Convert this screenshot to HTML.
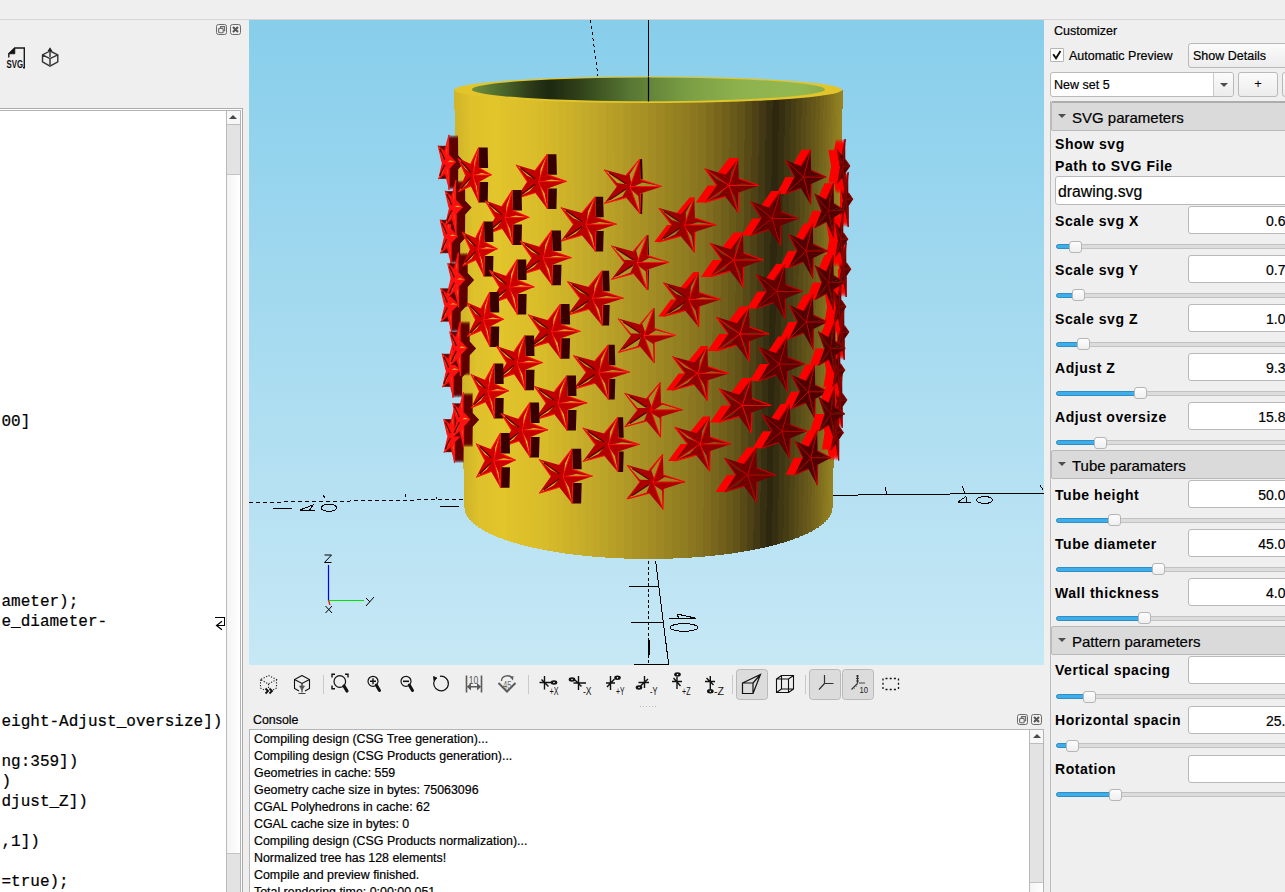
<!DOCTYPE html>
<html><head><meta charset="utf-8">
<style>
*{box-sizing:border-box;margin:0;padding:0}
html,body{width:1285px;height:892px;overflow:hidden;background:#efefef;font-family:"Liberation Sans",sans-serif;color:#000}
.a{position:absolute}
.topline{left:0;top:19px;width:1285px;height:1px;background:#d6d6d6}
/* editor */
.edframe{left:-2px;top:108px;width:245px;height:790px;border:1px solid #ababab;background:#fff}
.edinner{left:-2px;top:110px;width:243px;height:790px;border:1px solid #b3b3b3;background:#fff}
.ed{left:0;top:111px;width:226px;height:781px;background:#fff;font-family:"Liberation Mono",monospace;font-size:16px;white-space:pre;-webkit-text-stroke:0.2px #000}
.ed div{position:absolute;left:1.5px;height:20px;line-height:20px}
.vsb{border-left:1px solid #b9b9b9;background:linear-gradient(90deg,#f4f4f4,#ffffff)}
.sbbtn{background:#f7f7f7;border-bottom:1px solid #bdbdbd}
.sbhandle{background:#e3e3e3;border-bottom:1px solid #c4c4c4}
.uparrow{width:0;height:0;border-left:4px solid transparent;border-right:4px solid transparent;border-bottom:4px solid #4a4a4a}
/* console */
.cons{left:249px;top:729px;width:795px;height:170px;border:1px solid #b5b5b5;border-right:none;background:#fff;font-size:12.4px;-webkit-text-stroke:0.2px #000}
.cons div{position:absolute;margin-top:1px;left:4px;height:17px;line-height:17px;white-space:pre}
/* customizer */
.cust{font-size:12.5px;-webkit-text-stroke:0.2px #000}
.lbl{position:absolute;left:1055px;font-weight:bold;font-size:14px;letter-spacing:0.55px;white-space:pre}
.inp{position:absolute;left:1188px;width:110px;height:28px;background:#fff;border:1px solid #b9b9b9;border-radius:3px}
.val{position:absolute;font-size:14px;white-space:pre;-webkit-text-stroke:0.2px #000}
.groove{position:absolute;left:1056px;width:240px;height:5px;border-radius:3px;background:#dcdcdc;border:1px solid #c2c2c2}
.gfill{position:absolute;left:1056px;height:5px;border-radius:3px;background:#3daee9;border:1px solid #2f8fc4}
.handle{position:absolute;width:13px;height:12px;border-radius:3px;background:linear-gradient(#fdfdfd,#efefef);border:1px solid #b5b5b5}
.ghead{position:absolute;left:1051px;width:240px;height:30px;background:#dadada;border:1px solid #b9b9b9;border-top:2px solid #adadad;border-radius:2px;font-size:15px;white-space:pre}
.tri{position:absolute;width:0;height:0;border-left:4px solid transparent;border-right:4px solid transparent;border-top:4px solid #4d4d4d}
.btn{position:absolute;background:linear-gradient(#fbfbfb,#ececec);border:1px solid #b9b9b9;border-radius:3px}
.pressed{position:absolute;background:#dcdcdc;border:1px solid #b4b4b4;border-radius:3px}
</style></head><body>
<div class="a topline"></div>

<!-- LEFT PANEL -->
<svg class="a" style="left:215px;top:23px" width="28" height="14" viewBox="0 0 28 14">
 <rect x="1.5" y="1.5" width="10" height="10" rx="2" fill="none" stroke="#6b6b6b" stroke-width="1"/>
 <rect x="3.6" y="5.4" width="4.6" height="4.4" rx="1" fill="none" stroke="#6b6b6b" stroke-width="1.1"/>
 <path d="M5.6 5.2 V3.6 H9.6 V7.6 H8.4" fill="none" stroke="#6b6b6b" stroke-width="1.1"/>
 <rect x="15.5" y="1.5" width="10" height="10" rx="2" fill="none" stroke="#6b6b6b" stroke-width="1"/>
 <path d="M18 4 L23 9 M23 4 L18 9" stroke="#555" stroke-width="2"/>
</svg>
<svg class="a" style="left:0;top:40px" width="70" height="32" viewBox="0 40 70 32">
 <path d="M8.8 57.5 V53.8 L14.8 48 H24.3 V67.8 H23" fill="none" stroke="#1a1a1a" stroke-width="1.4"/>
 <path d="M8.8 53.8 L14.8 48 V53.8 Z" fill="#111" stroke="#111" stroke-width="0.8"/>
 <text x="6.5" y="68.3" font-family="Liberation Sans" font-weight="bold" font-size="11.5" fill="#111" textLength="16.5" lengthAdjust="spacingAndGlyphs">SVG</text>
 <path d="M42.5 54.8 L50 51 L57.8 54.8 V61.8 L50 66.2 L42.5 61.8 Z M42.5 54.8 L50 58.6 L57.8 54.8" fill="none" stroke="#333" stroke-width="1.4" stroke-linejoin="round"/>
 <path d="M50 58.6 V66" stroke="#555" stroke-width="1.8"/>
 <path d="M50 49.5 V57" stroke="#444" stroke-width="1.6"/>
 <path d="M47.6 51 L50 47.3 L52.4 51 Z" fill="#222"/>
</svg>

<div class="a edframe"></div>
<div class="a edinner"></div>
<div class="a ed" id="ed">
 <div style="top:301px">00]</div>
 <div style="top:481px">ameter);</div>
 <div style="top:501px">e_diameter-</div>
 <div style="top:601px">eight-Adjust_oversize])</div>
 <div style="top:641px">ng:359])</div>
 <div style="top:661px">)</div>
 <div style="top:681px">djust_Z])</div>
 <div style="top:721px">,1])</div>
 <div style="top:761px">=true);</div>
</div>
<svg class="a" style="left:210px;top:610px" width="20" height="24" viewBox="0 0 20 24">
 <path d="M5 7.5 H14.8 V15.5 H6.5" fill="none" stroke="#000" stroke-width="1.1" shape-rendering="crispEdges"/>
 <path d="M12 11.3 L6.5 15.5 L12 19.8" fill="none" stroke="#000" stroke-width="1.2"/>
</svg>
<div class="a vsb" style="left:226px;top:111px;width:14px;height:781px"></div>
<div class="a sbbtn" style="left:227px;top:111px;width:13px;height:14px"></div>
<div class="a uparrow" style="left:229px;top:115px"></div>
<div class="a sbhandle" style="left:227px;top:125px;width:13px;height:50px"></div>
<div class="a sbhandle" style="left:227px;top:853px;width:13px;height:40px;border-top:1px solid #c4c4c4"></div>

<!-- VIEWPORT -->
<div class="a" id="vp" style="left:249px;top:20px;width:795px;height:645px;overflow:hidden"><svg class="a" style="left:0;top:0" width="795" height="645" viewBox="249 20 795 645">
<defs>
 <linearGradient id="bg" x1="0" y1="0" x2="0" y2="1"><stop offset="0" stop-color="#87ceeb"/><stop offset="1" stop-color="#c7e8f5"/></linearGradient>
 <linearGradient id="cyl" gradientUnits="userSpaceOnUse" x1="454" y1="0" x2="842" y2="0">
  <stop offset="0" stop-color="#d0b42a"/>
  <stop offset="0.04" stop-color="#dec12b"/>
  <stop offset="0.1" stop-color="#e3c52c"/>
  <stop offset="0.22" stop-color="#d9bc2a"/>
  <stop offset="0.376" stop-color="#bea529"/>
  <stop offset="0.505" stop-color="#a48e24"/>
  <stop offset="0.634" stop-color="#897520"/>
  <stop offset="0.737" stop-color="#65561a"/>
  <stop offset="0.8" stop-color="#403613"/>
  <stop offset="0.83" stop-color="#2d2710"/>
  <stop offset="0.88" stop-color="#4a4016"/>
  <stop offset="0.943" stop-color="#6e5f1c"/>
  <stop offset="1" stop-color="#968422"/>
 </linearGradient>
 <linearGradient id="hole" gradientUnits="userSpaceOnUse" x1="472" y1="0" x2="825" y2="0">
  <stop offset="0" stop-color="#6f8f3e"/>
  <stop offset="0.09" stop-color="#4a6529"/>
  <stop offset="0.17" stop-color="#2a3917"/>
  <stop offset="0.22" stop-color="#1d2810"/>
  <stop offset="0.3" stop-color="#2f4019"/>
  <stop offset="0.45" stop-color="#587834"/>
  <stop offset="0.6" stop-color="#789c43"/>
  <stop offset="0.75" stop-color="#8db14d"/>
  <stop offset="0.93" stop-color="#94b851"/>
  <stop offset="1" stop-color="#8aad4a"/>
 </linearGradient>
</defs>
<rect x="249" y="20" width="795" height="645" fill="url(#bg)"/>
<!-- axes behind -->
<g stroke="#000" fill="none" stroke-width="1" shape-rendering="crispEdges">
 <path d="M648.5 20 V101"/>
 <path d="M590.5 20 L598 76" stroke-dasharray="3 3"/>
 <path d="M249 502.5 L465 499.3" stroke-dasharray="4 3"/>
 <path d="M831 495.3 L1044 493" />
 <path d="M885 487 L887 494 M962 486 L965 493 M1040 485 L1043 490"/>
 <path d="M323.5 495 L324.5 498 M405.5 494 L406 497 M436 497 L437 499"/>
 <path d="M273 508.5 H292 M440 506.5 H459"/>
 <path d="M300 510 H315 M300 510 L313 505 L309 511"/>
 <ellipse cx="329" cy="507.8" rx="7.7" ry="3.6"/>
 <path d="M958 502 H971 M958 502 L966 496.5 L967 503"/>
 <ellipse cx="984.6" cy="500" rx="8" ry="3.5"/>
 <path d="M648.5 561 V664" stroke-dasharray="3 2.5"/>
 <path d="M655.6 561 L668.6 664"/>
 <path d="M629 586.5 H658.3 M631 622.5 H663.3 M634 664 H669"/>
 <path d="M669 618 H696 M677 614 L679 619 M677 614 L695 618"/>
 <ellipse cx="684" cy="627.5" rx="14" ry="3.8"/>
 <path d="M648.5 640 V655" stroke-width="2"/>
</g>
<!-- cylinder -->
<g><polygon points="844.0,199.6 839.3,206.5 839.2,227.0 836.1,210.7 831.3,216.5 834.1,199.6 831.3,182.7 836.1,188.5 839.2,172.2 839.3,192.7" fill="#ff0000"/><polygon points="844.6,199.6 839.9,206.5 839.8,227.0 836.7,210.7 831.9,216.5 834.7,199.6 831.9,182.7 836.7,188.5 839.8,172.2 839.9,192.7" fill="#ff0000"/><polygon points="845.2,199.6 840.5,206.5 840.4,227.0 837.3,210.7 832.5,216.5 835.3,199.6 832.5,182.7 837.3,188.5 840.4,172.2 840.5,192.7" fill="#ff0000"/><polygon points="845.8,199.6 841.1,206.5 841.0,227.0 837.9,210.7 833.1,216.5 835.9,199.6 833.1,182.7 837.9,188.5 841.0,172.2 841.1,192.7" fill="#ff0000"/><polygon points="846.4,199.6 841.7,206.5 841.6,227.0 838.5,210.7 833.7,216.5 836.5,199.6 833.7,182.7 838.5,188.5 841.6,172.2 841.7,192.7" fill="#ff0000"/><polygon points="847.0,199.6 842.3,206.5 842.2,227.0 839.1,210.7 834.3,216.5 837.1,199.6 834.3,182.7 839.1,188.5 842.2,172.2 842.3,192.7" fill="#ff0000"/><polygon points="847.6,199.6 842.9,206.5 842.8,227.0 839.7,210.7 834.9,216.5 837.7,199.6 834.9,182.7 839.7,188.5 842.8,172.2 842.9,192.7" fill="#ff0000"/><polygon points="848.2,199.6 843.5,206.5 843.4,227.0 840.3,210.7 835.5,216.5 838.3,199.6 835.5,182.7 840.3,188.5 843.4,172.2 843.5,192.7" fill="#ff0000"/><polygon points="848.8,199.6 844.1,206.5 844.0,227.0 840.9,210.7 836.1,216.5 838.9,199.6 836.1,182.7 840.9,188.5 844.0,172.2 844.1,192.7" fill="#ff0000"/><polygon points="849.4,199.6 844.7,206.5 844.6,227.0 841.5,210.7 836.7,216.5 839.5,199.6 836.7,182.7 841.5,188.5 844.6,172.2 844.7,192.7" fill="#ff0000"/><polygon points="850.0,199.6 845.3,206.5 845.2,227.0 842.1,210.7 837.3,216.5 840.1,199.6 837.3,182.7 842.1,188.5 845.2,172.2 845.3,192.7" fill="#ff0000"/><polygon points="850.6,199.6 845.9,206.5 845.8,227.0 842.7,210.7 837.9,216.5 840.7,199.6 837.9,182.7 842.7,188.5 845.8,172.2 845.9,192.7" fill="#ff0000"/><polygon points="851.2,199.6 846.5,206.5 846.4,227.0 843.3,210.7 838.5,216.5 841.3,199.6 838.5,182.7 843.3,188.5 846.4,172.2 846.5,192.7" fill="#ff0000"/><polygon points="851.8,199.6 847.1,206.5 847.0,227.0 843.9,210.7 839.1,216.5 841.9,199.6 839.1,182.7 843.9,188.5 847.0,172.2 847.1,192.7" fill="#ff0000"/><polygon points="852.4,199.6 847.7,206.5 847.6,227.0 844.5,210.7 839.7,216.5 842.5,199.6 839.7,182.7 844.5,188.5 847.6,172.2 847.7,192.7" fill="#ff0000"/><polygon points="853.0,199.6 848.3,206.5 848.2,227.0 845.1,210.7 840.3,216.5 843.1,199.6 840.3,182.7 845.1,188.5 848.2,172.2 848.3,192.7" fill="#5a0000"/><polygon points="846.8,199.6 849.2,197.5 853.0,199.6" fill="url(#cyl)"/><polygon points="846.8,199.6 849.2,197.5 853.0,199.6" fill="#3a0000" fill-opacity="0.90"/><line x1="848.3" y1="192.7" x2="853.0" y2="199.6" stroke="#900000" stroke-width="1.1"/><polygon points="846.3,202.9 847.5,211.2 848.2,227.0" fill="url(#cyl)"/><polygon points="846.3,202.9 847.5,211.2 848.2,227.0" fill="#3a0000" fill-opacity="0.90"/><line x1="848.3" y1="206.5" x2="848.2" y2="227.0" stroke="#900000" stroke-width="1.1"/><polygon points="845.3,201.6 843.7,208.9 840.3,216.5" fill="url(#cyl)"/><polygon points="845.3,201.6 843.7,208.9 840.3,216.5" fill="#3a0000" fill-opacity="0.90"/><line x1="845.1" y1="210.7" x2="840.3" y2="216.5" stroke="#900000" stroke-width="1.1"/><polygon points="845.3,197.6 843.1,193.7 840.3,182.7" fill="url(#cyl)"/><polygon points="845.3,197.6 843.1,193.7 840.3,182.7" fill="#3a0000" fill-opacity="0.90"/><line x1="843.1" y1="199.6" x2="840.3" y2="182.7" stroke="#900000" stroke-width="1.1"/><polygon points="846.3,196.3 846.5,186.7 848.2,172.2" fill="url(#cyl)"/><polygon points="846.3,196.3 846.5,186.7 848.2,172.2" fill="#3a0000" fill-opacity="0.90"/><line x1="845.1" y1="188.5" x2="848.2" y2="172.2" stroke="#900000" stroke-width="1.1"/><line x1="846.0" y1="199.6" x2="853.0" y2="199.6" stroke="#900000" stroke-width="1.0"/><line x1="846.0" y1="199.6" x2="848.2" y2="227.0" stroke="#900000" stroke-width="1.0"/><line x1="846.0" y1="199.6" x2="840.3" y2="216.5" stroke="#900000" stroke-width="1.0"/><line x1="846.0" y1="199.6" x2="840.3" y2="182.7" stroke="#900000" stroke-width="1.0"/><line x1="846.0" y1="199.6" x2="848.2" y2="172.2" stroke="#900000" stroke-width="1.0"/></g>
<g><polygon points="842.0,269.6 837.3,276.5 837.2,297.0 834.1,280.7 829.3,286.5 832.1,269.6 829.3,252.7 834.1,258.5 837.2,242.2 837.3,262.7" fill="#ff0000"/><polygon points="842.6,269.6 837.9,276.5 837.8,297.0 834.7,280.7 829.9,286.5 832.7,269.6 829.9,252.7 834.7,258.5 837.8,242.2 837.9,262.7" fill="#ff0000"/><polygon points="843.2,269.6 838.5,276.5 838.4,297.0 835.3,280.7 830.5,286.5 833.3,269.6 830.5,252.7 835.3,258.5 838.4,242.2 838.5,262.7" fill="#ff0000"/><polygon points="843.8,269.6 839.1,276.5 839.0,297.0 835.9,280.7 831.1,286.5 833.9,269.6 831.1,252.7 835.9,258.5 839.0,242.2 839.1,262.7" fill="#ff0000"/><polygon points="844.4,269.6 839.7,276.5 839.6,297.0 836.5,280.7 831.7,286.5 834.5,269.6 831.7,252.7 836.5,258.5 839.6,242.2 839.7,262.7" fill="#ff0000"/><polygon points="845.0,269.6 840.3,276.5 840.2,297.0 837.1,280.7 832.3,286.5 835.1,269.6 832.3,252.7 837.1,258.5 840.2,242.2 840.3,262.7" fill="#ff0000"/><polygon points="845.6,269.6 840.9,276.5 840.8,297.0 837.7,280.7 832.9,286.5 835.7,269.6 832.9,252.7 837.7,258.5 840.8,242.2 840.9,262.7" fill="#ff0000"/><polygon points="846.2,269.6 841.5,276.5 841.4,297.0 838.3,280.7 833.5,286.5 836.3,269.6 833.5,252.7 838.3,258.5 841.4,242.2 841.5,262.7" fill="#ff0000"/><polygon points="846.8,269.6 842.1,276.5 842.0,297.0 838.9,280.7 834.1,286.5 836.9,269.6 834.1,252.7 838.9,258.5 842.0,242.2 842.1,262.7" fill="#ff0000"/><polygon points="847.4,269.6 842.7,276.5 842.6,297.0 839.5,280.7 834.7,286.5 837.5,269.6 834.7,252.7 839.5,258.5 842.6,242.2 842.7,262.7" fill="#ff0000"/><polygon points="848.0,269.6 843.3,276.5 843.2,297.0 840.1,280.7 835.3,286.5 838.1,269.6 835.3,252.7 840.1,258.5 843.2,242.2 843.3,262.7" fill="#ff0000"/><polygon points="848.6,269.6 843.9,276.5 843.8,297.0 840.7,280.7 835.9,286.5 838.7,269.6 835.9,252.7 840.7,258.5 843.8,242.2 843.9,262.7" fill="#ff0000"/><polygon points="849.2,269.6 844.5,276.5 844.4,297.0 841.3,280.7 836.5,286.5 839.3,269.6 836.5,252.7 841.3,258.5 844.4,242.2 844.5,262.7" fill="#ff0000"/><polygon points="849.8,269.6 845.1,276.5 845.0,297.0 841.9,280.7 837.1,286.5 839.9,269.6 837.1,252.7 841.9,258.5 845.0,242.2 845.1,262.7" fill="#ff0000"/><polygon points="850.4,269.6 845.7,276.5 845.6,297.0 842.5,280.7 837.7,286.5 840.5,269.6 837.7,252.7 842.5,258.5 845.6,242.2 845.7,262.7" fill="#ff0000"/><polygon points="851.0,269.6 846.3,276.5 846.2,297.0 843.1,280.7 838.3,286.5 841.1,269.6 838.3,252.7 843.1,258.5 846.2,242.2 846.3,262.7" fill="#5a0000"/><polygon points="844.8,269.6 847.2,267.5 851.0,269.6" fill="url(#cyl)"/><polygon points="844.8,269.6 847.2,267.5 851.0,269.6" fill="#3a0000" fill-opacity="0.90"/><line x1="846.3" y1="262.7" x2="851.0" y2="269.6" stroke="#900000" stroke-width="1.1"/><polygon points="844.3,272.9 845.5,281.2 846.2,297.0" fill="url(#cyl)"/><polygon points="844.3,272.9 845.5,281.2 846.2,297.0" fill="#3a0000" fill-opacity="0.90"/><line x1="846.3" y1="276.5" x2="846.2" y2="297.0" stroke="#900000" stroke-width="1.1"/><polygon points="843.3,271.6 841.7,278.9 838.3,286.5" fill="url(#cyl)"/><polygon points="843.3,271.6 841.7,278.9 838.3,286.5" fill="#3a0000" fill-opacity="0.90"/><line x1="843.1" y1="280.7" x2="838.3" y2="286.5" stroke="#900000" stroke-width="1.1"/><polygon points="843.3,267.6 841.1,263.7 838.3,252.7" fill="url(#cyl)"/><polygon points="843.3,267.6 841.1,263.7 838.3,252.7" fill="#3a0000" fill-opacity="0.90"/><line x1="841.1" y1="269.6" x2="838.3" y2="252.7" stroke="#900000" stroke-width="1.1"/><polygon points="844.3,266.3 844.5,256.7 846.2,242.2" fill="url(#cyl)"/><polygon points="844.3,266.3 844.5,256.7 846.2,242.2" fill="#3a0000" fill-opacity="0.90"/><line x1="843.1" y1="258.5" x2="846.2" y2="242.2" stroke="#900000" stroke-width="1.1"/><line x1="844.0" y1="269.6" x2="851.0" y2="269.6" stroke="#900000" stroke-width="1.0"/><line x1="844.0" y1="269.6" x2="846.2" y2="297.0" stroke="#900000" stroke-width="1.0"/><line x1="844.0" y1="269.6" x2="838.3" y2="286.5" stroke="#900000" stroke-width="1.0"/><line x1="844.0" y1="269.6" x2="838.3" y2="252.7" stroke="#900000" stroke-width="1.0"/><line x1="844.0" y1="269.6" x2="846.2" y2="242.2" stroke="#900000" stroke-width="1.0"/></g>
<g><polygon points="840.0,332.4 835.3,339.3 835.2,359.8 832.1,343.5 827.3,349.3 830.1,332.4 827.3,315.5 832.1,321.3 835.2,305.0 835.3,325.5" fill="#ff0000"/><polygon points="840.6,332.4 835.9,339.3 835.8,359.8 832.7,343.5 827.9,349.3 830.7,332.4 827.9,315.5 832.7,321.3 835.8,305.0 835.9,325.5" fill="#ff0000"/><polygon points="841.2,332.4 836.5,339.3 836.4,359.8 833.3,343.5 828.5,349.3 831.3,332.4 828.5,315.5 833.3,321.3 836.4,305.0 836.5,325.5" fill="#ff0000"/><polygon points="841.8,332.4 837.1,339.3 837.0,359.8 833.9,343.5 829.1,349.3 831.9,332.4 829.1,315.5 833.9,321.3 837.0,305.0 837.1,325.5" fill="#ff0000"/><polygon points="842.4,332.4 837.7,339.3 837.6,359.8 834.5,343.5 829.7,349.3 832.5,332.4 829.7,315.5 834.5,321.3 837.6,305.0 837.7,325.5" fill="#ff0000"/><polygon points="843.0,332.4 838.3,339.3 838.2,359.8 835.1,343.5 830.3,349.3 833.1,332.4 830.3,315.5 835.1,321.3 838.2,305.0 838.3,325.5" fill="#ff0000"/><polygon points="843.6,332.4 838.9,339.3 838.8,359.8 835.7,343.5 830.9,349.3 833.7,332.4 830.9,315.5 835.7,321.3 838.8,305.0 838.9,325.5" fill="#ff0000"/><polygon points="844.2,332.4 839.5,339.3 839.4,359.8 836.3,343.5 831.5,349.3 834.3,332.4 831.5,315.5 836.3,321.3 839.4,305.0 839.5,325.5" fill="#ff0000"/><polygon points="844.8,332.4 840.1,339.3 840.0,359.8 836.9,343.5 832.1,349.3 834.9,332.4 832.1,315.5 836.9,321.3 840.0,305.0 840.1,325.5" fill="#ff0000"/><polygon points="845.4,332.4 840.7,339.3 840.6,359.8 837.5,343.5 832.7,349.3 835.5,332.4 832.7,315.5 837.5,321.3 840.6,305.0 840.7,325.5" fill="#ff0000"/><polygon points="846.0,332.4 841.3,339.3 841.2,359.8 838.1,343.5 833.3,349.3 836.1,332.4 833.3,315.5 838.1,321.3 841.2,305.0 841.3,325.5" fill="#ff0000"/><polygon points="846.6,332.4 841.9,339.3 841.8,359.8 838.7,343.5 833.9,349.3 836.7,332.4 833.9,315.5 838.7,321.3 841.8,305.0 841.9,325.5" fill="#ff0000"/><polygon points="847.2,332.4 842.5,339.3 842.4,359.8 839.3,343.5 834.5,349.3 837.3,332.4 834.5,315.5 839.3,321.3 842.4,305.0 842.5,325.5" fill="#ff0000"/><polygon points="847.8,332.4 843.1,339.3 843.0,359.8 839.9,343.5 835.1,349.3 837.9,332.4 835.1,315.5 839.9,321.3 843.0,305.0 843.1,325.5" fill="#ff0000"/><polygon points="848.4,332.4 843.7,339.3 843.6,359.8 840.5,343.5 835.7,349.3 838.5,332.4 835.7,315.5 840.5,321.3 843.6,305.0 843.7,325.5" fill="#ff0000"/><polygon points="849.0,332.4 844.3,339.3 844.2,359.8 841.1,343.5 836.3,349.3 839.1,332.4 836.3,315.5 841.1,321.3 844.2,305.0 844.3,325.5" fill="#5a0000"/><polygon points="842.8,332.4 845.2,330.3 849.0,332.4" fill="url(#cyl)"/><polygon points="842.8,332.4 845.2,330.3 849.0,332.4" fill="#3a0000" fill-opacity="0.90"/><line x1="844.3" y1="325.5" x2="849.0" y2="332.4" stroke="#900000" stroke-width="1.1"/><polygon points="842.3,335.7 843.5,344.0 844.2,359.8" fill="url(#cyl)"/><polygon points="842.3,335.7 843.5,344.0 844.2,359.8" fill="#3a0000" fill-opacity="0.90"/><line x1="844.3" y1="339.3" x2="844.2" y2="359.8" stroke="#900000" stroke-width="1.1"/><polygon points="841.3,334.4 839.7,341.7 836.3,349.3" fill="url(#cyl)"/><polygon points="841.3,334.4 839.7,341.7 836.3,349.3" fill="#3a0000" fill-opacity="0.90"/><line x1="841.1" y1="343.5" x2="836.3" y2="349.3" stroke="#900000" stroke-width="1.1"/><polygon points="841.3,330.4 839.1,326.5 836.3,315.5" fill="url(#cyl)"/><polygon points="841.3,330.4 839.1,326.5 836.3,315.5" fill="#3a0000" fill-opacity="0.90"/><line x1="839.1" y1="332.4" x2="836.3" y2="315.5" stroke="#900000" stroke-width="1.1"/><polygon points="842.3,329.1 842.5,319.5 844.2,305.0" fill="url(#cyl)"/><polygon points="842.3,329.1 842.5,319.5 844.2,305.0" fill="#3a0000" fill-opacity="0.90"/><line x1="841.1" y1="321.3" x2="844.2" y2="305.0" stroke="#900000" stroke-width="1.1"/><line x1="842.0" y1="332.4" x2="849.0" y2="332.4" stroke="#900000" stroke-width="1.0"/><line x1="842.0" y1="332.4" x2="844.2" y2="359.8" stroke="#900000" stroke-width="1.0"/><line x1="842.0" y1="332.4" x2="836.3" y2="349.3" stroke="#900000" stroke-width="1.0"/><line x1="842.0" y1="332.4" x2="836.3" y2="315.5" stroke="#900000" stroke-width="1.0"/><line x1="842.0" y1="332.4" x2="844.2" y2="305.0" stroke="#900000" stroke-width="1.0"/></g>
<g><polygon points="838.0,400.4 833.3,407.3 833.2,427.8 830.1,411.5 825.3,417.3 828.1,400.4 825.3,383.5 830.1,389.3 833.2,373.0 833.3,393.5" fill="#ff0000"/><polygon points="838.6,400.4 833.9,407.3 833.8,427.8 830.7,411.5 825.9,417.3 828.7,400.4 825.9,383.5 830.7,389.3 833.8,373.0 833.9,393.5" fill="#ff0000"/><polygon points="839.2,400.4 834.5,407.3 834.4,427.8 831.3,411.5 826.5,417.3 829.3,400.4 826.5,383.5 831.3,389.3 834.4,373.0 834.5,393.5" fill="#ff0000"/><polygon points="839.8,400.4 835.1,407.3 835.0,427.8 831.9,411.5 827.1,417.3 829.9,400.4 827.1,383.5 831.9,389.3 835.0,373.0 835.1,393.5" fill="#ff0000"/><polygon points="840.4,400.4 835.7,407.3 835.6,427.8 832.5,411.5 827.7,417.3 830.5,400.4 827.7,383.5 832.5,389.3 835.6,373.0 835.7,393.5" fill="#ff0000"/><polygon points="841.0,400.4 836.3,407.3 836.2,427.8 833.1,411.5 828.3,417.3 831.1,400.4 828.3,383.5 833.1,389.3 836.2,373.0 836.3,393.5" fill="#ff0000"/><polygon points="841.6,400.4 836.9,407.3 836.8,427.8 833.7,411.5 828.9,417.3 831.7,400.4 828.9,383.5 833.7,389.3 836.8,373.0 836.9,393.5" fill="#ff0000"/><polygon points="842.2,400.4 837.5,407.3 837.4,427.8 834.3,411.5 829.5,417.3 832.3,400.4 829.5,383.5 834.3,389.3 837.4,373.0 837.5,393.5" fill="#ff0000"/><polygon points="842.8,400.4 838.1,407.3 838.0,427.8 834.9,411.5 830.1,417.3 832.9,400.4 830.1,383.5 834.9,389.3 838.0,373.0 838.1,393.5" fill="#ff0000"/><polygon points="843.4,400.4 838.7,407.3 838.6,427.8 835.5,411.5 830.7,417.3 833.5,400.4 830.7,383.5 835.5,389.3 838.6,373.0 838.7,393.5" fill="#ff0000"/><polygon points="844.0,400.4 839.3,407.3 839.2,427.8 836.1,411.5 831.3,417.3 834.1,400.4 831.3,383.5 836.1,389.3 839.2,373.0 839.3,393.5" fill="#ff0000"/><polygon points="844.6,400.4 839.9,407.3 839.8,427.8 836.7,411.5 831.9,417.3 834.7,400.4 831.9,383.5 836.7,389.3 839.8,373.0 839.9,393.5" fill="#ff0000"/><polygon points="845.2,400.4 840.5,407.3 840.4,427.8 837.3,411.5 832.5,417.3 835.3,400.4 832.5,383.5 837.3,389.3 840.4,373.0 840.5,393.5" fill="#ff0000"/><polygon points="845.8,400.4 841.1,407.3 841.0,427.8 837.9,411.5 833.1,417.3 835.9,400.4 833.1,383.5 837.9,389.3 841.0,373.0 841.1,393.5" fill="#ff0000"/><polygon points="846.4,400.4 841.7,407.3 841.6,427.8 838.5,411.5 833.7,417.3 836.5,400.4 833.7,383.5 838.5,389.3 841.6,373.0 841.7,393.5" fill="#ff0000"/><polygon points="847.0,400.4 842.3,407.3 842.2,427.8 839.1,411.5 834.3,417.3 837.1,400.4 834.3,383.5 839.1,389.3 842.2,373.0 842.3,393.5" fill="#5a0000"/><polygon points="840.8,400.4 843.2,398.3 847.0,400.4" fill="url(#cyl)"/><polygon points="840.8,400.4 843.2,398.3 847.0,400.4" fill="#3a0000" fill-opacity="0.90"/><line x1="842.3" y1="393.5" x2="847.0" y2="400.4" stroke="#900000" stroke-width="1.1"/><polygon points="840.3,403.7 841.5,412.0 842.2,427.8" fill="url(#cyl)"/><polygon points="840.3,403.7 841.5,412.0 842.2,427.8" fill="#3a0000" fill-opacity="0.90"/><line x1="842.3" y1="407.3" x2="842.2" y2="427.8" stroke="#900000" stroke-width="1.1"/><polygon points="839.3,402.4 837.7,409.7 834.3,417.3" fill="url(#cyl)"/><polygon points="839.3,402.4 837.7,409.7 834.3,417.3" fill="#3a0000" fill-opacity="0.90"/><line x1="839.1" y1="411.5" x2="834.3" y2="417.3" stroke="#900000" stroke-width="1.1"/><polygon points="839.3,398.4 837.1,394.5 834.3,383.5" fill="url(#cyl)"/><polygon points="839.3,398.4 837.1,394.5 834.3,383.5" fill="#3a0000" fill-opacity="0.90"/><line x1="837.1" y1="400.4" x2="834.3" y2="383.5" stroke="#900000" stroke-width="1.1"/><polygon points="840.3,397.1 840.5,387.5 842.2,373.0" fill="url(#cyl)"/><polygon points="840.3,397.1 840.5,387.5 842.2,373.0" fill="#3a0000" fill-opacity="0.90"/><line x1="839.1" y1="389.3" x2="842.2" y2="373.0" stroke="#900000" stroke-width="1.1"/><line x1="840.0" y1="400.4" x2="847.0" y2="400.4" stroke="#900000" stroke-width="1.0"/><line x1="840.0" y1="400.4" x2="842.2" y2="427.8" stroke="#900000" stroke-width="1.0"/><line x1="840.0" y1="400.4" x2="834.3" y2="417.3" stroke="#900000" stroke-width="1.0"/><line x1="840.0" y1="400.4" x2="834.3" y2="383.5" stroke="#900000" stroke-width="1.0"/><line x1="840.0" y1="400.4" x2="842.2" y2="373.0" stroke="#900000" stroke-width="1.0"/></g>
<g shape-rendering="crispEdges"><polygon points="454.00,89.80 455.18,90.24 465.67,510.22 464.50,508.00" fill="#d0b42a"/>
<polygon points="454.18,90.24 455.74,90.69 466.20,512.44 464.67,510.22" fill="#d0b42a"/>
<polygon points="454.74,90.69 456.66,91.13 467.07,514.66 465.20,512.44" fill="#d1b42a"/>
<polygon points="455.66,91.13 457.95,91.57 468.29,516.86 466.07,514.66" fill="#d2b52a"/>
<polygon points="456.95,91.57 459.60,92.01 469.85,519.04 467.29,516.86" fill="#d3b72a"/>
<polygon points="458.60,92.01 461.61,92.44 471.75,521.20 468.85,519.04" fill="#d5b82a"/>
<polygon points="460.61,92.44 463.98,92.87 473.99,523.34 470.75,521.20" fill="#d6ba2a"/>
<polygon points="462.98,92.87 466.70,93.29 476.57,525.44 472.99,523.34" fill="#d9bc2a"/>
<polygon points="465.70,93.29 469.77,93.70 479.47,527.52 475.57,525.44" fill="#dbbf2a"/>
<polygon points="468.77,93.70 473.18,94.11 482.69,529.55 478.47,527.52" fill="#dec12b"/>
<polygon points="472.18,94.11 476.92,94.51 486.23,531.55 481.69,529.55" fill="#dec12b"/>
<polygon points="475.92,94.51 480.99,94.90 490.08,533.50 485.23,531.55" fill="#dfc22b"/>
<polygon points="479.99,94.90 485.38,95.28 494.24,535.40 489.08,533.50" fill="#e0c32b"/>
<polygon points="484.38,95.28 490.08,95.65 498.69,537.25 493.24,535.40" fill="#e1c32b"/>
<polygon points="489.08,95.65 495.09,96.01 503.42,539.05 497.69,537.25" fill="#e2c42b"/>
<polygon points="494.09,96.01 500.39,96.36 508.43,540.78 502.42,539.05" fill="#e2c42b"/>
<polygon points="499.39,96.36 505.97,96.69 513.71,542.46 507.43,540.78" fill="#e0c32b"/>
<polygon points="504.97,96.69 511.82,97.01 519.25,544.06 512.71,542.46" fill="#dfc22b"/>
<polygon points="510.82,97.01 517.94,97.32 525.03,545.60 518.25,544.06" fill="#dec02b"/>
<polygon points="516.94,97.32 524.30,97.61 531.05,547.07 524.03,545.60" fill="#ddbf2a"/>
<polygon points="523.30,97.61 530.90,97.89 537.29,548.46 530.05,547.07" fill="#dbbe2a"/>
<polygon points="529.90,97.89 537.73,98.16 543.75,549.78 536.29,548.46" fill="#dabd2a"/>
<polygon points="536.73,98.16 544.76,98.40 550.41,551.01 542.75,549.78" fill="#d8bb29"/>
<polygon points="543.76,98.40 552.00,98.63 557.25,552.17 549.41,551.01" fill="#d5b829"/>
<polygon points="551.00,98.63 559.42,98.85 564.27,553.24 556.25,552.17" fill="#d2b629"/>
<polygon points="558.42,98.85 567.01,99.04 571.45,554.22 563.27,553.24" fill="#ceb329"/>
<polygon points="566.01,99.04 574.76,99.22 578.78,555.12 570.45,554.22" fill="#cbb029"/>
<polygon points="573.76,99.22 582.65,99.38 586.24,555.92 577.78,555.12" fill="#c7ad29"/>
<polygon points="581.65,99.38 590.66,99.53 593.82,556.64 585.24,555.92" fill="#c4aa29"/>
<polygon points="589.66,99.53 598.79,99.65 601.51,557.26 592.82,556.64" fill="#c0a729"/>
<polygon points="597.79,99.65 607.01,99.76 609.28,557.79 600.51,557.26" fill="#bca428"/>
<polygon points="606.01,99.76 615.31,99.85 617.14,558.23 608.28,557.79" fill="#b8a027"/>
<polygon points="614.31,99.85 623.68,99.91 625.05,558.56 616.14,558.23" fill="#b49c27"/>
<polygon points="622.68,99.91 632.09,99.96 633.01,558.81 624.05,558.56" fill="#af9826"/>
<polygon points="631.09,99.96 640.54,99.99 641.00,558.95 632.01,558.81" fill="#ab9425"/>
<polygon points="639.54,99.99 649.00,100.00 649.00,559.00 640.00,558.95" fill="#a79024"/>
<polygon points="648.00,100.00 657.46,99.99 657.00,558.95 648.00,559.00" fill="#a28c23"/>
<polygon points="656.46,99.99 665.91,99.96 664.99,558.81 656.00,558.95" fill="#9e8823"/>
<polygon points="664.91,99.96 674.32,99.91 672.95,558.56 663.99,558.81" fill="#998422"/>
<polygon points="673.32,99.91 682.69,99.85 680.86,558.23 671.95,558.56" fill="#958021"/>
<polygon points="681.69,99.85 690.99,99.76 688.72,557.79 679.86,558.23" fill="#907c21"/>
<polygon points="689.99,99.76 699.21,99.65 696.49,557.26 687.72,557.79" fill="#8c7720"/>
<polygon points="698.21,99.65 707.34,99.53 704.18,556.64 695.49,557.26" fill="#86731f"/>
<polygon points="706.34,99.53 715.35,99.38 711.76,555.92 703.18,556.64" fill="#7f6c1e"/>
<polygon points="714.35,99.38 723.24,99.22 719.22,555.12 710.76,555.92" fill="#78661d"/>
<polygon points="722.24,99.22 730.99,99.04 726.55,554.22 718.22,555.12" fill="#71601c"/>
<polygon points="729.99,99.04 738.58,98.85 733.73,553.24 725.55,554.22" fill="#6a5a1a"/>
<polygon points="737.58,98.85 746.00,98.63 740.75,552.17 732.73,553.24" fill="#625419"/>
<polygon points="745.00,98.63 753.24,98.40 747.59,551.01 739.75,552.17" fill="#574a17"/>
<polygon points="752.24,98.40 760.27,98.16 754.25,549.78 746.59,551.01" fill="#4d4115"/>
<polygon points="759.27,98.16 767.10,97.89 760.71,548.46 753.25,549.78" fill="#423813"/>
<polygon points="766.10,97.89 773.70,97.61 766.95,547.07 759.71,548.46" fill="#372f11"/>
<polygon points="772.70,97.61 780.06,97.32 772.97,545.60 765.95,547.07" fill="#2d2710"/>
<polygon points="779.06,97.32 786.18,97.01 778.75,544.06 771.97,545.60" fill="#362e11"/>
<polygon points="785.18,97.01 792.03,96.69 784.29,542.46 777.75,544.06" fill="#3f3613"/>
<polygon points="791.03,96.69 797.61,96.36 789.57,540.78 783.29,542.46" fill="#473d15"/>
<polygon points="796.61,96.36 802.91,96.01 794.58,539.05 788.57,540.78" fill="#4f4416"/>
<polygon points="801.91,96.01 807.92,95.65 799.31,537.25 793.58,539.05" fill="#574b18"/>
<polygon points="806.92,95.65 812.62,95.28 803.76,535.40 798.31,537.25" fill="#5e5119"/>
<polygon points="811.62,95.28 817.01,94.90 807.92,533.50 802.76,535.40" fill="#65571a"/>
<polygon points="816.01,94.90 821.08,94.51 811.77,531.55 806.92,533.50" fill="#6b5c1b"/>
<polygon points="820.08,94.51 824.82,94.11 815.31,529.55 810.77,531.55" fill="#71621c"/>
<polygon points="823.82,94.11 828.23,93.70 818.53,527.52 814.31,529.55" fill="#78681d"/>
<polygon points="827.23,93.70 831.30,93.29 821.43,525.44 817.53,527.52" fill="#7e6d1e"/>
<polygon points="830.30,93.29 834.02,92.87 824.01,523.34 820.43,525.44" fill="#83721f"/>
<polygon points="833.02,92.87 836.39,92.44 826.25,521.20 823.01,523.34" fill="#87771f"/>
<polygon points="835.39,92.44 838.40,92.01 828.15,519.04 825.25,521.20" fill="#8b7a20"/>
<polygon points="837.40,92.01 840.05,91.57 829.71,516.86 827.15,519.04" fill="#8f7d20"/>
<polygon points="839.05,91.57 841.34,91.13 830.93,514.66 828.71,516.86" fill="#918021"/>
<polygon points="840.34,91.13 842.26,90.69 831.80,512.44 829.93,514.66" fill="#938221"/>
<polygon points="841.26,90.69 842.82,90.24 832.33,510.22 830.80,512.44" fill="#958321"/>
<polygon points="841.82,90.24 843.00,89.80 832.50,508.00 831.33,510.22" fill="#958321"/></g>
<ellipse cx="648" cy="89.8" rx="194" ry="13.2" fill="#e2c52b"/>
<ellipse cx="648.4" cy="89.4" rx="176.6" ry="11.8" fill="url(#hole)"/>
<path d="M648.5 77 V101.5" stroke="#000" stroke-width="1.2"/>
<g><polygon points="464.6,162.3 458.2,169.2 458.0,189.7 453.8,173.4 447.2,179.2 451.1,162.3 447.2,145.4 453.8,151.2 458.0,134.9 458.2,155.4" fill="#600000"/><polygon points="464.0,162.3 457.6,169.2 457.4,189.7 453.2,173.4 446.6,179.2 450.5,162.3 446.6,145.4 453.2,151.2 457.4,134.9 457.6,155.4" fill="#600000"/><polygon points="463.4,162.3 457.0,169.2 456.8,189.7 452.6,173.4 446.0,179.2 449.9,162.3 446.0,145.4 452.6,151.2 456.8,134.9 457.0,155.4" fill="#600000"/><polygon points="462.8,162.3 456.4,169.2 456.2,189.7 452.0,173.4 445.4,179.2 449.3,162.3 445.4,145.4 452.0,151.2 456.2,134.9 456.4,155.4" fill="#600000"/><polygon points="462.2,162.3 455.8,169.2 455.6,189.7 451.4,173.4 444.8,179.2 448.7,162.3 444.8,145.4 451.4,151.2 455.6,134.9 455.8,155.4" fill="#600000"/><polygon points="461.6,162.3 455.2,169.2 455.0,189.7 450.8,173.4 444.2,179.2 448.1,162.3 444.2,145.4 450.8,151.2 455.0,134.9 455.2,155.4" fill="#600000"/><polygon points="461.0,162.3 454.6,169.2 454.4,189.7 450.2,173.4 443.6,179.2 447.5,162.3 443.6,145.4 450.2,151.2 454.4,134.9 454.6,155.4" fill="#600000"/><polygon points="460.4,162.3 454.0,169.2 453.8,189.7 449.6,173.4 443.0,179.2 446.9,162.3 443.0,145.4 449.6,151.2 453.8,134.9 454.0,155.4" fill="#600000"/><polygon points="459.8,162.3 453.4,169.2 453.2,189.7 449.0,173.4 442.4,179.2 446.3,162.3 442.4,145.4 449.0,151.2 453.2,134.9 453.4,155.4" fill="#600000"/><polygon points="459.2,162.3 452.8,169.2 452.6,189.7 448.4,173.4 441.8,179.2 445.7,162.3 441.8,145.4 448.4,151.2 452.6,134.9 452.8,155.4" fill="#600000"/><polygon points="458.6,162.3 452.2,169.2 452.0,189.7 447.8,173.4 441.2,179.2 445.1,162.3 441.2,145.4 447.8,151.2 452.0,134.9 452.2,155.4" fill="#600000"/><polygon points="458.0,162.3 451.6,169.2 451.4,189.7 447.2,173.4 440.6,179.2 444.5,162.3 440.6,145.4 447.2,151.2 451.4,134.9 451.6,155.4" fill="#600000"/><polygon points="457.4,162.3 451.0,169.2 450.8,189.7 446.6,173.4 440.0,179.2 443.9,162.3 440.0,145.4 446.6,151.2 450.8,134.9 451.0,155.4" fill="#600000"/><polygon points="456.8,162.3 450.4,169.2 450.2,189.7 446.0,173.4 439.4,179.2 443.3,162.3 439.4,145.4 446.0,151.2 450.2,134.9 450.4,155.4" fill="#600000"/><polygon points="456.2,162.3 449.8,169.2 449.6,189.7 445.4,173.4 438.8,179.2 442.7,162.3 438.8,145.4 445.4,151.2 449.6,134.9 449.8,155.4" fill="#600000"/><polygon points="455.6,162.3 449.2,169.2 449.0,189.7 444.8,173.4 438.2,179.2 442.1,162.3 438.2,145.4 444.8,151.2 449.0,134.9 449.2,155.4" fill="#ff1010"/><polygon points="447.2,162.3 450.3,160.2 455.6,162.3" fill="url(#cyl)"/><line x1="449.2" y1="155.4" x2="455.6" y2="162.3" stroke="#ff1010" stroke-width="1.1"/><polygon points="446.4,165.6 448.0,173.9 449.0,189.7" fill="url(#cyl)"/><line x1="449.2" y1="169.2" x2="449.0" y2="189.7" stroke="#ff1010" stroke-width="1.1"/><polygon points="445.1,164.3 442.9,171.6 438.2,179.2" fill="url(#cyl)"/><line x1="444.8" y1="173.4" x2="438.2" y2="179.2" stroke="#ff1010" stroke-width="1.1"/><polygon points="445.1,160.3 442.1,156.4 438.2,145.4" fill="url(#cyl)"/><line x1="442.1" y1="162.3" x2="438.2" y2="145.4" stroke="#ff1010" stroke-width="1.1"/><polygon points="446.4,159.0 446.7,149.4 449.0,134.9" fill="url(#cyl)"/><line x1="444.8" y1="151.2" x2="449.0" y2="134.9" stroke="#ff1010" stroke-width="1.1"/><line x1="446.0" y1="162.3" x2="455.6" y2="162.3" stroke="#ff1010" stroke-width="1.0"/><line x1="446.0" y1="162.3" x2="449.0" y2="189.7" stroke="#ff1010" stroke-width="1.0"/><line x1="444.8" y1="164.8" x2="439.8" y2="175.8" stroke="#5a0000" stroke-width="1.4"/><line x1="444.8" y1="159.8" x2="439.8" y2="148.8" stroke="#5a0000" stroke-width="1.4"/><line x1="446.0" y1="162.3" x2="449.0" y2="134.9" stroke="#ff1010" stroke-width="1.0"/></g>
<g><polygon points="466.6,236.5 460.2,243.4 460.0,263.9 455.8,247.6 449.2,253.4 453.1,236.5 449.2,219.6 455.8,225.4 460.0,209.1 460.2,229.6" fill="#600000"/><polygon points="466.0,236.5 459.6,243.4 459.4,263.9 455.2,247.6 448.6,253.4 452.5,236.5 448.6,219.6 455.2,225.4 459.4,209.1 459.6,229.6" fill="#600000"/><polygon points="465.4,236.5 459.0,243.4 458.8,263.9 454.6,247.6 448.0,253.4 451.9,236.5 448.0,219.6 454.6,225.4 458.8,209.1 459.0,229.6" fill="#600000"/><polygon points="464.8,236.5 458.4,243.4 458.2,263.9 454.0,247.6 447.4,253.4 451.3,236.5 447.4,219.6 454.0,225.4 458.2,209.1 458.4,229.6" fill="#600000"/><polygon points="464.2,236.5 457.8,243.4 457.6,263.9 453.4,247.6 446.8,253.4 450.7,236.5 446.8,219.6 453.4,225.4 457.6,209.1 457.8,229.6" fill="#600000"/><polygon points="463.6,236.5 457.2,243.4 457.0,263.9 452.8,247.6 446.2,253.4 450.1,236.5 446.2,219.6 452.8,225.4 457.0,209.1 457.2,229.6" fill="#600000"/><polygon points="463.0,236.5 456.6,243.4 456.4,263.9 452.2,247.6 445.6,253.4 449.5,236.5 445.6,219.6 452.2,225.4 456.4,209.1 456.6,229.6" fill="#600000"/><polygon points="462.4,236.5 456.0,243.4 455.8,263.9 451.6,247.6 445.0,253.4 448.9,236.5 445.0,219.6 451.6,225.4 455.8,209.1 456.0,229.6" fill="#600000"/><polygon points="461.8,236.5 455.4,243.4 455.2,263.9 451.0,247.6 444.4,253.4 448.3,236.5 444.4,219.6 451.0,225.4 455.2,209.1 455.4,229.6" fill="#600000"/><polygon points="461.2,236.5 454.8,243.4 454.6,263.9 450.4,247.6 443.8,253.4 447.7,236.5 443.8,219.6 450.4,225.4 454.6,209.1 454.8,229.6" fill="#600000"/><polygon points="460.6,236.5 454.2,243.4 454.0,263.9 449.8,247.6 443.2,253.4 447.1,236.5 443.2,219.6 449.8,225.4 454.0,209.1 454.2,229.6" fill="#600000"/><polygon points="460.0,236.5 453.6,243.4 453.4,263.9 449.2,247.6 442.6,253.4 446.5,236.5 442.6,219.6 449.2,225.4 453.4,209.1 453.6,229.6" fill="#600000"/><polygon points="459.4,236.5 453.0,243.4 452.8,263.9 448.6,247.6 442.0,253.4 445.9,236.5 442.0,219.6 448.6,225.4 452.8,209.1 453.0,229.6" fill="#600000"/><polygon points="458.8,236.5 452.4,243.4 452.2,263.9 448.0,247.6 441.4,253.4 445.3,236.5 441.4,219.6 448.0,225.4 452.2,209.1 452.4,229.6" fill="#600000"/><polygon points="458.2,236.5 451.8,243.4 451.6,263.9 447.4,247.6 440.8,253.4 444.7,236.5 440.8,219.6 447.4,225.4 451.6,209.1 451.8,229.6" fill="#600000"/><polygon points="457.6,236.5 451.2,243.4 451.0,263.9 446.8,247.6 440.2,253.4 444.1,236.5 440.2,219.6 446.8,225.4 451.0,209.1 451.2,229.6" fill="#ff1010"/><polygon points="449.2,236.5 452.3,234.4 457.6,236.5" fill="url(#cyl)"/><line x1="451.2" y1="229.6" x2="457.6" y2="236.5" stroke="#ff1010" stroke-width="1.1"/><polygon points="448.4,239.8 450.0,248.1 451.0,263.9" fill="url(#cyl)"/><line x1="451.2" y1="243.4" x2="451.0" y2="263.9" stroke="#ff1010" stroke-width="1.1"/><polygon points="447.1,238.5 444.9,245.8 440.2,253.4" fill="url(#cyl)"/><line x1="446.8" y1="247.6" x2="440.2" y2="253.4" stroke="#ff1010" stroke-width="1.1"/><polygon points="447.1,234.5 444.1,230.6 440.2,219.6" fill="url(#cyl)"/><line x1="444.1" y1="236.5" x2="440.2" y2="219.6" stroke="#ff1010" stroke-width="1.1"/><polygon points="448.4,233.2 448.7,223.6 451.0,209.1" fill="url(#cyl)"/><line x1="446.8" y1="225.4" x2="451.0" y2="209.1" stroke="#ff1010" stroke-width="1.1"/><line x1="448.0" y1="236.5" x2="457.6" y2="236.5" stroke="#ff1010" stroke-width="1.0"/><line x1="448.0" y1="236.5" x2="451.0" y2="263.9" stroke="#ff1010" stroke-width="1.0"/><line x1="446.8" y1="239.0" x2="441.8" y2="250.0" stroke="#5a0000" stroke-width="1.4"/><line x1="446.8" y1="234.0" x2="441.8" y2="223.0" stroke="#5a0000" stroke-width="1.4"/><line x1="448.0" y1="236.5" x2="451.0" y2="209.1" stroke="#ff1010" stroke-width="1.0"/></g>
<g><polygon points="467.1,305.0 460.7,311.9 460.5,332.4 456.3,316.1 449.7,321.9 453.6,305.0 449.7,288.1 456.3,293.9 460.5,277.6 460.7,298.1" fill="#600000"/><polygon points="466.5,305.0 460.1,311.9 459.9,332.4 455.7,316.1 449.1,321.9 453.0,305.0 449.1,288.1 455.7,293.9 459.9,277.6 460.1,298.1" fill="#600000"/><polygon points="465.9,305.0 459.5,311.9 459.3,332.4 455.1,316.1 448.5,321.9 452.4,305.0 448.5,288.1 455.1,293.9 459.3,277.6 459.5,298.1" fill="#600000"/><polygon points="465.3,305.0 458.9,311.9 458.7,332.4 454.5,316.1 447.9,321.9 451.8,305.0 447.9,288.1 454.5,293.9 458.7,277.6 458.9,298.1" fill="#600000"/><polygon points="464.7,305.0 458.3,311.9 458.1,332.4 453.9,316.1 447.3,321.9 451.2,305.0 447.3,288.1 453.9,293.9 458.1,277.6 458.3,298.1" fill="#600000"/><polygon points="464.1,305.0 457.7,311.9 457.5,332.4 453.3,316.1 446.7,321.9 450.6,305.0 446.7,288.1 453.3,293.9 457.5,277.6 457.7,298.1" fill="#600000"/><polygon points="463.5,305.0 457.1,311.9 456.9,332.4 452.7,316.1 446.1,321.9 450.0,305.0 446.1,288.1 452.7,293.9 456.9,277.6 457.1,298.1" fill="#600000"/><polygon points="462.9,305.0 456.5,311.9 456.3,332.4 452.1,316.1 445.5,321.9 449.4,305.0 445.5,288.1 452.1,293.9 456.3,277.6 456.5,298.1" fill="#600000"/><polygon points="462.3,305.0 455.9,311.9 455.7,332.4 451.5,316.1 444.9,321.9 448.8,305.0 444.9,288.1 451.5,293.9 455.7,277.6 455.9,298.1" fill="#600000"/><polygon points="461.7,305.0 455.3,311.9 455.1,332.4 450.9,316.1 444.3,321.9 448.2,305.0 444.3,288.1 450.9,293.9 455.1,277.6 455.3,298.1" fill="#600000"/><polygon points="461.1,305.0 454.7,311.9 454.5,332.4 450.3,316.1 443.7,321.9 447.6,305.0 443.7,288.1 450.3,293.9 454.5,277.6 454.7,298.1" fill="#600000"/><polygon points="460.5,305.0 454.1,311.9 453.9,332.4 449.7,316.1 443.1,321.9 447.0,305.0 443.1,288.1 449.7,293.9 453.9,277.6 454.1,298.1" fill="#600000"/><polygon points="459.9,305.0 453.5,311.9 453.3,332.4 449.1,316.1 442.5,321.9 446.4,305.0 442.5,288.1 449.1,293.9 453.3,277.6 453.5,298.1" fill="#600000"/><polygon points="459.3,305.0 452.9,311.9 452.7,332.4 448.5,316.1 441.9,321.9 445.8,305.0 441.9,288.1 448.5,293.9 452.7,277.6 452.9,298.1" fill="#600000"/><polygon points="458.7,305.0 452.3,311.9 452.1,332.4 447.9,316.1 441.3,321.9 445.2,305.0 441.3,288.1 447.9,293.9 452.1,277.6 452.3,298.1" fill="#600000"/><polygon points="458.1,305.0 451.7,311.9 451.5,332.4 447.3,316.1 440.7,321.9 444.6,305.0 440.7,288.1 447.3,293.9 451.5,277.6 451.7,298.1" fill="#ff1010"/><polygon points="449.7,305.0 452.8,302.9 458.1,305.0" fill="url(#cyl)"/><line x1="451.7" y1="298.1" x2="458.1" y2="305.0" stroke="#ff1010" stroke-width="1.1"/><polygon points="448.9,308.3 450.5,316.6 451.5,332.4" fill="url(#cyl)"/><line x1="451.7" y1="311.9" x2="451.5" y2="332.4" stroke="#ff1010" stroke-width="1.1"/><polygon points="447.6,307.0 445.4,314.3 440.7,321.9" fill="url(#cyl)"/><line x1="447.3" y1="316.1" x2="440.7" y2="321.9" stroke="#ff1010" stroke-width="1.1"/><polygon points="447.6,303.0 444.6,299.1 440.7,288.1" fill="url(#cyl)"/><line x1="444.6" y1="305.0" x2="440.7" y2="288.1" stroke="#ff1010" stroke-width="1.1"/><polygon points="448.9,301.7 449.2,292.1 451.5,277.6" fill="url(#cyl)"/><line x1="447.3" y1="293.9" x2="451.5" y2="277.6" stroke="#ff1010" stroke-width="1.1"/><line x1="448.5" y1="305.0" x2="458.1" y2="305.0" stroke="#ff1010" stroke-width="1.0"/><line x1="448.5" y1="305.0" x2="451.5" y2="332.4" stroke="#ff1010" stroke-width="1.0"/><line x1="447.3" y1="307.5" x2="442.3" y2="318.5" stroke="#5a0000" stroke-width="1.4"/><line x1="447.3" y1="302.5" x2="442.3" y2="291.5" stroke="#5a0000" stroke-width="1.4"/><line x1="448.5" y1="305.0" x2="451.5" y2="277.6" stroke="#ff1010" stroke-width="1.0"/></g>
<g><polygon points="468.6,370.3 462.2,377.2 462.0,397.7 457.8,381.4 451.2,387.2 455.1,370.3 451.2,353.4 457.8,359.2 462.0,342.9 462.2,363.4" fill="#600000"/><polygon points="468.0,370.3 461.6,377.2 461.4,397.7 457.2,381.4 450.6,387.2 454.5,370.3 450.6,353.4 457.2,359.2 461.4,342.9 461.6,363.4" fill="#600000"/><polygon points="467.4,370.3 461.0,377.2 460.8,397.7 456.6,381.4 450.0,387.2 453.9,370.3 450.0,353.4 456.6,359.2 460.8,342.9 461.0,363.4" fill="#600000"/><polygon points="466.8,370.3 460.4,377.2 460.2,397.7 456.0,381.4 449.4,387.2 453.3,370.3 449.4,353.4 456.0,359.2 460.2,342.9 460.4,363.4" fill="#600000"/><polygon points="466.2,370.3 459.8,377.2 459.6,397.7 455.4,381.4 448.8,387.2 452.7,370.3 448.8,353.4 455.4,359.2 459.6,342.9 459.8,363.4" fill="#600000"/><polygon points="465.6,370.3 459.2,377.2 459.0,397.7 454.8,381.4 448.2,387.2 452.1,370.3 448.2,353.4 454.8,359.2 459.0,342.9 459.2,363.4" fill="#600000"/><polygon points="465.0,370.3 458.6,377.2 458.4,397.7 454.2,381.4 447.6,387.2 451.5,370.3 447.6,353.4 454.2,359.2 458.4,342.9 458.6,363.4" fill="#600000"/><polygon points="464.4,370.3 458.0,377.2 457.8,397.7 453.6,381.4 447.0,387.2 450.9,370.3 447.0,353.4 453.6,359.2 457.8,342.9 458.0,363.4" fill="#600000"/><polygon points="463.8,370.3 457.4,377.2 457.2,397.7 453.0,381.4 446.4,387.2 450.3,370.3 446.4,353.4 453.0,359.2 457.2,342.9 457.4,363.4" fill="#600000"/><polygon points="463.2,370.3 456.8,377.2 456.6,397.7 452.4,381.4 445.8,387.2 449.7,370.3 445.8,353.4 452.4,359.2 456.6,342.9 456.8,363.4" fill="#600000"/><polygon points="462.6,370.3 456.2,377.2 456.0,397.7 451.8,381.4 445.2,387.2 449.1,370.3 445.2,353.4 451.8,359.2 456.0,342.9 456.2,363.4" fill="#600000"/><polygon points="462.0,370.3 455.6,377.2 455.4,397.7 451.2,381.4 444.6,387.2 448.5,370.3 444.6,353.4 451.2,359.2 455.4,342.9 455.6,363.4" fill="#600000"/><polygon points="461.4,370.3 455.0,377.2 454.8,397.7 450.6,381.4 444.0,387.2 447.9,370.3 444.0,353.4 450.6,359.2 454.8,342.9 455.0,363.4" fill="#600000"/><polygon points="460.8,370.3 454.4,377.2 454.2,397.7 450.0,381.4 443.4,387.2 447.3,370.3 443.4,353.4 450.0,359.2 454.2,342.9 454.4,363.4" fill="#600000"/><polygon points="460.2,370.3 453.8,377.2 453.6,397.7 449.4,381.4 442.8,387.2 446.7,370.3 442.8,353.4 449.4,359.2 453.6,342.9 453.8,363.4" fill="#600000"/><polygon points="459.6,370.3 453.2,377.2 453.0,397.7 448.8,381.4 442.2,387.2 446.1,370.3 442.2,353.4 448.8,359.2 453.0,342.9 453.2,363.4" fill="#ff1010"/><polygon points="451.2,370.3 454.3,368.2 459.6,370.3" fill="url(#cyl)"/><line x1="453.2" y1="363.4" x2="459.6" y2="370.3" stroke="#ff1010" stroke-width="1.1"/><polygon points="450.4,373.6 452.0,381.9 453.0,397.7" fill="url(#cyl)"/><line x1="453.2" y1="377.2" x2="453.0" y2="397.7" stroke="#ff1010" stroke-width="1.1"/><polygon points="449.1,372.3 446.9,379.6 442.2,387.2" fill="url(#cyl)"/><line x1="448.8" y1="381.4" x2="442.2" y2="387.2" stroke="#ff1010" stroke-width="1.1"/><polygon points="449.1,368.3 446.1,364.4 442.2,353.4" fill="url(#cyl)"/><line x1="446.1" y1="370.3" x2="442.2" y2="353.4" stroke="#ff1010" stroke-width="1.1"/><polygon points="450.4,367.0 450.7,357.4 453.0,342.9" fill="url(#cyl)"/><line x1="448.8" y1="359.2" x2="453.0" y2="342.9" stroke="#ff1010" stroke-width="1.1"/><line x1="450.0" y1="370.3" x2="459.6" y2="370.3" stroke="#ff1010" stroke-width="1.0"/><line x1="450.0" y1="370.3" x2="453.0" y2="397.7" stroke="#ff1010" stroke-width="1.0"/><line x1="448.8" y1="372.8" x2="443.8" y2="383.8" stroke="#5a0000" stroke-width="1.4"/><line x1="448.8" y1="367.8" x2="443.8" y2="356.8" stroke="#5a0000" stroke-width="1.4"/><line x1="450.0" y1="370.3" x2="453.0" y2="342.9" stroke="#ff1010" stroke-width="1.0"/></g>
<g><polygon points="470.1,435.7 463.7,442.6 463.5,463.1 459.3,446.8 452.7,452.6 456.6,435.7 452.7,418.8 459.3,424.6 463.5,408.3 463.7,428.8" fill="#600000"/><polygon points="469.5,435.7 463.1,442.6 462.9,463.1 458.7,446.8 452.1,452.6 456.0,435.7 452.1,418.8 458.7,424.6 462.9,408.3 463.1,428.8" fill="#600000"/><polygon points="468.9,435.7 462.5,442.6 462.3,463.1 458.1,446.8 451.5,452.6 455.4,435.7 451.5,418.8 458.1,424.6 462.3,408.3 462.5,428.8" fill="#600000"/><polygon points="468.3,435.7 461.9,442.6 461.7,463.1 457.5,446.8 450.9,452.6 454.8,435.7 450.9,418.8 457.5,424.6 461.7,408.3 461.9,428.8" fill="#600000"/><polygon points="467.7,435.7 461.3,442.6 461.1,463.1 456.9,446.8 450.3,452.6 454.2,435.7 450.3,418.8 456.9,424.6 461.1,408.3 461.3,428.8" fill="#600000"/><polygon points="467.1,435.7 460.7,442.6 460.5,463.1 456.3,446.8 449.7,452.6 453.6,435.7 449.7,418.8 456.3,424.6 460.5,408.3 460.7,428.8" fill="#600000"/><polygon points="466.5,435.7 460.1,442.6 459.9,463.1 455.7,446.8 449.1,452.6 453.0,435.7 449.1,418.8 455.7,424.6 459.9,408.3 460.1,428.8" fill="#600000"/><polygon points="465.9,435.7 459.5,442.6 459.3,463.1 455.1,446.8 448.5,452.6 452.4,435.7 448.5,418.8 455.1,424.6 459.3,408.3 459.5,428.8" fill="#600000"/><polygon points="465.3,435.7 458.9,442.6 458.7,463.1 454.5,446.8 447.9,452.6 451.8,435.7 447.9,418.8 454.5,424.6 458.7,408.3 458.9,428.8" fill="#600000"/><polygon points="464.7,435.7 458.3,442.6 458.1,463.1 453.9,446.8 447.3,452.6 451.2,435.7 447.3,418.8 453.9,424.6 458.1,408.3 458.3,428.8" fill="#600000"/><polygon points="464.1,435.7 457.7,442.6 457.5,463.1 453.3,446.8 446.7,452.6 450.6,435.7 446.7,418.8 453.3,424.6 457.5,408.3 457.7,428.8" fill="#600000"/><polygon points="463.5,435.7 457.1,442.6 456.9,463.1 452.7,446.8 446.1,452.6 450.0,435.7 446.1,418.8 452.7,424.6 456.9,408.3 457.1,428.8" fill="#600000"/><polygon points="462.9,435.7 456.5,442.6 456.3,463.1 452.1,446.8 445.5,452.6 449.4,435.7 445.5,418.8 452.1,424.6 456.3,408.3 456.5,428.8" fill="#600000"/><polygon points="462.3,435.7 455.9,442.6 455.7,463.1 451.5,446.8 444.9,452.6 448.8,435.7 444.9,418.8 451.5,424.6 455.7,408.3 455.9,428.8" fill="#600000"/><polygon points="461.7,435.7 455.3,442.6 455.1,463.1 450.9,446.8 444.3,452.6 448.2,435.7 444.3,418.8 450.9,424.6 455.1,408.3 455.3,428.8" fill="#600000"/><polygon points="461.1,435.7 454.7,442.6 454.5,463.1 450.3,446.8 443.7,452.6 447.6,435.7 443.7,418.8 450.3,424.6 454.5,408.3 454.7,428.8" fill="#ff1010"/><polygon points="452.7,435.7 455.8,433.6 461.1,435.7" fill="url(#cyl)"/><line x1="454.7" y1="428.8" x2="461.1" y2="435.7" stroke="#ff1010" stroke-width="1.1"/><polygon points="451.9,439.0 453.5,447.3 454.5,463.1" fill="url(#cyl)"/><line x1="454.7" y1="442.6" x2="454.5" y2="463.1" stroke="#ff1010" stroke-width="1.1"/><polygon points="450.6,437.7 448.4,445.0 443.7,452.6" fill="url(#cyl)"/><line x1="450.3" y1="446.8" x2="443.7" y2="452.6" stroke="#ff1010" stroke-width="1.1"/><polygon points="450.6,433.7 447.6,429.8 443.7,418.8" fill="url(#cyl)"/><line x1="447.6" y1="435.7" x2="443.7" y2="418.8" stroke="#ff1010" stroke-width="1.1"/><polygon points="451.9,432.4 452.2,422.8 454.5,408.3" fill="url(#cyl)"/><line x1="450.3" y1="424.6" x2="454.5" y2="408.3" stroke="#ff1010" stroke-width="1.1"/><line x1="451.5" y1="435.7" x2="461.1" y2="435.7" stroke="#ff1010" stroke-width="1.0"/><line x1="451.5" y1="435.7" x2="454.5" y2="463.1" stroke="#ff1010" stroke-width="1.0"/><line x1="450.3" y1="438.2" x2="445.3" y2="449.2" stroke="#5a0000" stroke-width="1.4"/><line x1="450.3" y1="433.2" x2="445.3" y2="422.2" stroke="#5a0000" stroke-width="1.4"/><line x1="451.5" y1="435.7" x2="454.5" y2="408.3" stroke="#ff1010" stroke-width="1.0"/></g>
<g><polygon points="841.0,166.4 836.3,173.3 836.2,193.8 833.1,177.5 828.3,183.3 831.1,166.4 828.3,149.5 833.1,155.3 836.2,139.0 836.3,159.5" fill="#ff0000"/><polygon points="841.6,166.4 836.9,173.3 836.8,193.8 833.7,177.5 828.9,183.3 831.7,166.4 828.9,149.5 833.7,155.3 836.8,139.0 836.9,159.5" fill="#ff0000"/><polygon points="842.2,166.4 837.5,173.3 837.4,193.8 834.3,177.5 829.5,183.3 832.3,166.4 829.5,149.5 834.3,155.3 837.4,139.0 837.5,159.5" fill="#ff0000"/><polygon points="842.8,166.4 838.1,173.3 838.0,193.8 834.9,177.5 830.1,183.3 832.9,166.4 830.1,149.5 834.9,155.3 838.0,139.0 838.1,159.5" fill="#ff0000"/><polygon points="843.4,166.4 838.7,173.3 838.6,193.8 835.5,177.5 830.7,183.3 833.5,166.4 830.7,149.5 835.5,155.3 838.6,139.0 838.7,159.5" fill="#ff0000"/><polygon points="844.0,166.4 839.3,173.3 839.2,193.8 836.1,177.5 831.3,183.3 834.1,166.4 831.3,149.5 836.1,155.3 839.2,139.0 839.3,159.5" fill="#ff0000"/><polygon points="844.6,166.4 839.9,173.3 839.8,193.8 836.7,177.5 831.9,183.3 834.7,166.4 831.9,149.5 836.7,155.3 839.8,139.0 839.9,159.5" fill="#ff0000"/><polygon points="845.2,166.4 840.5,173.3 840.4,193.8 837.3,177.5 832.5,183.3 835.3,166.4 832.5,149.5 837.3,155.3 840.4,139.0 840.5,159.5" fill="#ff0000"/><polygon points="845.8,166.4 841.1,173.3 841.0,193.8 837.9,177.5 833.1,183.3 835.9,166.4 833.1,149.5 837.9,155.3 841.0,139.0 841.1,159.5" fill="#ff0000"/><polygon points="846.4,166.4 841.7,173.3 841.6,193.8 838.5,177.5 833.7,183.3 836.5,166.4 833.7,149.5 838.5,155.3 841.6,139.0 841.7,159.5" fill="#ff0000"/><polygon points="847.0,166.4 842.3,173.3 842.2,193.8 839.1,177.5 834.3,183.3 837.1,166.4 834.3,149.5 839.1,155.3 842.2,139.0 842.3,159.5" fill="#ff0000"/><polygon points="847.6,166.4 842.9,173.3 842.8,193.8 839.7,177.5 834.9,183.3 837.7,166.4 834.9,149.5 839.7,155.3 842.8,139.0 842.9,159.5" fill="#ff0000"/><polygon points="848.2,166.4 843.5,173.3 843.4,193.8 840.3,177.5 835.5,183.3 838.3,166.4 835.5,149.5 840.3,155.3 843.4,139.0 843.5,159.5" fill="#ff0000"/><polygon points="848.8,166.4 844.1,173.3 844.0,193.8 840.9,177.5 836.1,183.3 838.9,166.4 836.1,149.5 840.9,155.3 844.0,139.0 844.1,159.5" fill="#ff0000"/><polygon points="849.4,166.4 844.7,173.3 844.6,193.8 841.5,177.5 836.7,183.3 839.5,166.4 836.7,149.5 841.5,155.3 844.6,139.0 844.7,159.5" fill="#ff0000"/><polygon points="850.0,166.4 845.3,173.3 845.2,193.8 842.1,177.5 837.3,183.3 840.1,166.4 837.3,149.5 842.1,155.3 845.2,139.0 845.3,159.5" fill="#5a0000"/><polygon points="843.8,166.4 846.2,164.3 850.0,166.4" fill="url(#cyl)"/><polygon points="843.8,166.4 846.2,164.3 850.0,166.4" fill="#3a0000" fill-opacity="0.90"/><line x1="845.3" y1="159.5" x2="850.0" y2="166.4" stroke="#900000" stroke-width="1.1"/><polygon points="843.3,169.7 844.5,178.0 845.2,193.8" fill="url(#cyl)"/><polygon points="843.3,169.7 844.5,178.0 845.2,193.8" fill="#3a0000" fill-opacity="0.90"/><line x1="845.3" y1="173.3" x2="845.2" y2="193.8" stroke="#900000" stroke-width="1.1"/><polygon points="842.3,168.4 840.7,175.7 837.3,183.3" fill="url(#cyl)"/><polygon points="842.3,168.4 840.7,175.7 837.3,183.3" fill="#3a0000" fill-opacity="0.90"/><line x1="842.1" y1="177.5" x2="837.3" y2="183.3" stroke="#900000" stroke-width="1.1"/><polygon points="842.3,164.4 840.1,160.5 837.3,149.5" fill="url(#cyl)"/><polygon points="842.3,164.4 840.1,160.5 837.3,149.5" fill="#3a0000" fill-opacity="0.90"/><line x1="840.1" y1="166.4" x2="837.3" y2="149.5" stroke="#900000" stroke-width="1.1"/><polygon points="843.3,163.1 843.5,153.5 845.2,139.0" fill="url(#cyl)"/><polygon points="843.3,163.1 843.5,153.5 845.2,139.0" fill="#3a0000" fill-opacity="0.90"/><line x1="842.1" y1="155.3" x2="845.2" y2="139.0" stroke="#900000" stroke-width="1.1"/><line x1="843.0" y1="166.4" x2="850.0" y2="166.4" stroke="#900000" stroke-width="1.0"/><line x1="843.0" y1="166.4" x2="845.2" y2="193.8" stroke="#900000" stroke-width="1.0"/><line x1="843.0" y1="166.4" x2="837.3" y2="183.3" stroke="#900000" stroke-width="1.0"/><line x1="843.0" y1="166.4" x2="837.3" y2="149.5" stroke="#900000" stroke-width="1.0"/><line x1="843.0" y1="166.4" x2="845.2" y2="139.0" stroke="#900000" stroke-width="1.0"/></g>
<g><polygon points="839.0,239.6 834.3,246.5 834.2,267.0 831.1,250.7 826.3,256.5 829.1,239.6 826.3,222.7 831.1,228.5 834.2,212.2 834.3,232.7" fill="#ff0000"/><polygon points="839.6,239.6 834.9,246.5 834.8,267.0 831.7,250.7 826.9,256.5 829.7,239.6 826.9,222.7 831.7,228.5 834.8,212.2 834.9,232.7" fill="#ff0000"/><polygon points="840.2,239.6 835.5,246.5 835.4,267.0 832.3,250.7 827.5,256.5 830.3,239.6 827.5,222.7 832.3,228.5 835.4,212.2 835.5,232.7" fill="#ff0000"/><polygon points="840.8,239.6 836.1,246.5 836.0,267.0 832.9,250.7 828.1,256.5 830.9,239.6 828.1,222.7 832.9,228.5 836.0,212.2 836.1,232.7" fill="#ff0000"/><polygon points="841.4,239.6 836.7,246.5 836.6,267.0 833.5,250.7 828.7,256.5 831.5,239.6 828.7,222.7 833.5,228.5 836.6,212.2 836.7,232.7" fill="#ff0000"/><polygon points="842.0,239.6 837.3,246.5 837.2,267.0 834.1,250.7 829.3,256.5 832.1,239.6 829.3,222.7 834.1,228.5 837.2,212.2 837.3,232.7" fill="#ff0000"/><polygon points="842.6,239.6 837.9,246.5 837.8,267.0 834.7,250.7 829.9,256.5 832.7,239.6 829.9,222.7 834.7,228.5 837.8,212.2 837.9,232.7" fill="#ff0000"/><polygon points="843.2,239.6 838.5,246.5 838.4,267.0 835.3,250.7 830.5,256.5 833.3,239.6 830.5,222.7 835.3,228.5 838.4,212.2 838.5,232.7" fill="#ff0000"/><polygon points="843.8,239.6 839.1,246.5 839.0,267.0 835.9,250.7 831.1,256.5 833.9,239.6 831.1,222.7 835.9,228.5 839.0,212.2 839.1,232.7" fill="#ff0000"/><polygon points="844.4,239.6 839.7,246.5 839.6,267.0 836.5,250.7 831.7,256.5 834.5,239.6 831.7,222.7 836.5,228.5 839.6,212.2 839.7,232.7" fill="#ff0000"/><polygon points="845.0,239.6 840.3,246.5 840.2,267.0 837.1,250.7 832.3,256.5 835.1,239.6 832.3,222.7 837.1,228.5 840.2,212.2 840.3,232.7" fill="#ff0000"/><polygon points="845.6,239.6 840.9,246.5 840.8,267.0 837.7,250.7 832.9,256.5 835.7,239.6 832.9,222.7 837.7,228.5 840.8,212.2 840.9,232.7" fill="#ff0000"/><polygon points="846.2,239.6 841.5,246.5 841.4,267.0 838.3,250.7 833.5,256.5 836.3,239.6 833.5,222.7 838.3,228.5 841.4,212.2 841.5,232.7" fill="#ff0000"/><polygon points="846.8,239.6 842.1,246.5 842.0,267.0 838.9,250.7 834.1,256.5 836.9,239.6 834.1,222.7 838.9,228.5 842.0,212.2 842.1,232.7" fill="#ff0000"/><polygon points="847.4,239.6 842.7,246.5 842.6,267.0 839.5,250.7 834.7,256.5 837.5,239.6 834.7,222.7 839.5,228.5 842.6,212.2 842.7,232.7" fill="#ff0000"/><polygon points="848.0,239.6 843.3,246.5 843.2,267.0 840.1,250.7 835.3,256.5 838.1,239.6 835.3,222.7 840.1,228.5 843.2,212.2 843.3,232.7" fill="#5a0000"/><polygon points="841.8,239.6 844.2,237.5 848.0,239.6" fill="url(#cyl)"/><polygon points="841.8,239.6 844.2,237.5 848.0,239.6" fill="#3a0000" fill-opacity="0.90"/><line x1="843.3" y1="232.7" x2="848.0" y2="239.6" stroke="#900000" stroke-width="1.1"/><polygon points="841.3,242.9 842.5,251.2 843.2,267.0" fill="url(#cyl)"/><polygon points="841.3,242.9 842.5,251.2 843.2,267.0" fill="#3a0000" fill-opacity="0.90"/><line x1="843.3" y1="246.5" x2="843.2" y2="267.0" stroke="#900000" stroke-width="1.1"/><polygon points="840.3,241.6 838.7,248.9 835.3,256.5" fill="url(#cyl)"/><polygon points="840.3,241.6 838.7,248.9 835.3,256.5" fill="#3a0000" fill-opacity="0.90"/><line x1="840.1" y1="250.7" x2="835.3" y2="256.5" stroke="#900000" stroke-width="1.1"/><polygon points="840.3,237.6 838.1,233.7 835.3,222.7" fill="url(#cyl)"/><polygon points="840.3,237.6 838.1,233.7 835.3,222.7" fill="#3a0000" fill-opacity="0.90"/><line x1="838.1" y1="239.6" x2="835.3" y2="222.7" stroke="#900000" stroke-width="1.1"/><polygon points="841.3,236.3 841.5,226.7 843.2,212.2" fill="url(#cyl)"/><polygon points="841.3,236.3 841.5,226.7 843.2,212.2" fill="#3a0000" fill-opacity="0.90"/><line x1="840.1" y1="228.5" x2="843.2" y2="212.2" stroke="#900000" stroke-width="1.1"/><line x1="841.0" y1="239.6" x2="848.0" y2="239.6" stroke="#900000" stroke-width="1.0"/><line x1="841.0" y1="239.6" x2="843.2" y2="267.0" stroke="#900000" stroke-width="1.0"/><line x1="841.0" y1="239.6" x2="835.3" y2="256.5" stroke="#900000" stroke-width="1.0"/><line x1="841.0" y1="239.6" x2="835.3" y2="222.7" stroke="#900000" stroke-width="1.0"/><line x1="841.0" y1="239.6" x2="843.2" y2="212.2" stroke="#900000" stroke-width="1.0"/></g>
<g><polygon points="837.0,307.0 832.3,313.9 832.2,334.4 829.1,318.1 824.3,323.9 827.1,307.0 824.3,290.1 829.1,295.9 832.2,279.6 832.3,300.1" fill="#ff0000"/><polygon points="837.6,307.0 832.9,313.9 832.8,334.4 829.7,318.1 824.9,323.9 827.7,307.0 824.9,290.1 829.7,295.9 832.8,279.6 832.9,300.1" fill="#ff0000"/><polygon points="838.2,307.0 833.5,313.9 833.4,334.4 830.3,318.1 825.5,323.9 828.3,307.0 825.5,290.1 830.3,295.9 833.4,279.6 833.5,300.1" fill="#ff0000"/><polygon points="838.8,307.0 834.1,313.9 834.0,334.4 830.9,318.1 826.1,323.9 828.9,307.0 826.1,290.1 830.9,295.9 834.0,279.6 834.1,300.1" fill="#ff0000"/><polygon points="839.4,307.0 834.7,313.9 834.6,334.4 831.5,318.1 826.7,323.9 829.5,307.0 826.7,290.1 831.5,295.9 834.6,279.6 834.7,300.1" fill="#ff0000"/><polygon points="840.0,307.0 835.3,313.9 835.2,334.4 832.1,318.1 827.3,323.9 830.1,307.0 827.3,290.1 832.1,295.9 835.2,279.6 835.3,300.1" fill="#ff0000"/><polygon points="840.6,307.0 835.9,313.9 835.8,334.4 832.7,318.1 827.9,323.9 830.7,307.0 827.9,290.1 832.7,295.9 835.8,279.6 835.9,300.1" fill="#ff0000"/><polygon points="841.2,307.0 836.5,313.9 836.4,334.4 833.3,318.1 828.5,323.9 831.3,307.0 828.5,290.1 833.3,295.9 836.4,279.6 836.5,300.1" fill="#ff0000"/><polygon points="841.8,307.0 837.1,313.9 837.0,334.4 833.9,318.1 829.1,323.9 831.9,307.0 829.1,290.1 833.9,295.9 837.0,279.6 837.1,300.1" fill="#ff0000"/><polygon points="842.4,307.0 837.7,313.9 837.6,334.4 834.5,318.1 829.7,323.9 832.5,307.0 829.7,290.1 834.5,295.9 837.6,279.6 837.7,300.1" fill="#ff0000"/><polygon points="843.0,307.0 838.3,313.9 838.2,334.4 835.1,318.1 830.3,323.9 833.1,307.0 830.3,290.1 835.1,295.9 838.2,279.6 838.3,300.1" fill="#ff0000"/><polygon points="843.6,307.0 838.9,313.9 838.8,334.4 835.7,318.1 830.9,323.9 833.7,307.0 830.9,290.1 835.7,295.9 838.8,279.6 838.9,300.1" fill="#ff0000"/><polygon points="844.2,307.0 839.5,313.9 839.4,334.4 836.3,318.1 831.5,323.9 834.3,307.0 831.5,290.1 836.3,295.9 839.4,279.6 839.5,300.1" fill="#ff0000"/><polygon points="844.8,307.0 840.1,313.9 840.0,334.4 836.9,318.1 832.1,323.9 834.9,307.0 832.1,290.1 836.9,295.9 840.0,279.6 840.1,300.1" fill="#ff0000"/><polygon points="845.4,307.0 840.7,313.9 840.6,334.4 837.5,318.1 832.7,323.9 835.5,307.0 832.7,290.1 837.5,295.9 840.6,279.6 840.7,300.1" fill="#ff0000"/><polygon points="846.0,307.0 841.3,313.9 841.2,334.4 838.1,318.1 833.3,323.9 836.1,307.0 833.3,290.1 838.1,295.9 841.2,279.6 841.3,300.1" fill="#5a0000"/><polygon points="839.8,307.0 842.2,304.9 846.0,307.0" fill="url(#cyl)"/><polygon points="839.8,307.0 842.2,304.9 846.0,307.0" fill="#3a0000" fill-opacity="0.90"/><line x1="841.3" y1="300.1" x2="846.0" y2="307.0" stroke="#900000" stroke-width="1.1"/><polygon points="839.3,310.3 840.5,318.6 841.2,334.4" fill="url(#cyl)"/><polygon points="839.3,310.3 840.5,318.6 841.2,334.4" fill="#3a0000" fill-opacity="0.90"/><line x1="841.3" y1="313.9" x2="841.2" y2="334.4" stroke="#900000" stroke-width="1.1"/><polygon points="838.3,309.0 836.7,316.3 833.3,323.9" fill="url(#cyl)"/><polygon points="838.3,309.0 836.7,316.3 833.3,323.9" fill="#3a0000" fill-opacity="0.90"/><line x1="838.1" y1="318.1" x2="833.3" y2="323.9" stroke="#900000" stroke-width="1.1"/><polygon points="838.3,305.0 836.1,301.1 833.3,290.1" fill="url(#cyl)"/><polygon points="838.3,305.0 836.1,301.1 833.3,290.1" fill="#3a0000" fill-opacity="0.90"/><line x1="836.1" y1="307.0" x2="833.3" y2="290.1" stroke="#900000" stroke-width="1.1"/><polygon points="839.3,303.7 839.5,294.1 841.2,279.6" fill="url(#cyl)"/><polygon points="839.3,303.7 839.5,294.1 841.2,279.6" fill="#3a0000" fill-opacity="0.90"/><line x1="838.1" y1="295.9" x2="841.2" y2="279.6" stroke="#900000" stroke-width="1.1"/><line x1="839.0" y1="307.0" x2="846.0" y2="307.0" stroke="#900000" stroke-width="1.0"/><line x1="839.0" y1="307.0" x2="841.2" y2="334.4" stroke="#900000" stroke-width="1.0"/><line x1="839.0" y1="307.0" x2="833.3" y2="323.9" stroke="#900000" stroke-width="1.0"/><line x1="839.0" y1="307.0" x2="833.3" y2="290.1" stroke="#900000" stroke-width="1.0"/><line x1="839.0" y1="307.0" x2="841.2" y2="279.6" stroke="#900000" stroke-width="1.0"/></g>
<g><polygon points="836.0,370.5 831.3,377.4 831.2,397.9 828.1,381.6 823.3,387.4 826.1,370.5 823.3,353.6 828.1,359.4 831.2,343.1 831.3,363.6" fill="#ff0000"/><polygon points="836.6,370.5 831.9,377.4 831.8,397.9 828.7,381.6 823.9,387.4 826.7,370.5 823.9,353.6 828.7,359.4 831.8,343.1 831.9,363.6" fill="#ff0000"/><polygon points="837.2,370.5 832.5,377.4 832.4,397.9 829.3,381.6 824.5,387.4 827.3,370.5 824.5,353.6 829.3,359.4 832.4,343.1 832.5,363.6" fill="#ff0000"/><polygon points="837.8,370.5 833.1,377.4 833.0,397.9 829.9,381.6 825.1,387.4 827.9,370.5 825.1,353.6 829.9,359.4 833.0,343.1 833.1,363.6" fill="#ff0000"/><polygon points="838.4,370.5 833.7,377.4 833.6,397.9 830.5,381.6 825.7,387.4 828.5,370.5 825.7,353.6 830.5,359.4 833.6,343.1 833.7,363.6" fill="#ff0000"/><polygon points="839.0,370.5 834.3,377.4 834.2,397.9 831.1,381.6 826.3,387.4 829.1,370.5 826.3,353.6 831.1,359.4 834.2,343.1 834.3,363.6" fill="#ff0000"/><polygon points="839.6,370.5 834.9,377.4 834.8,397.9 831.7,381.6 826.9,387.4 829.7,370.5 826.9,353.6 831.7,359.4 834.8,343.1 834.9,363.6" fill="#ff0000"/><polygon points="840.2,370.5 835.5,377.4 835.4,397.9 832.3,381.6 827.5,387.4 830.3,370.5 827.5,353.6 832.3,359.4 835.4,343.1 835.5,363.6" fill="#ff0000"/><polygon points="840.8,370.5 836.1,377.4 836.0,397.9 832.9,381.6 828.1,387.4 830.9,370.5 828.1,353.6 832.9,359.4 836.0,343.1 836.1,363.6" fill="#ff0000"/><polygon points="841.4,370.5 836.7,377.4 836.6,397.9 833.5,381.6 828.7,387.4 831.5,370.5 828.7,353.6 833.5,359.4 836.6,343.1 836.7,363.6" fill="#ff0000"/><polygon points="842.0,370.5 837.3,377.4 837.2,397.9 834.1,381.6 829.3,387.4 832.1,370.5 829.3,353.6 834.1,359.4 837.2,343.1 837.3,363.6" fill="#ff0000"/><polygon points="842.6,370.5 837.9,377.4 837.8,397.9 834.7,381.6 829.9,387.4 832.7,370.5 829.9,353.6 834.7,359.4 837.8,343.1 837.9,363.6" fill="#ff0000"/><polygon points="843.2,370.5 838.5,377.4 838.4,397.9 835.3,381.6 830.5,387.4 833.3,370.5 830.5,353.6 835.3,359.4 838.4,343.1 838.5,363.6" fill="#ff0000"/><polygon points="843.8,370.5 839.1,377.4 839.0,397.9 835.9,381.6 831.1,387.4 833.9,370.5 831.1,353.6 835.9,359.4 839.0,343.1 839.1,363.6" fill="#ff0000"/><polygon points="844.4,370.5 839.7,377.4 839.6,397.9 836.5,381.6 831.7,387.4 834.5,370.5 831.7,353.6 836.5,359.4 839.6,343.1 839.7,363.6" fill="#ff0000"/><polygon points="845.0,370.5 840.3,377.4 840.2,397.9 837.1,381.6 832.3,387.4 835.1,370.5 832.3,353.6 837.1,359.4 840.2,343.1 840.3,363.6" fill="#5a0000"/><polygon points="838.8,370.5 841.2,368.4 845.0,370.5" fill="url(#cyl)"/><polygon points="838.8,370.5 841.2,368.4 845.0,370.5" fill="#3a0000" fill-opacity="0.90"/><line x1="840.3" y1="363.6" x2="845.0" y2="370.5" stroke="#900000" stroke-width="1.1"/><polygon points="838.3,373.8 839.5,382.1 840.2,397.9" fill="url(#cyl)"/><polygon points="838.3,373.8 839.5,382.1 840.2,397.9" fill="#3a0000" fill-opacity="0.90"/><line x1="840.3" y1="377.4" x2="840.2" y2="397.9" stroke="#900000" stroke-width="1.1"/><polygon points="837.3,372.5 835.7,379.8 832.3,387.4" fill="url(#cyl)"/><polygon points="837.3,372.5 835.7,379.8 832.3,387.4" fill="#3a0000" fill-opacity="0.90"/><line x1="837.1" y1="381.6" x2="832.3" y2="387.4" stroke="#900000" stroke-width="1.1"/><polygon points="837.3,368.5 835.1,364.6 832.3,353.6" fill="url(#cyl)"/><polygon points="837.3,368.5 835.1,364.6 832.3,353.6" fill="#3a0000" fill-opacity="0.90"/><line x1="835.1" y1="370.5" x2="832.3" y2="353.6" stroke="#900000" stroke-width="1.1"/><polygon points="838.3,367.2 838.5,357.6 840.2,343.1" fill="url(#cyl)"/><polygon points="838.3,367.2 838.5,357.6 840.2,343.1" fill="#3a0000" fill-opacity="0.90"/><line x1="837.1" y1="359.4" x2="840.2" y2="343.1" stroke="#900000" stroke-width="1.1"/><line x1="838.0" y1="370.5" x2="845.0" y2="370.5" stroke="#900000" stroke-width="1.0"/><line x1="838.0" y1="370.5" x2="840.2" y2="397.9" stroke="#900000" stroke-width="1.0"/><line x1="838.0" y1="370.5" x2="832.3" y2="387.4" stroke="#900000" stroke-width="1.0"/><line x1="838.0" y1="370.5" x2="832.3" y2="353.6" stroke="#900000" stroke-width="1.0"/><line x1="838.0" y1="370.5" x2="840.2" y2="343.1" stroke="#900000" stroke-width="1.0"/></g>
<g><polygon points="834.5,433.0 829.8,439.9 829.7,460.4 826.6,444.1 821.8,449.9 824.6,433.0 821.8,416.1 826.6,421.9 829.7,405.6 829.8,426.1" fill="#ff0000"/><polygon points="835.1,433.0 830.4,439.9 830.3,460.4 827.2,444.1 822.4,449.9 825.2,433.0 822.4,416.1 827.2,421.9 830.3,405.6 830.4,426.1" fill="#ff0000"/><polygon points="835.7,433.0 831.0,439.9 830.9,460.4 827.8,444.1 823.0,449.9 825.8,433.0 823.0,416.1 827.8,421.9 830.9,405.6 831.0,426.1" fill="#ff0000"/><polygon points="836.3,433.0 831.6,439.9 831.5,460.4 828.4,444.1 823.6,449.9 826.4,433.0 823.6,416.1 828.4,421.9 831.5,405.6 831.6,426.1" fill="#ff0000"/><polygon points="836.9,433.0 832.2,439.9 832.1,460.4 829.0,444.1 824.2,449.9 827.0,433.0 824.2,416.1 829.0,421.9 832.1,405.6 832.2,426.1" fill="#ff0000"/><polygon points="837.5,433.0 832.8,439.9 832.7,460.4 829.6,444.1 824.8,449.9 827.6,433.0 824.8,416.1 829.6,421.9 832.7,405.6 832.8,426.1" fill="#ff0000"/><polygon points="838.1,433.0 833.4,439.9 833.3,460.4 830.2,444.1 825.4,449.9 828.2,433.0 825.4,416.1 830.2,421.9 833.3,405.6 833.4,426.1" fill="#ff0000"/><polygon points="838.7,433.0 834.0,439.9 833.9,460.4 830.8,444.1 826.0,449.9 828.8,433.0 826.0,416.1 830.8,421.9 833.9,405.6 834.0,426.1" fill="#ff0000"/><polygon points="839.3,433.0 834.6,439.9 834.5,460.4 831.4,444.1 826.6,449.9 829.4,433.0 826.6,416.1 831.4,421.9 834.5,405.6 834.6,426.1" fill="#ff0000"/><polygon points="839.9,433.0 835.2,439.9 835.1,460.4 832.0,444.1 827.2,449.9 830.0,433.0 827.2,416.1 832.0,421.9 835.1,405.6 835.2,426.1" fill="#ff0000"/><polygon points="840.5,433.0 835.8,439.9 835.7,460.4 832.6,444.1 827.8,449.9 830.6,433.0 827.8,416.1 832.6,421.9 835.7,405.6 835.8,426.1" fill="#ff0000"/><polygon points="841.1,433.0 836.4,439.9 836.3,460.4 833.2,444.1 828.4,449.9 831.2,433.0 828.4,416.1 833.2,421.9 836.3,405.6 836.4,426.1" fill="#ff0000"/><polygon points="841.7,433.0 837.0,439.9 836.9,460.4 833.8,444.1 829.0,449.9 831.8,433.0 829.0,416.1 833.8,421.9 836.9,405.6 837.0,426.1" fill="#ff0000"/><polygon points="842.3,433.0 837.6,439.9 837.5,460.4 834.4,444.1 829.6,449.9 832.4,433.0 829.6,416.1 834.4,421.9 837.5,405.6 837.6,426.1" fill="#ff0000"/><polygon points="842.9,433.0 838.2,439.9 838.1,460.4 835.0,444.1 830.2,449.9 833.0,433.0 830.2,416.1 835.0,421.9 838.1,405.6 838.2,426.1" fill="#ff0000"/><polygon points="843.5,433.0 838.8,439.9 838.7,460.4 835.6,444.1 830.8,449.9 833.6,433.0 830.8,416.1 835.6,421.9 838.7,405.6 838.8,426.1" fill="#5a0000"/><polygon points="837.3,433.0 839.7,430.9 843.5,433.0" fill="url(#cyl)"/><polygon points="837.3,433.0 839.7,430.9 843.5,433.0" fill="#3a0000" fill-opacity="0.90"/><line x1="838.8" y1="426.1" x2="843.5" y2="433.0" stroke="#900000" stroke-width="1.1"/><polygon points="836.8,436.3 838.0,444.6 838.7,460.4" fill="url(#cyl)"/><polygon points="836.8,436.3 838.0,444.6 838.7,460.4" fill="#3a0000" fill-opacity="0.90"/><line x1="838.8" y1="439.9" x2="838.7" y2="460.4" stroke="#900000" stroke-width="1.1"/><polygon points="835.8,435.0 834.2,442.3 830.8,449.9" fill="url(#cyl)"/><polygon points="835.8,435.0 834.2,442.3 830.8,449.9" fill="#3a0000" fill-opacity="0.90"/><line x1="835.6" y1="444.1" x2="830.8" y2="449.9" stroke="#900000" stroke-width="1.1"/><polygon points="835.8,431.0 833.6,427.1 830.8,416.1" fill="url(#cyl)"/><polygon points="835.8,431.0 833.6,427.1 830.8,416.1" fill="#3a0000" fill-opacity="0.90"/><line x1="833.6" y1="433.0" x2="830.8" y2="416.1" stroke="#900000" stroke-width="1.1"/><polygon points="836.8,429.7 837.0,420.1 838.7,405.6" fill="url(#cyl)"/><polygon points="836.8,429.7 837.0,420.1 838.7,405.6" fill="#3a0000" fill-opacity="0.90"/><line x1="835.6" y1="421.9" x2="838.7" y2="405.6" stroke="#900000" stroke-width="1.1"/><line x1="836.5" y1="433.0" x2="843.5" y2="433.0" stroke="#900000" stroke-width="1.0"/><line x1="836.5" y1="433.0" x2="838.7" y2="460.4" stroke="#900000" stroke-width="1.0"/><line x1="836.5" y1="433.0" x2="830.8" y2="449.9" stroke="#900000" stroke-width="1.0"/><line x1="836.5" y1="433.0" x2="830.8" y2="416.1" stroke="#900000" stroke-width="1.0"/><line x1="836.5" y1="433.0" x2="838.7" y2="405.6" stroke="#900000" stroke-width="1.0"/></g>
<g><polygon points="471.6,207.6 465.2,214.5 465.0,235.0 460.8,218.7 454.2,224.5 458.1,207.6 454.2,190.7 460.8,196.5 465.0,180.2 465.2,200.7" fill="#600000"/><polygon points="471.0,207.6 464.6,214.5 464.4,235.0 460.2,218.7 453.6,224.5 457.5,207.6 453.6,190.7 460.2,196.5 464.4,180.2 464.6,200.7" fill="#600000"/><polygon points="470.4,207.6 464.0,214.5 463.8,235.0 459.6,218.7 453.0,224.5 456.9,207.6 453.0,190.7 459.6,196.5 463.8,180.2 464.0,200.7" fill="#600000"/><polygon points="469.8,207.6 463.4,214.5 463.2,235.0 459.0,218.7 452.4,224.5 456.3,207.6 452.4,190.7 459.0,196.5 463.2,180.2 463.4,200.7" fill="#600000"/><polygon points="469.2,207.6 462.8,214.5 462.6,235.0 458.4,218.7 451.8,224.5 455.7,207.6 451.8,190.7 458.4,196.5 462.6,180.2 462.8,200.7" fill="#600000"/><polygon points="468.6,207.6 462.2,214.5 462.0,235.0 457.8,218.7 451.2,224.5 455.1,207.6 451.2,190.7 457.8,196.5 462.0,180.2 462.2,200.7" fill="#600000"/><polygon points="468.0,207.6 461.6,214.5 461.4,235.0 457.2,218.7 450.6,224.5 454.5,207.6 450.6,190.7 457.2,196.5 461.4,180.2 461.6,200.7" fill="#600000"/><polygon points="467.4,207.6 461.0,214.5 460.8,235.0 456.6,218.7 450.0,224.5 453.9,207.6 450.0,190.7 456.6,196.5 460.8,180.2 461.0,200.7" fill="#600000"/><polygon points="466.8,207.6 460.4,214.5 460.2,235.0 456.0,218.7 449.4,224.5 453.3,207.6 449.4,190.7 456.0,196.5 460.2,180.2 460.4,200.7" fill="#600000"/><polygon points="466.2,207.6 459.8,214.5 459.6,235.0 455.4,218.7 448.8,224.5 452.7,207.6 448.8,190.7 455.4,196.5 459.6,180.2 459.8,200.7" fill="#600000"/><polygon points="465.6,207.6 459.2,214.5 459.0,235.0 454.8,218.7 448.2,224.5 452.1,207.6 448.2,190.7 454.8,196.5 459.0,180.2 459.2,200.7" fill="#600000"/><polygon points="465.0,207.6 458.6,214.5 458.4,235.0 454.2,218.7 447.6,224.5 451.5,207.6 447.6,190.7 454.2,196.5 458.4,180.2 458.6,200.7" fill="#600000"/><polygon points="464.4,207.6 458.0,214.5 457.8,235.0 453.6,218.7 447.0,224.5 450.9,207.6 447.0,190.7 453.6,196.5 457.8,180.2 458.0,200.7" fill="#600000"/><polygon points="463.8,207.6 457.4,214.5 457.2,235.0 453.0,218.7 446.4,224.5 450.3,207.6 446.4,190.7 453.0,196.5 457.2,180.2 457.4,200.7" fill="#600000"/><polygon points="463.2,207.6 456.8,214.5 456.6,235.0 452.4,218.7 445.8,224.5 449.7,207.6 445.8,190.7 452.4,196.5 456.6,180.2 456.8,200.7" fill="#600000"/><polygon points="462.6,207.6 456.2,214.5 456.0,235.0 451.8,218.7 445.2,224.5 449.1,207.6 445.2,190.7 451.8,196.5 456.0,180.2 456.2,200.7" fill="#ff1010"/><polygon points="454.2,207.6 457.3,205.5 462.6,207.6" fill="url(#cyl)"/><line x1="456.2" y1="200.7" x2="462.6" y2="207.6" stroke="#ff1010" stroke-width="1.1"/><polygon points="453.4,210.9 455.0,219.2 456.0,235.0" fill="url(#cyl)"/><line x1="456.2" y1="214.5" x2="456.0" y2="235.0" stroke="#ff1010" stroke-width="1.1"/><polygon points="452.1,209.6 449.9,216.9 445.2,224.5" fill="url(#cyl)"/><line x1="451.8" y1="218.7" x2="445.2" y2="224.5" stroke="#ff1010" stroke-width="1.1"/><polygon points="452.1,205.6 449.1,201.7 445.2,190.7" fill="url(#cyl)"/><line x1="449.1" y1="207.6" x2="445.2" y2="190.7" stroke="#ff1010" stroke-width="1.1"/><polygon points="453.4,204.3 453.7,194.7 456.0,180.2" fill="url(#cyl)"/><line x1="451.8" y1="196.5" x2="456.0" y2="180.2" stroke="#ff1010" stroke-width="1.1"/><line x1="453.0" y1="207.6" x2="462.6" y2="207.6" stroke="#ff1010" stroke-width="1.0"/><line x1="453.0" y1="207.6" x2="456.0" y2="235.0" stroke="#ff1010" stroke-width="1.0"/><line x1="451.8" y1="210.1" x2="446.8" y2="221.1" stroke="#5a0000" stroke-width="1.4"/><line x1="451.8" y1="205.1" x2="446.8" y2="194.1" stroke="#5a0000" stroke-width="1.4"/><line x1="453.0" y1="207.6" x2="456.0" y2="180.2" stroke="#ff1010" stroke-width="1.0"/></g>
<g><polygon points="474.1,280.0 467.7,286.9 467.5,307.4 463.3,291.1 456.7,296.9 460.6,280.0 456.7,263.1 463.3,268.9 467.5,252.6 467.7,273.1" fill="#600000"/><polygon points="473.5,280.0 467.1,286.9 466.9,307.4 462.7,291.1 456.1,296.9 460.0,280.0 456.1,263.1 462.7,268.9 466.9,252.6 467.1,273.1" fill="#600000"/><polygon points="472.9,280.0 466.5,286.9 466.3,307.4 462.1,291.1 455.5,296.9 459.4,280.0 455.5,263.1 462.1,268.9 466.3,252.6 466.5,273.1" fill="#600000"/><polygon points="472.3,280.0 465.9,286.9 465.7,307.4 461.5,291.1 454.9,296.9 458.8,280.0 454.9,263.1 461.5,268.9 465.7,252.6 465.9,273.1" fill="#600000"/><polygon points="471.7,280.0 465.3,286.9 465.1,307.4 460.9,291.1 454.3,296.9 458.2,280.0 454.3,263.1 460.9,268.9 465.1,252.6 465.3,273.1" fill="#600000"/><polygon points="471.1,280.0 464.7,286.9 464.5,307.4 460.3,291.1 453.7,296.9 457.6,280.0 453.7,263.1 460.3,268.9 464.5,252.6 464.7,273.1" fill="#600000"/><polygon points="470.5,280.0 464.1,286.9 463.9,307.4 459.7,291.1 453.1,296.9 457.0,280.0 453.1,263.1 459.7,268.9 463.9,252.6 464.1,273.1" fill="#600000"/><polygon points="469.9,280.0 463.5,286.9 463.3,307.4 459.1,291.1 452.5,296.9 456.4,280.0 452.5,263.1 459.1,268.9 463.3,252.6 463.5,273.1" fill="#600000"/><polygon points="469.3,280.0 462.9,286.9 462.7,307.4 458.5,291.1 451.9,296.9 455.8,280.0 451.9,263.1 458.5,268.9 462.7,252.6 462.9,273.1" fill="#600000"/><polygon points="468.7,280.0 462.3,286.9 462.1,307.4 457.9,291.1 451.3,296.9 455.2,280.0 451.3,263.1 457.9,268.9 462.1,252.6 462.3,273.1" fill="#600000"/><polygon points="468.1,280.0 461.7,286.9 461.5,307.4 457.3,291.1 450.7,296.9 454.6,280.0 450.7,263.1 457.3,268.9 461.5,252.6 461.7,273.1" fill="#600000"/><polygon points="467.5,280.0 461.1,286.9 460.9,307.4 456.7,291.1 450.1,296.9 454.0,280.0 450.1,263.1 456.7,268.9 460.9,252.6 461.1,273.1" fill="#600000"/><polygon points="466.9,280.0 460.5,286.9 460.3,307.4 456.1,291.1 449.5,296.9 453.4,280.0 449.5,263.1 456.1,268.9 460.3,252.6 460.5,273.1" fill="#600000"/><polygon points="466.3,280.0 459.9,286.9 459.7,307.4 455.5,291.1 448.9,296.9 452.8,280.0 448.9,263.1 455.5,268.9 459.7,252.6 459.9,273.1" fill="#600000"/><polygon points="465.7,280.0 459.3,286.9 459.1,307.4 454.9,291.1 448.3,296.9 452.2,280.0 448.3,263.1 454.9,268.9 459.1,252.6 459.3,273.1" fill="#600000"/><polygon points="465.1,280.0 458.7,286.9 458.5,307.4 454.3,291.1 447.7,296.9 451.6,280.0 447.7,263.1 454.3,268.9 458.5,252.6 458.7,273.1" fill="#ff1010"/><polygon points="456.7,280.0 459.8,277.9 465.1,280.0" fill="url(#cyl)"/><line x1="458.7" y1="273.1" x2="465.1" y2="280.0" stroke="#ff1010" stroke-width="1.1"/><polygon points="455.9,283.3 457.5,291.6 458.5,307.4" fill="url(#cyl)"/><line x1="458.7" y1="286.9" x2="458.5" y2="307.4" stroke="#ff1010" stroke-width="1.1"/><polygon points="454.6,282.0 452.4,289.3 447.7,296.9" fill="url(#cyl)"/><line x1="454.3" y1="291.1" x2="447.7" y2="296.9" stroke="#ff1010" stroke-width="1.1"/><polygon points="454.6,278.0 451.6,274.1 447.7,263.1" fill="url(#cyl)"/><line x1="451.6" y1="280.0" x2="447.7" y2="263.1" stroke="#ff1010" stroke-width="1.1"/><polygon points="455.9,276.7 456.2,267.1 458.5,252.6" fill="url(#cyl)"/><line x1="454.3" y1="268.9" x2="458.5" y2="252.6" stroke="#ff1010" stroke-width="1.1"/><line x1="455.5" y1="280.0" x2="465.1" y2="280.0" stroke="#ff1010" stroke-width="1.0"/><line x1="455.5" y1="280.0" x2="458.5" y2="307.4" stroke="#ff1010" stroke-width="1.0"/><line x1="454.3" y1="282.5" x2="449.3" y2="293.5" stroke="#5a0000" stroke-width="1.4"/><line x1="454.3" y1="277.5" x2="449.3" y2="266.5" stroke="#5a0000" stroke-width="1.4"/><line x1="455.5" y1="280.0" x2="458.5" y2="252.6" stroke="#ff1010" stroke-width="1.0"/></g>
<g><polygon points="476.1,348.4 469.7,355.3 469.5,375.8 465.3,359.5 458.7,365.3 462.6,348.4 458.7,331.5 465.3,337.3 469.5,321.0 469.7,341.5" fill="#600000"/><polygon points="475.5,348.4 469.1,355.3 468.9,375.8 464.7,359.5 458.1,365.3 462.0,348.4 458.1,331.5 464.7,337.3 468.9,321.0 469.1,341.5" fill="#600000"/><polygon points="474.9,348.4 468.5,355.3 468.3,375.8 464.1,359.5 457.5,365.3 461.4,348.4 457.5,331.5 464.1,337.3 468.3,321.0 468.5,341.5" fill="#600000"/><polygon points="474.3,348.4 467.9,355.3 467.7,375.8 463.5,359.5 456.9,365.3 460.8,348.4 456.9,331.5 463.5,337.3 467.7,321.0 467.9,341.5" fill="#600000"/><polygon points="473.7,348.4 467.3,355.3 467.1,375.8 462.9,359.5 456.3,365.3 460.2,348.4 456.3,331.5 462.9,337.3 467.1,321.0 467.3,341.5" fill="#600000"/><polygon points="473.1,348.4 466.7,355.3 466.5,375.8 462.3,359.5 455.7,365.3 459.6,348.4 455.7,331.5 462.3,337.3 466.5,321.0 466.7,341.5" fill="#600000"/><polygon points="472.5,348.4 466.1,355.3 465.9,375.8 461.7,359.5 455.1,365.3 459.0,348.4 455.1,331.5 461.7,337.3 465.9,321.0 466.1,341.5" fill="#600000"/><polygon points="471.9,348.4 465.5,355.3 465.3,375.8 461.1,359.5 454.5,365.3 458.4,348.4 454.5,331.5 461.1,337.3 465.3,321.0 465.5,341.5" fill="#600000"/><polygon points="471.3,348.4 464.9,355.3 464.7,375.8 460.5,359.5 453.9,365.3 457.8,348.4 453.9,331.5 460.5,337.3 464.7,321.0 464.9,341.5" fill="#600000"/><polygon points="470.7,348.4 464.3,355.3 464.1,375.8 459.9,359.5 453.3,365.3 457.2,348.4 453.3,331.5 459.9,337.3 464.1,321.0 464.3,341.5" fill="#600000"/><polygon points="470.1,348.4 463.7,355.3 463.5,375.8 459.3,359.5 452.7,365.3 456.6,348.4 452.7,331.5 459.3,337.3 463.5,321.0 463.7,341.5" fill="#600000"/><polygon points="469.5,348.4 463.1,355.3 462.9,375.8 458.7,359.5 452.1,365.3 456.0,348.4 452.1,331.5 458.7,337.3 462.9,321.0 463.1,341.5" fill="#600000"/><polygon points="468.9,348.4 462.5,355.3 462.3,375.8 458.1,359.5 451.5,365.3 455.4,348.4 451.5,331.5 458.1,337.3 462.3,321.0 462.5,341.5" fill="#600000"/><polygon points="468.3,348.4 461.9,355.3 461.7,375.8 457.5,359.5 450.9,365.3 454.8,348.4 450.9,331.5 457.5,337.3 461.7,321.0 461.9,341.5" fill="#600000"/><polygon points="467.7,348.4 461.3,355.3 461.1,375.8 456.9,359.5 450.3,365.3 454.2,348.4 450.3,331.5 456.9,337.3 461.1,321.0 461.3,341.5" fill="#600000"/><polygon points="467.1,348.4 460.7,355.3 460.5,375.8 456.3,359.5 449.7,365.3 453.6,348.4 449.7,331.5 456.3,337.3 460.5,321.0 460.7,341.5" fill="#ff1010"/><polygon points="458.7,348.4 461.8,346.3 467.1,348.4" fill="url(#cyl)"/><line x1="460.7" y1="341.5" x2="467.1" y2="348.4" stroke="#ff1010" stroke-width="1.1"/><polygon points="457.9,351.7 459.5,360.0 460.5,375.8" fill="url(#cyl)"/><line x1="460.7" y1="355.3" x2="460.5" y2="375.8" stroke="#ff1010" stroke-width="1.1"/><polygon points="456.6,350.4 454.4,357.7 449.7,365.3" fill="url(#cyl)"/><line x1="456.3" y1="359.5" x2="449.7" y2="365.3" stroke="#ff1010" stroke-width="1.1"/><polygon points="456.6,346.4 453.6,342.5 449.7,331.5" fill="url(#cyl)"/><line x1="453.6" y1="348.4" x2="449.7" y2="331.5" stroke="#ff1010" stroke-width="1.1"/><polygon points="457.9,345.1 458.2,335.5 460.5,321.0" fill="url(#cyl)"/><line x1="456.3" y1="337.3" x2="460.5" y2="321.0" stroke="#ff1010" stroke-width="1.1"/><line x1="457.5" y1="348.4" x2="467.1" y2="348.4" stroke="#ff1010" stroke-width="1.0"/><line x1="457.5" y1="348.4" x2="460.5" y2="375.8" stroke="#ff1010" stroke-width="1.0"/><line x1="456.3" y1="350.9" x2="451.3" y2="361.9" stroke="#5a0000" stroke-width="1.4"/><line x1="456.3" y1="345.9" x2="451.3" y2="334.9" stroke="#5a0000" stroke-width="1.4"/><line x1="457.5" y1="348.4" x2="460.5" y2="321.0" stroke="#ff1010" stroke-width="1.0"/></g>
<g><polygon points="479.1,419.8 472.7,426.7 472.5,447.2 468.3,430.9 461.7,436.7 465.6,419.8 461.7,402.9 468.3,408.7 472.5,392.4 472.7,412.9" fill="#600000"/><polygon points="478.5,419.8 472.1,426.7 471.9,447.2 467.7,430.9 461.1,436.7 465.0,419.8 461.1,402.9 467.7,408.7 471.9,392.4 472.1,412.9" fill="#600000"/><polygon points="477.9,419.8 471.5,426.7 471.3,447.2 467.1,430.9 460.5,436.7 464.4,419.8 460.5,402.9 467.1,408.7 471.3,392.4 471.5,412.9" fill="#600000"/><polygon points="477.3,419.8 470.9,426.7 470.7,447.2 466.5,430.9 459.9,436.7 463.8,419.8 459.9,402.9 466.5,408.7 470.7,392.4 470.9,412.9" fill="#600000"/><polygon points="476.7,419.8 470.3,426.7 470.1,447.2 465.9,430.9 459.3,436.7 463.2,419.8 459.3,402.9 465.9,408.7 470.1,392.4 470.3,412.9" fill="#600000"/><polygon points="476.1,419.8 469.7,426.7 469.5,447.2 465.3,430.9 458.7,436.7 462.6,419.8 458.7,402.9 465.3,408.7 469.5,392.4 469.7,412.9" fill="#600000"/><polygon points="475.5,419.8 469.1,426.7 468.9,447.2 464.7,430.9 458.1,436.7 462.0,419.8 458.1,402.9 464.7,408.7 468.9,392.4 469.1,412.9" fill="#600000"/><polygon points="474.9,419.8 468.5,426.7 468.3,447.2 464.1,430.9 457.5,436.7 461.4,419.8 457.5,402.9 464.1,408.7 468.3,392.4 468.5,412.9" fill="#600000"/><polygon points="474.3,419.8 467.9,426.7 467.7,447.2 463.5,430.9 456.9,436.7 460.8,419.8 456.9,402.9 463.5,408.7 467.7,392.4 467.9,412.9" fill="#600000"/><polygon points="473.7,419.8 467.3,426.7 467.1,447.2 462.9,430.9 456.3,436.7 460.2,419.8 456.3,402.9 462.9,408.7 467.1,392.4 467.3,412.9" fill="#600000"/><polygon points="473.1,419.8 466.7,426.7 466.5,447.2 462.3,430.9 455.7,436.7 459.6,419.8 455.7,402.9 462.3,408.7 466.5,392.4 466.7,412.9" fill="#600000"/><polygon points="472.5,419.8 466.1,426.7 465.9,447.2 461.7,430.9 455.1,436.7 459.0,419.8 455.1,402.9 461.7,408.7 465.9,392.4 466.1,412.9" fill="#600000"/><polygon points="471.9,419.8 465.5,426.7 465.3,447.2 461.1,430.9 454.5,436.7 458.4,419.8 454.5,402.9 461.1,408.7 465.3,392.4 465.5,412.9" fill="#600000"/><polygon points="471.3,419.8 464.9,426.7 464.7,447.2 460.5,430.9 453.9,436.7 457.8,419.8 453.9,402.9 460.5,408.7 464.7,392.4 464.9,412.9" fill="#600000"/><polygon points="470.7,419.8 464.3,426.7 464.1,447.2 459.9,430.9 453.3,436.7 457.2,419.8 453.3,402.9 459.9,408.7 464.1,392.4 464.3,412.9" fill="#600000"/><polygon points="470.1,419.8 463.7,426.7 463.5,447.2 459.3,430.9 452.7,436.7 456.6,419.8 452.7,402.9 459.3,408.7 463.5,392.4 463.7,412.9" fill="#ff1010"/><polygon points="461.7,419.8 464.8,417.7 470.1,419.8" fill="url(#cyl)"/><line x1="463.7" y1="412.9" x2="470.1" y2="419.8" stroke="#ff1010" stroke-width="1.1"/><polygon points="460.9,423.1 462.5,431.4 463.5,447.2" fill="url(#cyl)"/><line x1="463.7" y1="426.7" x2="463.5" y2="447.2" stroke="#ff1010" stroke-width="1.1"/><polygon points="459.6,421.8 457.4,429.1 452.7,436.7" fill="url(#cyl)"/><line x1="459.3" y1="430.9" x2="452.7" y2="436.7" stroke="#ff1010" stroke-width="1.1"/><polygon points="459.6,417.8 456.6,413.9 452.7,402.9" fill="url(#cyl)"/><line x1="456.6" y1="419.8" x2="452.7" y2="402.9" stroke="#ff1010" stroke-width="1.1"/><polygon points="460.9,416.5 461.2,406.9 463.5,392.4" fill="url(#cyl)"/><line x1="459.3" y1="408.7" x2="463.5" y2="392.4" stroke="#ff1010" stroke-width="1.1"/><line x1="460.5" y1="419.8" x2="470.1" y2="419.8" stroke="#ff1010" stroke-width="1.0"/><line x1="460.5" y1="419.8" x2="463.5" y2="447.2" stroke="#ff1010" stroke-width="1.0"/><line x1="459.3" y1="422.3" x2="454.3" y2="433.3" stroke="#5a0000" stroke-width="1.4"/><line x1="459.3" y1="417.3" x2="454.3" y2="406.3" stroke="#5a0000" stroke-width="1.4"/><line x1="460.5" y1="419.8" x2="463.5" y2="392.4" stroke="#ff1010" stroke-width="1.0"/></g>
<g><polygon points="478.7,147.6 479.1,168.1 488.1,168.1 487.7,147.6" fill="#380000"/><polygon points="479.1,181.9 478.7,202.4 487.7,202.4 488.1,181.9" fill="#380000"/><polygon points="491.5,175.0 479.1,181.9 478.7,202.4 470.7,186.1 458.0,191.9 465.5,175.0 458.0,158.1 470.7,163.9 478.7,147.6 479.1,168.1" fill="#d10000"/><polygon points="475.2,175.0 481.3,172.9 491.5,175.0" fill="url(#cyl)"/><line x1="479.1" y1="168.1" x2="491.5" y2="175.0" stroke="#ff1010" stroke-width="1.1"/><polygon points="473.7,178.3 476.8,186.6 478.7,202.4" fill="url(#cyl)"/><line x1="479.1" y1="181.9" x2="478.7" y2="202.4" stroke="#ff1010" stroke-width="1.1"/><polygon points="471.2,177.0 467.1,184.3 458.0,191.9" fill="url(#cyl)"/><line x1="470.7" y1="186.1" x2="458.0" y2="191.9" stroke="#ff1010" stroke-width="1.1"/><polygon points="471.2,173.0 465.5,169.1 458.0,158.1" fill="url(#cyl)"/><line x1="465.5" y1="175.0" x2="458.0" y2="158.1" stroke="#ff1010" stroke-width="1.1"/><polygon points="473.7,171.7 474.3,162.1 478.7,147.6" fill="url(#cyl)"/><line x1="470.7" y1="163.9" x2="478.7" y2="147.6" stroke="#ff1010" stroke-width="1.1"/><line x1="473.0" y1="175.0" x2="491.5" y2="175.0" stroke="#ff1010" stroke-width="1.0"/><line x1="473.0" y1="175.0" x2="478.7" y2="202.4" stroke="#ff1010" stroke-width="1.0"/><line x1="470.8" y1="177.5" x2="461.0" y2="188.5" stroke="#5a0000" stroke-width="1.4"/><line x1="470.8" y1="172.5" x2="461.0" y2="161.5" stroke="#5a0000" stroke-width="1.4"/><line x1="473.0" y1="175.0" x2="478.7" y2="147.6" stroke="#ff1010" stroke-width="1.0"/></g>
<g><polygon points="800.9,166.0 810.7,149.7 801.7,149.7 791.9,166.0" fill="#ff0000"/><polygon points="785.5,194.0 794.5,177.1 785.5,177.1 776.5,194.0" fill="#ff0000"/><polygon points="826.2,177.1 811.1,184.0 810.7,204.5 800.9,188.2 785.5,194.0 794.5,177.1 785.5,160.2 800.9,166.0 810.7,149.7 811.1,170.2" fill="#550000"/><polygon points="806.4,177.1 813.8,175.0 826.2,177.1" fill="url(#cyl)"/><polygon points="806.4,177.1 813.8,175.0 826.2,177.1" fill="#3a0000" fill-opacity="0.90"/><line x1="811.1" y1="170.2" x2="826.2" y2="177.1" stroke="#c00000" stroke-width="1.1"/><polygon points="804.5,180.4 808.4,188.7 810.7,204.5" fill="url(#cyl)"/><polygon points="804.5,180.4 808.4,188.7 810.7,204.5" fill="#3a0000" fill-opacity="0.90"/><line x1="811.1" y1="184.0" x2="810.7" y2="204.5" stroke="#c00000" stroke-width="1.1"/><polygon points="801.5,179.1 796.5,186.4 785.5,194.0" fill="url(#cyl)"/><polygon points="801.5,179.1 796.5,186.4 785.5,194.0" fill="#3a0000" fill-opacity="0.90"/><line x1="800.9" y1="188.2" x2="785.5" y2="194.0" stroke="#c00000" stroke-width="1.1"/><polygon points="801.5,175.1 794.6,171.2 785.5,160.2" fill="url(#cyl)"/><polygon points="801.5,175.1 794.6,171.2 785.5,160.2" fill="#3a0000" fill-opacity="0.90"/><line x1="794.5" y1="177.1" x2="785.5" y2="160.2" stroke="#c00000" stroke-width="1.1"/><polygon points="804.5,173.8 805.3,164.2 810.7,149.7" fill="url(#cyl)"/><polygon points="804.5,173.8 805.3,164.2 810.7,149.7" fill="#3a0000" fill-opacity="0.90"/><line x1="800.9" y1="166.0" x2="810.7" y2="149.7" stroke="#c00000" stroke-width="1.1"/><line x1="803.7" y1="177.1" x2="826.2" y2="177.1" stroke="#c00000" stroke-width="1.0"/><line x1="803.7" y1="177.1" x2="810.7" y2="204.5" stroke="#c00000" stroke-width="1.0"/><line x1="803.7" y1="177.1" x2="785.5" y2="194.0" stroke="#c00000" stroke-width="1.0"/><line x1="803.7" y1="177.1" x2="785.5" y2="160.2" stroke="#c00000" stroke-width="1.0"/><line x1="803.7" y1="177.1" x2="810.7" y2="149.7" stroke="#c00000" stroke-width="1.0"/></g>
<g><polygon points="547.4,154.2 547.9,174.7 556.9,174.7 556.4,154.2" fill="#380000"/><polygon points="547.9,188.5 547.4,209.0 556.4,209.0 556.9,188.5" fill="#380000"/><polygon points="566.7,181.6 547.9,188.5 547.4,209.0 535.2,192.7 516.0,198.5 527.3,181.6 516.0,164.7 535.2,170.5 547.4,154.2 547.9,174.7" fill="#c20000"/><polygon points="542.1,181.6 551.3,179.5 566.7,181.6" fill="url(#cyl)"/><line x1="547.9" y1="174.7" x2="566.7" y2="181.6" stroke="#ff1010" stroke-width="1.1"/><polygon points="539.7,184.9 544.5,193.2 547.4,209.0" fill="url(#cyl)"/><line x1="547.9" y1="188.5" x2="547.4" y2="209.0" stroke="#ff1010" stroke-width="1.1"/><polygon points="536.0,183.6 529.7,190.9 516.0,198.5" fill="url(#cyl)"/><line x1="535.2" y1="192.7" x2="516.0" y2="198.5" stroke="#ff1010" stroke-width="1.1"/><polygon points="536.0,179.6 527.4,175.7 516.0,164.7" fill="url(#cyl)"/><line x1="527.3" y1="181.6" x2="516.0" y2="164.7" stroke="#ff1010" stroke-width="1.1"/><polygon points="539.7,178.3 540.7,168.7 547.4,154.2" fill="url(#cyl)"/><line x1="535.2" y1="170.5" x2="547.4" y2="154.2" stroke="#ff1010" stroke-width="1.1"/><line x1="538.7" y1="181.6" x2="566.7" y2="181.6" stroke="#ff1010" stroke-width="1.0"/><line x1="538.7" y1="181.6" x2="547.4" y2="209.0" stroke="#ff1010" stroke-width="1.0"/><line x1="535.3" y1="184.1" x2="520.6" y2="195.1" stroke="#5a0000" stroke-width="1.4"/><line x1="535.3" y1="179.1" x2="520.6" y2="168.1" stroke="#5a0000" stroke-width="1.4"/><line x1="538.7" y1="181.6" x2="547.4" y2="154.2" stroke="#ff1010" stroke-width="1.0"/></g>
<g><polygon points="725.2,174.4 738.2,158.1 729.2,158.1 716.2,174.4" fill="#ff0000"/><polygon points="704.8,202.4 716.8,185.5 707.8,185.5 695.8,202.4" fill="#ff0000"/><polygon points="758.9,185.5 738.8,192.4 738.2,212.9 725.2,196.6 704.8,202.4 716.8,185.5 704.8,168.6 725.2,174.4 738.2,158.1 738.8,178.6" fill="#800000"/><polygon points="732.6,185.5 742.4,183.4 758.9,185.5" fill="url(#cyl)"/><polygon points="732.6,185.5 742.4,183.4 758.9,185.5" fill="#3a0000" fill-opacity="0.34"/><line x1="738.8" y1="178.6" x2="758.9" y2="185.5" stroke="#ff0000" stroke-width="1.1"/><polygon points="730.1,188.8 735.2,197.1 738.2,212.9" fill="url(#cyl)"/><polygon points="730.1,188.8 735.2,197.1 738.2,212.9" fill="#3a0000" fill-opacity="0.34"/><line x1="738.8" y1="192.4" x2="738.2" y2="212.9" stroke="#ff0000" stroke-width="1.1"/><polygon points="726.1,187.5 719.4,194.8 704.8,202.4" fill="url(#cyl)"/><polygon points="726.1,187.5 719.4,194.8 704.8,202.4" fill="#3a0000" fill-opacity="0.34"/><line x1="725.2" y1="196.6" x2="704.8" y2="202.4" stroke="#ff0000" stroke-width="1.1"/><polygon points="726.1,183.5 716.9,179.6 704.8,168.6" fill="url(#cyl)"/><polygon points="726.1,183.5 716.9,179.6 704.8,168.6" fill="#3a0000" fill-opacity="0.34"/><line x1="716.8" y1="185.5" x2="704.8" y2="168.6" stroke="#ff0000" stroke-width="1.1"/><polygon points="730.1,182.2 731.1,172.6 738.2,158.1" fill="url(#cyl)"/><polygon points="730.1,182.2 731.1,172.6 738.2,158.1" fill="#3a0000" fill-opacity="0.34"/><line x1="725.2" y1="174.4" x2="738.2" y2="158.1" stroke="#ff0000" stroke-width="1.1"/><line x1="729.0" y1="185.5" x2="758.9" y2="185.5" stroke="#ff0000" stroke-width="1.0"/><line x1="729.0" y1="185.5" x2="738.2" y2="212.9" stroke="#ff0000" stroke-width="1.0"/><line x1="729.0" y1="185.5" x2="704.8" y2="202.4" stroke="#ff0000" stroke-width="1.0"/><line x1="729.0" y1="185.5" x2="704.8" y2="168.6" stroke="#ff0000" stroke-width="1.0"/><line x1="729.0" y1="185.5" x2="738.2" y2="158.1" stroke="#ff0000" stroke-width="1.0"/></g>
<g><polygon points="639.9,159.1 640.5,179.6 642.7,179.6 642.1,159.1" fill="#380000"/><polygon points="640.5,193.4 639.9,213.9 642.1,213.9 642.7,193.4" fill="#380000"/><polygon points="661.9,186.5 640.5,193.4 639.9,213.9 626.0,197.6 604.2,203.4 617.0,186.5 604.2,169.6 626.0,175.4 639.9,159.1 640.5,179.6" fill="#ae0000"/><polygon points="633.8,186.5 642.7,182.4 661.9,186.5" fill="url(#cyl)"/><line x1="640.5" y1="179.6" x2="661.9" y2="186.5" stroke="#ff1010" stroke-width="1.1"/><polygon points="631.2,189.8 638.3,196.1 639.9,213.9" fill="url(#cyl)"/><line x1="640.5" y1="193.4" x2="639.9" y2="213.9" stroke="#ff1010" stroke-width="1.1"/><polygon points="626.9,188.5 622.4,196.6 604.2,203.4" fill="url(#cyl)"/><line x1="626.0" y1="197.6" x2="604.2" y2="203.4" stroke="#ff1010" stroke-width="1.1"/><polygon points="626.9,184.5 617.1,183.1 604.2,169.6" fill="url(#cyl)"/><line x1="617.0" y1="186.5" x2="604.2" y2="169.6" stroke="#ff1010" stroke-width="1.1"/><polygon points="631.2,183.2 629.6,174.3 639.9,159.1" fill="url(#cyl)"/><line x1="626.0" y1="175.4" x2="639.9" y2="159.1" stroke="#ff1010" stroke-width="1.1"/><line x1="630.0" y1="186.5" x2="661.9" y2="186.5" stroke="#ff1010" stroke-width="1.0"/><line x1="630.0" y1="186.5" x2="639.9" y2="213.9" stroke="#ff1010" stroke-width="1.0"/><line x1="626.1" y1="189.0" x2="609.4" y2="200.0" stroke="#5a0000" stroke-width="1.4"/><line x1="626.1" y1="184.0" x2="609.4" y2="173.0" stroke="#5a0000" stroke-width="1.4"/><line x1="630.0" y1="186.5" x2="639.9" y2="159.1" stroke="#ff1010" stroke-width="1.0"/></g>
<g><polygon points="826.3,199.6 833.6,183.3 824.6,183.3 817.3,199.6" fill="#ff0000"/><polygon points="814.9,227.6 821.6,210.7 812.6,210.7 805.9,227.6" fill="#ff0000"/><polygon points="845.1,210.7 833.9,217.6 833.6,238.1 826.3,221.8 814.9,227.6 821.6,210.7 814.9,193.8 826.3,199.6 833.6,183.3 833.9,203.8" fill="#500000"/><polygon points="830.4,210.7 835.9,208.6 845.1,210.7" fill="url(#cyl)"/><polygon points="830.4,210.7 835.9,208.6 845.1,210.7" fill="#3a0000" fill-opacity="0.90"/><line x1="833.9" y1="203.8" x2="845.1" y2="210.7" stroke="#900000" stroke-width="1.1"/><polygon points="829.0,214.0 831.9,222.3 833.6,238.1" fill="url(#cyl)"/><polygon points="829.0,214.0 831.9,222.3 833.6,238.1" fill="#3a0000" fill-opacity="0.90"/><line x1="833.9" y1="217.6" x2="833.6" y2="238.1" stroke="#900000" stroke-width="1.1"/><polygon points="826.8,212.7 823.0,220.0 814.9,227.6" fill="url(#cyl)"/><polygon points="826.8,212.7 823.0,220.0 814.9,227.6" fill="#3a0000" fill-opacity="0.90"/><line x1="826.3" y1="221.8" x2="814.9" y2="227.6" stroke="#900000" stroke-width="1.1"/><polygon points="826.8,208.7 821.6,204.8 814.9,193.8" fill="url(#cyl)"/><polygon points="826.8,208.7 821.6,204.8 814.9,193.8" fill="#3a0000" fill-opacity="0.90"/><line x1="821.6" y1="210.7" x2="814.9" y2="193.8" stroke="#900000" stroke-width="1.1"/><polygon points="829.0,207.4 829.6,197.8 833.6,183.3" fill="url(#cyl)"/><polygon points="829.0,207.4 829.6,197.8 833.6,183.3" fill="#3a0000" fill-opacity="0.90"/><line x1="826.3" y1="199.6" x2="833.6" y2="183.3" stroke="#900000" stroke-width="1.1"/><line x1="828.4" y1="210.7" x2="845.1" y2="210.7" stroke="#900000" stroke-width="1.0"/><line x1="828.4" y1="210.7" x2="833.6" y2="238.1" stroke="#900000" stroke-width="1.0"/><line x1="828.4" y1="210.7" x2="814.9" y2="227.6" stroke="#900000" stroke-width="1.0"/><line x1="828.4" y1="210.7" x2="814.9" y2="193.8" stroke="#900000" stroke-width="1.0"/><line x1="828.4" y1="210.7" x2="833.6" y2="183.3" stroke="#900000" stroke-width="1.0"/></g>
<g><polygon points="512.5,190.1 513.0,210.6 522.0,210.6 521.5,190.1" fill="#380000"/><polygon points="513.0,224.4 512.5,244.9 521.5,244.9 522.0,224.4" fill="#380000"/><polygon points="529.3,217.5 513.0,224.4 512.5,244.9 501.9,228.6 485.3,234.4 495.1,217.5 485.3,200.6 501.9,206.4 512.5,190.1 513.0,210.6" fill="#ca0000"/><polygon points="507.9,217.5 515.9,215.4 529.3,217.5" fill="url(#cyl)"/><line x1="513.0" y1="210.6" x2="529.3" y2="217.5" stroke="#ff1010" stroke-width="1.1"/><polygon points="505.9,220.8 510.0,229.1 512.5,244.9" fill="url(#cyl)"/><line x1="513.0" y1="224.4" x2="512.5" y2="244.9" stroke="#ff1010" stroke-width="1.1"/><polygon points="502.6,219.5 497.2,226.8 485.3,234.4" fill="url(#cyl)"/><line x1="501.9" y1="228.6" x2="485.3" y2="234.4" stroke="#ff1010" stroke-width="1.1"/><polygon points="502.6,215.5 495.1,211.6 485.3,200.6" fill="url(#cyl)"/><line x1="495.1" y1="217.5" x2="485.3" y2="200.6" stroke="#ff1010" stroke-width="1.1"/><polygon points="505.9,214.2 506.7,204.6 512.5,190.1" fill="url(#cyl)"/><line x1="501.9" y1="206.4" x2="512.5" y2="190.1" stroke="#ff1010" stroke-width="1.1"/><line x1="505.0" y1="217.5" x2="529.3" y2="217.5" stroke="#ff1010" stroke-width="1.0"/><line x1="505.0" y1="217.5" x2="512.5" y2="244.9" stroke="#ff1010" stroke-width="1.0"/><line x1="502.0" y1="220.0" x2="489.2" y2="231.0" stroke="#5a0000" stroke-width="1.4"/><line x1="502.0" y1="215.0" x2="489.2" y2="204.0" stroke="#5a0000" stroke-width="1.4"/><line x1="505.0" y1="217.5" x2="512.5" y2="190.1" stroke="#ff1010" stroke-width="1.0"/></g>
<g><polygon points="768.9,207.4 780.4,191.1 771.4,191.1 759.9,207.4" fill="#ff0000"/><polygon points="750.7,235.4 761.4,218.5 752.4,218.5 741.7,235.4" fill="#ff0000"/><polygon points="798.8,218.5 780.9,225.4 780.4,245.9 768.9,229.6 750.7,235.4 761.4,218.5 750.7,201.6 768.9,207.4 780.4,191.1 780.9,211.6" fill="#670000"/><polygon points="775.4,218.5 784.1,216.4 798.8,218.5" fill="url(#cyl)"/><polygon points="775.4,218.5 784.1,216.4 798.8,218.5" fill="#3a0000" fill-opacity="0.82"/><line x1="780.9" y1="211.6" x2="798.8" y2="218.5" stroke="#c00000" stroke-width="1.1"/><polygon points="773.2,221.8 777.7,230.1 780.4,245.9" fill="url(#cyl)"/><polygon points="773.2,221.8 777.7,230.1 780.4,245.9" fill="#3a0000" fill-opacity="0.82"/><line x1="780.9" y1="225.4" x2="780.4" y2="245.9" stroke="#c00000" stroke-width="1.1"/><polygon points="769.6,220.5 763.7,227.8 750.7,235.4" fill="url(#cyl)"/><polygon points="769.6,220.5 763.7,227.8 750.7,235.4" fill="#3a0000" fill-opacity="0.82"/><line x1="768.9" y1="229.6" x2="750.7" y2="235.4" stroke="#c00000" stroke-width="1.1"/><polygon points="769.6,216.5 761.4,212.6 750.7,201.6" fill="url(#cyl)"/><polygon points="769.6,216.5 761.4,212.6 750.7,201.6" fill="#3a0000" fill-opacity="0.82"/><line x1="761.4" y1="218.5" x2="750.7" y2="201.6" stroke="#c00000" stroke-width="1.1"/><polygon points="773.2,215.2 774.1,205.6 780.4,191.1" fill="url(#cyl)"/><polygon points="773.2,215.2 774.1,205.6 780.4,191.1" fill="#3a0000" fill-opacity="0.82"/><line x1="768.9" y1="207.4" x2="780.4" y2="191.1" stroke="#c00000" stroke-width="1.1"/><line x1="772.2" y1="218.5" x2="798.8" y2="218.5" stroke="#c00000" stroke-width="1.0"/><line x1="772.2" y1="218.5" x2="780.4" y2="245.9" stroke="#c00000" stroke-width="1.0"/><line x1="772.2" y1="218.5" x2="750.7" y2="235.4" stroke="#c00000" stroke-width="1.0"/><line x1="772.2" y1="218.5" x2="750.7" y2="201.6" stroke="#c00000" stroke-width="1.0"/><line x1="772.2" y1="218.5" x2="780.4" y2="191.1" stroke="#c00000" stroke-width="1.0"/></g>
<g><polygon points="595.3,196.8 595.9,217.3 603.7,217.3 603.1,196.8" fill="#380000"/><polygon points="595.9,231.1 595.3,251.6 603.1,251.6 603.7,231.1" fill="#380000"/><polygon points="616.6,224.2 595.9,231.1 595.3,251.6 581.9,235.3 560.9,241.1 573.3,224.2 560.9,207.3 581.9,213.1 595.3,196.8 595.9,217.3" fill="#b80000"/><polygon points="589.5,224.2 599.6,222.1 616.6,224.2" fill="url(#cyl)"/><line x1="595.9" y1="217.3" x2="616.6" y2="224.2" stroke="#ff1010" stroke-width="1.1"/><polygon points="586.9,227.5 592.2,235.8 595.3,251.6" fill="url(#cyl)"/><line x1="595.9" y1="231.1" x2="595.3" y2="251.6" stroke="#ff1010" stroke-width="1.1"/><polygon points="582.8,226.2 575.9,233.5 560.9,241.1" fill="url(#cyl)"/><line x1="581.9" y1="235.3" x2="560.9" y2="241.1" stroke="#ff1010" stroke-width="1.1"/><polygon points="582.8,222.2 573.3,218.3 560.9,207.3" fill="url(#cyl)"/><line x1="573.3" y1="224.2" x2="560.9" y2="207.3" stroke="#ff1010" stroke-width="1.1"/><polygon points="586.9,220.9 588.0,211.3 595.3,196.8" fill="url(#cyl)"/><line x1="581.9" y1="213.1" x2="595.3" y2="196.8" stroke="#ff1010" stroke-width="1.1"/><line x1="585.8" y1="224.2" x2="616.6" y2="224.2" stroke="#ff1010" stroke-width="1.0"/><line x1="585.8" y1="224.2" x2="595.3" y2="251.6" stroke="#ff1010" stroke-width="1.0"/><line x1="582.1" y1="226.7" x2="565.9" y2="237.7" stroke="#5a0000" stroke-width="1.4"/><line x1="582.1" y1="221.7" x2="565.9" y2="210.7" stroke="#5a0000" stroke-width="1.4"/><line x1="585.8" y1="224.2" x2="595.3" y2="196.8" stroke="#ff1010" stroke-width="1.0"/></g>
<g><polygon points="680.5,213.9 694.3,197.6 689.7,197.6 675.9,213.9" fill="#ff0000"/><polygon points="658.9,241.9 671.7,225.0 667.1,225.0 654.3,241.9" fill="#ff0000"/><polygon points="716.1,225.0 694.9,231.9 694.3,252.4 680.5,236.1 658.9,241.9 671.7,225.0 658.9,208.1 680.5,213.9 694.3,197.6 694.9,218.1" fill="#990000"/><polygon points="688.3,225.0 698.2,222.3 716.1,225.0" fill="url(#cyl)"/><line x1="694.9" y1="218.1" x2="716.1" y2="225.0" stroke="#ff0000" stroke-width="1.1"/><polygon points="685.7,228.3 691.6,236.0 694.3,252.4" fill="url(#cyl)"/><line x1="694.9" y1="231.9" x2="694.3" y2="252.4" stroke="#ff0000" stroke-width="1.1"/><polygon points="681.4,227.0 675.2,234.5 658.9,241.9" fill="url(#cyl)"/><line x1="680.5" y1="236.1" x2="658.9" y2="241.9" stroke="#ff0000" stroke-width="1.1"/><polygon points="681.4,223.0 671.7,219.9 658.9,208.1" fill="url(#cyl)"/><line x1="671.7" y1="225.0" x2="658.9" y2="208.1" stroke="#ff0000" stroke-width="1.1"/><polygon points="685.7,221.7 685.9,212.3 694.3,197.6" fill="url(#cyl)"/><line x1="680.5" y1="213.9" x2="694.3" y2="197.6" stroke="#ff0000" stroke-width="1.1"/><line x1="684.5" y1="225.0" x2="716.1" y2="225.0" stroke="#ff0000" stroke-width="1.0"/><line x1="684.5" y1="225.0" x2="694.3" y2="252.4" stroke="#ff0000" stroke-width="1.0"/><line x1="680.7" y1="227.5" x2="664.1" y2="238.5" stroke="#5a0000" stroke-width="1.4"/><line x1="680.7" y1="222.5" x2="664.1" y2="211.5" stroke="#5a0000" stroke-width="1.4"/><line x1="684.5" y1="225.0" x2="694.3" y2="197.6" stroke="#ff0000" stroke-width="1.0"/></g>
<g><polygon points="484.0,221.6 484.4,242.1 493.4,242.1 493.0,221.6" fill="#380000"/><polygon points="484.4,255.9 484.0,276.4 493.0,276.4 493.4,255.9" fill="#380000"/><polygon points="497.4,249.0 484.4,255.9 484.0,276.4 475.6,260.1 462.3,265.9 470.1,249.0 462.3,232.1 475.6,237.9 484.0,221.6 484.4,242.1" fill="#d00000"/><polygon points="480.3,249.0 486.7,246.9 497.4,249.0" fill="url(#cyl)"/><line x1="484.4" y1="242.1" x2="497.4" y2="249.0" stroke="#ff1010" stroke-width="1.1"/><polygon points="478.7,252.3 482.0,260.6 484.0,276.4" fill="url(#cyl)"/><line x1="484.4" y1="255.9" x2="484.0" y2="276.4" stroke="#ff1010" stroke-width="1.1"/><polygon points="476.1,251.0 471.8,258.3 462.3,265.9" fill="url(#cyl)"/><line x1="475.6" y1="260.1" x2="462.3" y2="265.9" stroke="#ff1010" stroke-width="1.1"/><polygon points="476.1,247.0 470.1,243.1 462.3,232.1" fill="url(#cyl)"/><line x1="470.1" y1="249.0" x2="462.3" y2="232.1" stroke="#ff1010" stroke-width="1.1"/><polygon points="478.7,245.7 479.4,236.1 484.0,221.6" fill="url(#cyl)"/><line x1="475.6" y1="237.9" x2="484.0" y2="221.6" stroke="#ff1010" stroke-width="1.1"/><line x1="478.0" y1="249.0" x2="497.4" y2="249.0" stroke="#ff1010" stroke-width="1.0"/><line x1="478.0" y1="249.0" x2="484.0" y2="276.4" stroke="#ff1010" stroke-width="1.0"/><line x1="475.6" y1="251.5" x2="465.5" y2="262.5" stroke="#5a0000" stroke-width="1.4"/><line x1="475.6" y1="246.5" x2="465.5" y2="235.5" stroke="#5a0000" stroke-width="1.4"/><line x1="478.0" y1="249.0" x2="484.0" y2="221.6" stroke="#ff1010" stroke-width="1.0"/></g>
<g><polygon points="803.3,239.9 812.8,223.6 803.8,223.6 794.3,239.9" fill="#ff0000"/><polygon points="788.3,267.9 797.1,251.0 788.1,251.0 779.3,267.9" fill="#ff0000"/><polygon points="827.9,251.0 813.2,257.9 812.8,278.4 803.3,262.1 788.3,267.9 797.1,251.0 788.3,234.1 803.3,239.9 812.8,223.6 813.2,244.1" fill="#530000"/><polygon points="808.6,251.0 815.8,248.9 827.9,251.0" fill="url(#cyl)"/><polygon points="808.6,251.0 815.8,248.9 827.9,251.0" fill="#3a0000" fill-opacity="0.90"/><line x1="813.2" y1="244.1" x2="827.9" y2="251.0" stroke="#c00000" stroke-width="1.1"/><polygon points="806.8,254.3 810.5,262.6 812.8,278.4" fill="url(#cyl)"/><polygon points="806.8,254.3 810.5,262.6 812.8,278.4" fill="#3a0000" fill-opacity="0.90"/><line x1="813.2" y1="257.9" x2="812.8" y2="278.4" stroke="#c00000" stroke-width="1.1"/><polygon points="803.9,253.0 799.0,260.3 788.3,267.9" fill="url(#cyl)"/><polygon points="803.9,253.0 799.0,260.3 788.3,267.9" fill="#3a0000" fill-opacity="0.90"/><line x1="803.3" y1="262.1" x2="788.3" y2="267.9" stroke="#c00000" stroke-width="1.1"/><polygon points="803.9,249.0 797.1,245.1 788.3,234.1" fill="url(#cyl)"/><polygon points="803.9,249.0 797.1,245.1 788.3,234.1" fill="#3a0000" fill-opacity="0.90"/><line x1="797.1" y1="251.0" x2="788.3" y2="234.1" stroke="#c00000" stroke-width="1.1"/><polygon points="806.8,247.7 807.5,238.1 812.8,223.6" fill="url(#cyl)"/><polygon points="806.8,247.7 807.5,238.1 812.8,223.6" fill="#3a0000" fill-opacity="0.90"/><line x1="803.3" y1="239.9" x2="812.8" y2="223.6" stroke="#c00000" stroke-width="1.1"/><line x1="806.0" y1="251.0" x2="827.9" y2="251.0" stroke="#c00000" stroke-width="1.0"/><line x1="806.0" y1="251.0" x2="812.8" y2="278.4" stroke="#c00000" stroke-width="1.0"/><line x1="806.0" y1="251.0" x2="788.3" y2="267.9" stroke="#c00000" stroke-width="1.0"/><line x1="806.0" y1="251.0" x2="788.3" y2="234.1" stroke="#c00000" stroke-width="1.0"/><line x1="806.0" y1="251.0" x2="812.8" y2="223.6" stroke="#c00000" stroke-width="1.0"/></g>
<g><polygon points="551.9,230.4 552.5,250.9 561.5,250.9 560.9,230.4" fill="#380000"/><polygon points="552.5,264.7 551.9,285.2 560.9,285.2 561.5,264.7" fill="#380000"/><polygon points="571.5,257.8 552.5,264.7 551.9,285.2 539.6,268.9 520.3,274.7 531.7,257.8 520.3,240.9 539.6,246.7 551.9,230.4 552.5,250.9" fill="#c10000"/><polygon points="546.6,257.8 555.9,255.7 571.5,257.8" fill="url(#cyl)"/><line x1="552.5" y1="250.9" x2="571.5" y2="257.8" stroke="#ff1010" stroke-width="1.1"/><polygon points="544.2,261.1 549.0,269.4 551.9,285.2" fill="url(#cyl)"/><line x1="552.5" y1="264.7" x2="551.9" y2="285.2" stroke="#ff1010" stroke-width="1.1"/><polygon points="540.5,259.8 534.1,267.1 520.3,274.7" fill="url(#cyl)"/><line x1="539.6" y1="268.9" x2="520.3" y2="274.7" stroke="#ff1010" stroke-width="1.1"/><polygon points="540.5,255.8 531.7,251.9 520.3,240.9" fill="url(#cyl)"/><line x1="531.7" y1="257.8" x2="520.3" y2="240.9" stroke="#ff1010" stroke-width="1.1"/><polygon points="544.2,254.5 545.2,244.9 551.9,230.4" fill="url(#cyl)"/><line x1="539.6" y1="246.7" x2="551.9" y2="230.4" stroke="#ff1010" stroke-width="1.1"/><line x1="543.2" y1="257.8" x2="571.5" y2="257.8" stroke="#ff1010" stroke-width="1.0"/><line x1="543.2" y1="257.8" x2="551.9" y2="285.2" stroke="#ff1010" stroke-width="1.0"/><line x1="539.8" y1="260.3" x2="524.9" y2="271.3" stroke="#5a0000" stroke-width="1.4"/><line x1="539.8" y1="255.3" x2="524.9" y2="244.3" stroke="#5a0000" stroke-width="1.4"/><line x1="543.2" y1="257.8" x2="551.9" y2="230.4" stroke="#ff1010" stroke-width="1.0"/></g>
<g><polygon points="730.1,248.9 742.9,232.6 733.9,232.6 721.1,248.9" fill="#ff0000"/><polygon points="709.9,276.9 721.8,260.0 712.8,260.0 700.9,276.9" fill="#ff0000"/><polygon points="763.4,260.0 743.5,266.9 742.9,287.4 730.1,271.1 709.9,276.9 721.8,260.0 709.9,243.1 730.1,248.9 742.9,232.6 743.5,253.1" fill="#7d0000"/><polygon points="737.4,260.0 747.1,257.9 763.4,260.0" fill="url(#cyl)"/><polygon points="737.4,260.0 747.1,257.9 763.4,260.0" fill="#3a0000" fill-opacity="0.40"/><line x1="743.5" y1="253.1" x2="763.4" y2="260.0" stroke="#ff0000" stroke-width="1.1"/><polygon points="734.9,263.3 739.9,271.6 742.9,287.4" fill="url(#cyl)"/><polygon points="734.9,263.3 739.9,271.6 742.9,287.4" fill="#3a0000" fill-opacity="0.40"/><line x1="743.5" y1="266.9" x2="742.9" y2="287.4" stroke="#ff0000" stroke-width="1.1"/><polygon points="730.9,262.0 724.3,269.3 709.9,276.9" fill="url(#cyl)"/><polygon points="730.9,262.0 724.3,269.3 709.9,276.9" fill="#3a0000" fill-opacity="0.40"/><line x1="730.1" y1="271.1" x2="709.9" y2="276.9" stroke="#ff0000" stroke-width="1.1"/><polygon points="730.9,258.0 721.8,254.1 709.9,243.1" fill="url(#cyl)"/><polygon points="730.9,258.0 721.8,254.1 709.9,243.1" fill="#3a0000" fill-opacity="0.40"/><line x1="721.8" y1="260.0" x2="709.9" y2="243.1" stroke="#ff0000" stroke-width="1.1"/><polygon points="734.9,256.7 735.9,247.1 742.9,232.6" fill="url(#cyl)"/><polygon points="734.9,256.7 735.9,247.1 742.9,232.6" fill="#3a0000" fill-opacity="0.40"/><line x1="730.1" y1="248.9" x2="742.9" y2="232.6" stroke="#ff0000" stroke-width="1.1"/><line x1="733.8" y1="260.0" x2="763.4" y2="260.0" stroke="#ff0000" stroke-width="1.0"/><line x1="733.8" y1="260.0" x2="742.9" y2="287.4" stroke="#ff0000" stroke-width="1.0"/><line x1="733.8" y1="260.0" x2="709.9" y2="276.9" stroke="#ff0000" stroke-width="1.0"/><line x1="733.8" y1="260.0" x2="709.9" y2="243.1" stroke="#ff0000" stroke-width="1.0"/><line x1="733.8" y1="260.0" x2="742.9" y2="232.6" stroke="#ff0000" stroke-width="1.0"/></g>
<g><polygon points="647.1,235.1 647.7,255.6 649.1,255.6 648.4,235.1" fill="#380000"/><polygon points="647.7,269.4 647.1,289.9 648.4,289.9 649.1,269.4" fill="#380000"/><polygon points="669.2,262.5 647.7,269.4 647.1,289.9 633.2,273.6 611.3,279.4 624.2,262.5 611.3,245.6 633.2,251.4 647.1,235.1 647.7,255.6" fill="#ac0000"/><polygon points="641.0,262.5 649.5,257.8 669.2,262.5" fill="url(#cyl)"/><line x1="647.7" y1="255.6" x2="669.2" y2="262.5" stroke="#ff1010" stroke-width="1.1"/><polygon points="638.4,265.8 645.9,271.6 647.1,289.9" fill="url(#cyl)"/><line x1="647.7" y1="269.4" x2="647.1" y2="289.9" stroke="#ff1010" stroke-width="1.1"/><polygon points="634.1,264.5 630.3,272.8 611.3,279.4" fill="url(#cyl)"/><line x1="633.2" y1="273.6" x2="611.3" y2="279.4" stroke="#ff1010" stroke-width="1.1"/><polygon points="634.1,260.5 624.2,259.8 611.3,245.6" fill="url(#cyl)"/><line x1="624.2" y1="262.5" x2="611.3" y2="245.6" stroke="#ff1010" stroke-width="1.1"/><polygon points="638.4,259.2 636.1,250.6 647.1,235.1" fill="url(#cyl)"/><line x1="633.2" y1="251.4" x2="647.1" y2="235.1" stroke="#ff1010" stroke-width="1.1"/><line x1="637.2" y1="262.5" x2="669.2" y2="262.5" stroke="#ff1010" stroke-width="1.0"/><line x1="637.2" y1="262.5" x2="647.1" y2="289.9" stroke="#ff1010" stroke-width="1.0"/><line x1="633.3" y1="265.0" x2="616.5" y2="276.0" stroke="#5a0000" stroke-width="1.4"/><line x1="633.3" y1="260.0" x2="616.5" y2="249.0" stroke="#5a0000" stroke-width="1.4"/><line x1="637.2" y1="262.5" x2="647.1" y2="235.1" stroke="#ff1010" stroke-width="1.0"/></g>
<g><polygon points="826.4,271.4 833.4,255.1 824.4,255.1 817.4,271.4" fill="#ff0000"/><polygon points="815.3,299.4 821.8,282.5 812.8,282.5 806.3,299.4" fill="#ff0000"/><polygon points="844.6,282.5 833.7,289.4 833.4,309.9 826.4,293.6 815.3,299.4 821.8,282.5 815.3,265.6 826.4,271.4 833.4,255.1 833.7,275.6" fill="#500000"/><polygon points="830.3,282.5 835.7,280.4 844.6,282.5" fill="url(#cyl)"/><polygon points="830.3,282.5 835.7,280.4 844.6,282.5" fill="#3a0000" fill-opacity="0.90"/><line x1="833.7" y1="275.6" x2="844.6" y2="282.5" stroke="#900000" stroke-width="1.1"/><polygon points="829.0,285.8 831.7,294.1 833.4,309.9" fill="url(#cyl)"/><polygon points="829.0,285.8 831.7,294.1 833.4,309.9" fill="#3a0000" fill-opacity="0.90"/><line x1="833.7" y1="289.4" x2="833.4" y2="309.9" stroke="#900000" stroke-width="1.1"/><polygon points="826.8,284.5 823.2,291.8 815.3,299.4" fill="url(#cyl)"/><polygon points="826.8,284.5 823.2,291.8 815.3,299.4" fill="#3a0000" fill-opacity="0.90"/><line x1="826.4" y1="293.6" x2="815.3" y2="299.4" stroke="#900000" stroke-width="1.1"/><polygon points="826.8,280.5 821.8,276.6 815.3,265.6" fill="url(#cyl)"/><polygon points="826.8,280.5 821.8,276.6 815.3,265.6" fill="#3a0000" fill-opacity="0.90"/><line x1="821.8" y1="282.5" x2="815.3" y2="265.6" stroke="#900000" stroke-width="1.1"/><polygon points="829.0,279.2 829.5,269.6 833.4,255.1" fill="url(#cyl)"/><polygon points="829.0,279.2 829.5,269.6 833.4,255.1" fill="#3a0000" fill-opacity="0.90"/><line x1="826.4" y1="271.4" x2="833.4" y2="255.1" stroke="#900000" stroke-width="1.1"/><line x1="828.4" y1="282.5" x2="844.6" y2="282.5" stroke="#900000" stroke-width="1.0"/><line x1="828.4" y1="282.5" x2="833.4" y2="309.9" stroke="#900000" stroke-width="1.0"/><line x1="828.4" y1="282.5" x2="815.3" y2="299.4" stroke="#900000" stroke-width="1.0"/><line x1="828.4" y1="282.5" x2="815.3" y2="265.6" stroke="#900000" stroke-width="1.0"/><line x1="828.4" y1="282.5" x2="833.4" y2="255.1" stroke="#900000" stroke-width="1.0"/></g>
<g><polygon points="517.2,259.6 517.6,280.1 526.6,280.1 526.2,259.6" fill="#380000"/><polygon points="517.6,293.9 517.2,314.4 526.2,314.4 526.6,293.9" fill="#380000"/><polygon points="534.3,287.0 517.6,293.9 517.2,314.4 506.4,298.1 489.4,303.9 499.4,287.0 489.4,270.1 506.4,275.9 517.2,259.6 517.6,280.1" fill="#c90000"/><polygon points="512.5,287.0 520.6,284.9 534.3,287.0" fill="url(#cyl)"/><line x1="517.6" y1="280.1" x2="534.3" y2="287.0" stroke="#ff1010" stroke-width="1.1"/><polygon points="510.4,290.3 514.6,298.6 517.2,314.4" fill="url(#cyl)"/><line x1="517.6" y1="293.9" x2="517.2" y2="314.4" stroke="#ff1010" stroke-width="1.1"/><polygon points="507.1,289.0 501.5,296.3 489.4,303.9" fill="url(#cyl)"/><line x1="506.4" y1="298.1" x2="489.4" y2="303.9" stroke="#ff1010" stroke-width="1.1"/><polygon points="507.1,285.0 499.5,281.1 489.4,270.1" fill="url(#cyl)"/><line x1="499.4" y1="287.0" x2="489.4" y2="270.1" stroke="#ff1010" stroke-width="1.1"/><polygon points="510.4,283.7 511.2,274.1 517.2,259.6" fill="url(#cyl)"/><line x1="506.4" y1="275.9" x2="517.2" y2="259.6" stroke="#ff1010" stroke-width="1.1"/><line x1="509.5" y1="287.0" x2="534.3" y2="287.0" stroke="#ff1010" stroke-width="1.0"/><line x1="509.5" y1="287.0" x2="517.2" y2="314.4" stroke="#ff1010" stroke-width="1.0"/><line x1="506.5" y1="289.5" x2="493.5" y2="300.5" stroke="#5a0000" stroke-width="1.4"/><line x1="506.5" y1="284.5" x2="493.5" y2="273.5" stroke="#5a0000" stroke-width="1.4"/><line x1="509.5" y1="287.0" x2="517.2" y2="259.6" stroke="#ff1010" stroke-width="1.0"/></g>
<g><polygon points="773.7,280.4 785.0,264.1 776.0,264.1 764.7,280.4" fill="#ff0000"/><polygon points="756.0,308.4 766.5,291.5 757.5,291.5 747.0,308.4" fill="#ff0000"/><polygon points="802.9,291.5 785.5,298.4 785.0,318.9 773.7,302.6 756.0,308.4 766.5,291.5 756.0,274.6 773.7,280.4 785.0,264.1 785.5,284.6" fill="#630000"/><polygon points="780.1,291.5 788.6,289.4 802.9,291.5" fill="url(#cyl)"/><polygon points="780.1,291.5 788.6,289.4 802.9,291.5" fill="#3a0000" fill-opacity="0.89"/><line x1="785.5" y1="284.6" x2="802.9" y2="291.5" stroke="#c00000" stroke-width="1.1"/><polygon points="778.0,294.8 782.4,303.1 785.0,318.9" fill="url(#cyl)"/><polygon points="778.0,294.8 782.4,303.1 785.0,318.9" fill="#3a0000" fill-opacity="0.89"/><line x1="785.5" y1="298.4" x2="785.0" y2="318.9" stroke="#c00000" stroke-width="1.1"/><polygon points="774.5,293.5 768.7,300.8 756.0,308.4" fill="url(#cyl)"/><polygon points="774.5,293.5 768.7,300.8 756.0,308.4" fill="#3a0000" fill-opacity="0.89"/><line x1="773.7" y1="302.6" x2="756.0" y2="308.4" stroke="#c00000" stroke-width="1.1"/><polygon points="774.5,289.5 766.5,285.6 756.0,274.6" fill="url(#cyl)"/><polygon points="774.5,289.5 766.5,285.6 756.0,274.6" fill="#3a0000" fill-opacity="0.89"/><line x1="766.5" y1="291.5" x2="756.0" y2="274.6" stroke="#c00000" stroke-width="1.1"/><polygon points="778.0,288.2 778.8,278.6 785.0,264.1" fill="url(#cyl)"/><polygon points="778.0,288.2 778.8,278.6 785.0,264.1" fill="#3a0000" fill-opacity="0.89"/><line x1="773.7" y1="280.4" x2="785.0" y2="264.1" stroke="#c00000" stroke-width="1.1"/><line x1="777.0" y1="291.5" x2="802.9" y2="291.5" stroke="#c00000" stroke-width="1.0"/><line x1="777.0" y1="291.5" x2="785.0" y2="318.9" stroke="#c00000" stroke-width="1.0"/><line x1="777.0" y1="291.5" x2="756.0" y2="308.4" stroke="#c00000" stroke-width="1.0"/><line x1="777.0" y1="291.5" x2="756.0" y2="274.6" stroke="#c00000" stroke-width="1.0"/><line x1="777.0" y1="291.5" x2="785.0" y2="264.1" stroke="#c00000" stroke-width="1.0"/></g>
<g><polygon points="602.1,270.8 602.7,291.3 609.7,291.3 609.1,270.8" fill="#380000"/><polygon points="602.7,305.1 602.1,325.6 609.1,325.6 609.7,305.1" fill="#380000"/><polygon points="623.5,298.2 602.7,305.1 602.1,325.6 588.6,309.3 567.4,315.1 579.9,298.2 567.4,281.3 588.6,287.1 602.1,270.8 602.7,291.3" fill="#b60000"/><polygon points="596.2,298.2 606.4,296.1 623.5,298.2" fill="url(#cyl)"/><line x1="602.7" y1="291.3" x2="623.5" y2="298.2" stroke="#ff1010" stroke-width="1.1"/><polygon points="593.7,301.5 598.9,309.8 602.1,325.6" fill="url(#cyl)"/><line x1="602.7" y1="305.1" x2="602.1" y2="325.6" stroke="#ff1010" stroke-width="1.1"/><polygon points="589.5,300.2 582.5,307.5 567.4,315.1" fill="url(#cyl)"/><line x1="588.6" y1="309.3" x2="567.4" y2="315.1" stroke="#ff1010" stroke-width="1.1"/><polygon points="589.5,296.2 579.9,292.3 567.4,281.3" fill="url(#cyl)"/><line x1="579.9" y1="298.2" x2="567.4" y2="281.3" stroke="#ff1010" stroke-width="1.1"/><polygon points="593.7,294.9 594.7,285.3 602.1,270.8" fill="url(#cyl)"/><line x1="588.6" y1="287.1" x2="602.1" y2="270.8" stroke="#ff1010" stroke-width="1.1"/><line x1="592.5" y1="298.2" x2="623.5" y2="298.2" stroke="#ff1010" stroke-width="1.0"/><line x1="592.5" y1="298.2" x2="602.1" y2="325.6" stroke="#ff1010" stroke-width="1.0"/><line x1="588.7" y1="300.7" x2="572.4" y2="311.7" stroke="#5a0000" stroke-width="1.4"/><line x1="588.7" y1="295.7" x2="572.4" y2="284.7" stroke="#5a0000" stroke-width="1.4"/><line x1="592.5" y1="298.2" x2="602.1" y2="270.8" stroke="#ff1010" stroke-width="1.0"/></g>
<g><polygon points="685.0,288.4 698.7,272.1 693.5,272.1 679.8,288.4" fill="#ff0000"/><polygon points="663.5,316.4 676.2,299.5 671.0,299.5 658.3,316.4" fill="#ff0000"/><polygon points="720.5,299.5 699.3,306.4 698.7,326.9 685.0,310.6 663.5,316.4 676.2,299.5 663.5,282.6 685.0,288.4 698.7,272.1 699.3,292.6" fill="#970000"/><polygon points="692.8,299.5 702.9,297.2 720.5,299.5" fill="url(#cyl)"/><line x1="699.3" y1="292.6" x2="720.5" y2="299.5" stroke="#ff0000" stroke-width="1.1"/><polygon points="690.2,302.8 695.7,310.9 698.7,326.9" fill="url(#cyl)"/><line x1="699.3" y1="306.4" x2="698.7" y2="326.9" stroke="#ff0000" stroke-width="1.1"/><polygon points="685.9,301.5 679.3,308.9 663.5,316.4" fill="url(#cyl)"/><line x1="685.0" y1="310.6" x2="663.5" y2="316.4" stroke="#ff0000" stroke-width="1.1"/><polygon points="685.9,297.5 676.3,293.9 663.5,282.6" fill="url(#cyl)"/><line x1="676.2" y1="299.5" x2="663.5" y2="282.6" stroke="#ff0000" stroke-width="1.1"/><polygon points="690.2,296.2 690.9,286.7 698.7,272.1" fill="url(#cyl)"/><line x1="685.0" y1="288.4" x2="698.7" y2="272.1" stroke="#ff0000" stroke-width="1.1"/><line x1="689.0" y1="299.5" x2="720.5" y2="299.5" stroke="#ff0000" stroke-width="1.0"/><line x1="689.0" y1="299.5" x2="698.7" y2="326.9" stroke="#ff0000" stroke-width="1.0"/><line x1="685.2" y1="302.0" x2="668.6" y2="313.0" stroke="#5a0000" stroke-width="1.4"/><line x1="685.2" y1="297.0" x2="668.6" y2="286.0" stroke="#5a0000" stroke-width="1.4"/><line x1="689.0" y1="299.5" x2="698.7" y2="272.1" stroke="#ff0000" stroke-width="1.0"/></g>
<g><polygon points="489.8,292.1 490.2,312.6 499.2,312.6 498.8,292.1" fill="#380000"/><polygon points="490.2,326.4 489.8,346.9 498.8,346.9 499.2,326.4" fill="#380000"/><polygon points="503.8,319.5 490.2,326.4 489.8,346.9 481.0,330.6 467.1,336.4 475.3,319.5 467.1,302.6 481.0,308.4 489.8,292.1 490.2,312.6" fill="#cf0000"/><polygon points="485.9,319.5 492.6,317.4 503.8,319.5" fill="url(#cyl)"/><line x1="490.2" y1="312.6" x2="503.8" y2="319.5" stroke="#ff1010" stroke-width="1.1"/><polygon points="484.3,322.8 487.7,331.1 489.8,346.9" fill="url(#cyl)"/><line x1="490.2" y1="326.4" x2="489.8" y2="346.9" stroke="#ff1010" stroke-width="1.1"/><polygon points="481.5,321.5 477.0,328.8 467.1,336.4" fill="url(#cyl)"/><line x1="481.0" y1="330.6" x2="467.1" y2="336.4" stroke="#ff1010" stroke-width="1.1"/><polygon points="481.5,317.5 475.3,313.6 467.1,302.6" fill="url(#cyl)"/><line x1="475.3" y1="319.5" x2="467.1" y2="302.6" stroke="#ff1010" stroke-width="1.1"/><polygon points="484.3,316.2 484.9,306.6 489.8,292.1" fill="url(#cyl)"/><line x1="481.0" y1="308.4" x2="489.8" y2="292.1" stroke="#ff1010" stroke-width="1.1"/><line x1="483.5" y1="319.5" x2="503.8" y2="319.5" stroke="#ff1010" stroke-width="1.0"/><line x1="483.5" y1="319.5" x2="489.8" y2="346.9" stroke="#ff1010" stroke-width="1.0"/><line x1="481.0" y1="322.0" x2="470.4" y2="333.0" stroke="#5a0000" stroke-width="1.4"/><line x1="481.0" y1="317.0" x2="470.4" y2="306.0" stroke="#5a0000" stroke-width="1.4"/><line x1="483.5" y1="319.5" x2="489.8" y2="292.1" stroke="#ff1010" stroke-width="1.0"/></g>
<g><polygon points="803.6,310.9 813.0,294.6 804.0,294.6 794.6,310.9" fill="#ff0000"/><polygon points="788.9,338.9 797.5,322.0 788.5,322.0 779.9,338.9" fill="#ff0000"/><polygon points="827.9,322.0 813.4,328.9 813.0,349.4 803.6,333.1 788.9,338.9 797.5,322.0 788.9,305.1 803.6,310.9 813.0,294.6 813.4,315.1" fill="#520000"/><polygon points="808.9,322.0 816.0,319.9 827.9,322.0" fill="url(#cyl)"/><polygon points="808.9,322.0 816.0,319.9 827.9,322.0" fill="#3a0000" fill-opacity="0.90"/><line x1="813.4" y1="315.1" x2="827.9" y2="322.0" stroke="#c00000" stroke-width="1.1"/><polygon points="807.1,325.3 810.8,333.6 813.0,349.4" fill="url(#cyl)"/><polygon points="807.1,325.3 810.8,333.6 813.0,349.4" fill="#3a0000" fill-opacity="0.90"/><line x1="813.4" y1="328.9" x2="813.0" y2="349.4" stroke="#c00000" stroke-width="1.1"/><polygon points="804.2,324.0 799.4,331.3 788.9,338.9" fill="url(#cyl)"/><polygon points="804.2,324.0 799.4,331.3 788.9,338.9" fill="#3a0000" fill-opacity="0.90"/><line x1="803.6" y1="333.1" x2="788.9" y2="338.9" stroke="#c00000" stroke-width="1.1"/><polygon points="804.2,320.0 797.6,316.1 788.9,305.1" fill="url(#cyl)"/><polygon points="804.2,320.0 797.6,316.1 788.9,305.1" fill="#3a0000" fill-opacity="0.90"/><line x1="797.5" y1="322.0" x2="788.9" y2="305.1" stroke="#c00000" stroke-width="1.1"/><polygon points="807.1,318.7 807.8,309.1 813.0,294.6" fill="url(#cyl)"/><polygon points="807.1,318.7 807.8,309.1 813.0,294.6" fill="#3a0000" fill-opacity="0.90"/><line x1="803.6" y1="310.9" x2="813.0" y2="294.6" stroke="#c00000" stroke-width="1.1"/><line x1="806.3" y1="322.0" x2="827.9" y2="322.0" stroke="#c00000" stroke-width="1.0"/><line x1="806.3" y1="322.0" x2="813.0" y2="349.4" stroke="#c00000" stroke-width="1.0"/><line x1="806.3" y1="322.0" x2="788.9" y2="338.9" stroke="#c00000" stroke-width="1.0"/><line x1="806.3" y1="322.0" x2="788.9" y2="305.1" stroke="#c00000" stroke-width="1.0"/><line x1="806.3" y1="322.0" x2="813.0" y2="294.6" stroke="#c00000" stroke-width="1.0"/></g>
<g><polygon points="560.5,304.0 561.1,324.5 570.1,324.5 569.5,304.0" fill="#380000"/><polygon points="561.1,338.3 560.5,358.8 569.5,358.8 570.1,338.3" fill="#380000"/><polygon points="580.4,331.4 561.1,338.3 560.5,358.8 548.0,342.5 528.3,348.3 539.9,331.4 528.3,314.5 548.0,320.3 560.5,304.0 561.1,324.5" fill="#c00000"/><polygon points="555.1,331.4 564.5,329.3 580.4,331.4" fill="url(#cyl)"/><line x1="561.1" y1="324.5" x2="580.4" y2="331.4" stroke="#ff1010" stroke-width="1.1"/><polygon points="552.7,334.7 557.6,343.0 560.5,358.8" fill="url(#cyl)"/><line x1="561.1" y1="338.3" x2="560.5" y2="358.8" stroke="#ff1010" stroke-width="1.1"/><polygon points="548.8,333.4 542.3,340.7 528.3,348.3" fill="url(#cyl)"/><line x1="548.0" y1="342.5" x2="528.3" y2="348.3" stroke="#ff1010" stroke-width="1.1"/><polygon points="548.8,329.4 539.9,325.5 528.3,314.5" fill="url(#cyl)"/><line x1="539.9" y1="331.4" x2="528.3" y2="314.5" stroke="#ff1010" stroke-width="1.1"/><polygon points="552.7,328.1 553.6,318.5 560.5,304.0" fill="url(#cyl)"/><line x1="548.0" y1="320.3" x2="560.5" y2="304.0" stroke="#ff1010" stroke-width="1.1"/><line x1="551.6" y1="331.4" x2="580.4" y2="331.4" stroke="#ff1010" stroke-width="1.0"/><line x1="551.6" y1="331.4" x2="560.5" y2="358.8" stroke="#ff1010" stroke-width="1.0"/><line x1="548.1" y1="333.9" x2="532.9" y2="344.9" stroke="#5a0000" stroke-width="1.4"/><line x1="548.1" y1="328.9" x2="532.9" y2="317.9" stroke="#5a0000" stroke-width="1.4"/><line x1="551.6" y1="331.4" x2="560.5" y2="304.0" stroke="#ff1010" stroke-width="1.0"/></g>
<g><polygon points="736.3,322.9 749.0,306.6 740.0,306.6 727.3,322.9" fill="#ff0000"/><polygon points="716.4,350.9 728.2,334.0 719.2,334.0 707.4,350.9" fill="#ff0000"/><polygon points="769.1,334.0 749.6,340.9 749.0,361.4 736.3,345.1 716.4,350.9 728.2,334.0 716.4,317.1 736.3,322.9 749.0,306.6 749.6,327.1" fill="#780000"/><polygon points="743.5,334.0 753.1,331.9 769.1,334.0" fill="url(#cyl)"/><polygon points="743.5,334.0 753.1,331.9 769.1,334.0" fill="#3a0000" fill-opacity="0.48"/><line x1="749.6" y1="327.1" x2="769.1" y2="334.0" stroke="#ff0000" stroke-width="1.1"/><polygon points="741.1,337.3 746.0,345.6 749.0,361.4" fill="url(#cyl)"/><polygon points="741.1,337.3 746.0,345.6 749.0,361.4" fill="#3a0000" fill-opacity="0.48"/><line x1="749.6" y1="340.9" x2="749.0" y2="361.4" stroke="#ff0000" stroke-width="1.1"/><polygon points="737.2,336.0 730.7,343.3 716.4,350.9" fill="url(#cyl)"/><polygon points="737.2,336.0 730.7,343.3 716.4,350.9" fill="#3a0000" fill-opacity="0.48"/><line x1="736.3" y1="345.1" x2="716.4" y2="350.9" stroke="#ff0000" stroke-width="1.1"/><polygon points="737.2,332.0 728.2,328.1 716.4,317.1" fill="url(#cyl)"/><polygon points="737.2,332.0 728.2,328.1 716.4,317.1" fill="#3a0000" fill-opacity="0.48"/><line x1="728.2" y1="334.0" x2="716.4" y2="317.1" stroke="#ff0000" stroke-width="1.1"/><polygon points="741.1,330.7 742.1,321.1 749.0,306.6" fill="url(#cyl)"/><polygon points="741.1,330.7 742.1,321.1 749.0,306.6" fill="#3a0000" fill-opacity="0.48"/><line x1="736.3" y1="322.9" x2="749.0" y2="306.6" stroke="#ff0000" stroke-width="1.1"/><line x1="740.0" y1="334.0" x2="769.1" y2="334.0" stroke="#ff0000" stroke-width="1.0"/><line x1="740.0" y1="334.0" x2="749.0" y2="361.4" stroke="#ff0000" stroke-width="1.0"/><line x1="740.0" y1="334.0" x2="716.4" y2="350.9" stroke="#ff0000" stroke-width="1.0"/><line x1="740.0" y1="334.0" x2="716.4" y2="317.1" stroke="#ff0000" stroke-width="1.0"/><line x1="740.0" y1="334.0" x2="749.0" y2="306.6" stroke="#ff0000" stroke-width="1.0"/></g>
<g><polygon points="653.9,308.1 654.5,328.6 655.0,328.6 654.4,308.1" fill="#380000"/><polygon points="654.5,342.4 653.9,362.9 654.4,362.9 655.0,342.4" fill="#380000"/><polygon points="676.0,335.5 654.5,342.4 653.9,362.9 640.0,346.6 618.1,352.4 631.0,335.5 618.1,318.6 640.0,324.4 653.9,308.1 654.5,328.6" fill="#aa0000"/><polygon points="647.8,335.5 655.9,330.3 676.0,335.5" fill="url(#cyl)"/><line x1="654.5" y1="328.6" x2="676.0" y2="335.5" stroke="#ff1010" stroke-width="1.1"/><polygon points="645.2,338.8 653.2,344.0 653.9,362.9" fill="url(#cyl)"/><line x1="654.5" y1="342.4" x2="653.9" y2="362.9" stroke="#ff1010" stroke-width="1.1"/><polygon points="640.9,337.5 637.8,346.0 618.1,352.4" fill="url(#cyl)"/><line x1="640.0" y1="346.6" x2="618.1" y2="352.4" stroke="#ff1010" stroke-width="1.1"/><polygon points="640.9,333.5 631.0,333.4 618.1,318.6" fill="url(#cyl)"/><line x1="631.0" y1="335.5" x2="618.1" y2="318.6" stroke="#ff1010" stroke-width="1.1"/><polygon points="645.2,332.2 642.2,323.7 653.9,308.1" fill="url(#cyl)"/><line x1="640.0" y1="324.4" x2="653.9" y2="308.1" stroke="#ff1010" stroke-width="1.1"/><line x1="644.0" y1="335.5" x2="676.0" y2="335.5" stroke="#ff1010" stroke-width="1.0"/><line x1="644.0" y1="335.5" x2="653.9" y2="362.9" stroke="#ff1010" stroke-width="1.0"/><line x1="640.1" y1="338.0" x2="623.3" y2="349.0" stroke="#5a0000" stroke-width="1.4"/><line x1="640.1" y1="333.0" x2="623.3" y2="322.0" stroke="#5a0000" stroke-width="1.4"/><line x1="644.0" y1="335.5" x2="653.9" y2="308.1" stroke="#ff1010" stroke-width="1.0"/></g>
<g><polygon points="828.6,337.3 835.1,321.0 826.1,321.0 819.6,337.3" fill="#ff0000"/><polygon points="818.5,365.3 824.5,348.4 815.5,348.4 809.5,365.3" fill="#ff0000"/><polygon points="845.3,348.4 835.4,355.3 835.1,375.8 828.6,359.5 818.5,365.3 824.5,348.4 818.5,331.5 828.6,337.3 835.1,321.0 835.4,341.5" fill="#500000"/><polygon points="832.3,348.4 837.2,346.3 845.3,348.4" fill="url(#cyl)"/><polygon points="832.3,348.4 837.2,346.3 845.3,348.4" fill="#3a0000" fill-opacity="0.90"/><line x1="835.4" y1="341.5" x2="845.3" y2="348.4" stroke="#900000" stroke-width="1.1"/><polygon points="831.0,351.7 833.6,360.0 835.1,375.8" fill="url(#cyl)"/><polygon points="831.0,351.7 833.6,360.0 835.1,375.8" fill="#3a0000" fill-opacity="0.90"/><line x1="835.4" y1="355.3" x2="835.1" y2="375.8" stroke="#900000" stroke-width="1.1"/><polygon points="829.1,350.4 825.7,357.7 818.5,365.3" fill="url(#cyl)"/><polygon points="829.1,350.4 825.7,357.7 818.5,365.3" fill="#3a0000" fill-opacity="0.90"/><line x1="828.6" y1="359.5" x2="818.5" y2="365.3" stroke="#900000" stroke-width="1.1"/><polygon points="829.1,346.4 824.5,342.5 818.5,331.5" fill="url(#cyl)"/><polygon points="829.1,346.4 824.5,342.5 818.5,331.5" fill="#3a0000" fill-opacity="0.90"/><line x1="824.5" y1="348.4" x2="818.5" y2="331.5" stroke="#900000" stroke-width="1.1"/><polygon points="831.0,345.1 831.5,335.5 835.1,321.0" fill="url(#cyl)"/><polygon points="831.0,345.1 831.5,335.5 835.1,321.0" fill="#3a0000" fill-opacity="0.90"/><line x1="828.6" y1="337.3" x2="835.1" y2="321.0" stroke="#900000" stroke-width="1.1"/><line x1="830.5" y1="348.4" x2="845.3" y2="348.4" stroke="#900000" stroke-width="1.0"/><line x1="830.5" y1="348.4" x2="835.1" y2="375.8" stroke="#900000" stroke-width="1.0"/><line x1="830.5" y1="348.4" x2="818.5" y2="365.3" stroke="#900000" stroke-width="1.0"/><line x1="830.5" y1="348.4" x2="818.5" y2="331.5" stroke="#900000" stroke-width="1.0"/><line x1="830.5" y1="348.4" x2="835.1" y2="321.0" stroke="#900000" stroke-width="1.0"/></g>
<g><polygon points="525.0,335.4 525.5,355.9 534.5,355.9 534.0,335.4" fill="#380000"/><polygon points="525.5,369.7 525.0,390.2 534.0,390.2 534.5,369.7" fill="#380000"/><polygon points="542.7,362.8 525.5,369.7 525.0,390.2 513.9,373.9 496.4,379.7 506.7,362.8 496.4,345.9 513.9,351.7 525.0,335.4 525.5,355.9" fill="#c80000"/><polygon points="520.2,362.8 528.6,360.7 542.7,362.8" fill="url(#cyl)"/><line x1="525.5" y1="355.9" x2="542.7" y2="362.8" stroke="#ff1010" stroke-width="1.1"/><polygon points="518.0,366.1 522.4,374.4 525.0,390.2" fill="url(#cyl)"/><line x1="525.5" y1="369.7" x2="525.0" y2="390.2" stroke="#ff1010" stroke-width="1.1"/><polygon points="514.6,364.8 508.9,372.1 496.4,379.7" fill="url(#cyl)"/><line x1="513.9" y1="373.9" x2="496.4" y2="379.7" stroke="#ff1010" stroke-width="1.1"/><polygon points="514.6,360.8 506.7,356.9 496.4,345.9" fill="url(#cyl)"/><line x1="506.7" y1="362.8" x2="496.4" y2="345.9" stroke="#ff1010" stroke-width="1.1"/><polygon points="518.0,359.5 518.9,349.9 525.0,335.4" fill="url(#cyl)"/><line x1="513.9" y1="351.7" x2="525.0" y2="335.4" stroke="#ff1010" stroke-width="1.1"/><line x1="517.1" y1="362.8" x2="542.7" y2="362.8" stroke="#ff1010" stroke-width="1.0"/><line x1="517.1" y1="362.8" x2="525.0" y2="390.2" stroke="#ff1010" stroke-width="1.0"/><line x1="514.0" y1="365.3" x2="500.5" y2="376.3" stroke="#5a0000" stroke-width="1.4"/><line x1="514.0" y1="360.3" x2="500.5" y2="349.3" stroke="#5a0000" stroke-width="1.4"/><line x1="517.1" y1="362.8" x2="525.0" y2="335.4" stroke="#ff1010" stroke-width="1.0"/></g>
<g><polygon points="776.1,352.9 787.2,336.6 778.2,336.6 767.1,352.9" fill="#ff0000"/><polygon points="758.7,380.9 768.9,364.0 759.9,364.0 749.7,380.9" fill="#ff0000"/><polygon points="804.8,364.0 787.7,370.9 787.2,391.4 776.1,375.1 758.7,380.9 768.9,364.0 758.7,347.1 776.1,352.9 787.2,336.6 787.7,357.1" fill="#610000"/><polygon points="782.4,364.0 790.7,361.9 804.8,364.0" fill="url(#cyl)"/><polygon points="782.4,364.0 790.7,361.9 804.8,364.0" fill="#3a0000" fill-opacity="0.90"/><line x1="787.7" y1="357.1" x2="804.8" y2="364.0" stroke="#c00000" stroke-width="1.1"/><polygon points="780.2,367.3 784.6,375.6 787.2,391.4" fill="url(#cyl)"/><polygon points="780.2,367.3 784.6,375.6 787.2,391.4" fill="#3a0000" fill-opacity="0.90"/><line x1="787.7" y1="370.9" x2="787.2" y2="391.4" stroke="#c00000" stroke-width="1.1"/><polygon points="776.8,366.0 771.1,373.3 758.7,380.9" fill="url(#cyl)"/><polygon points="776.8,366.0 771.1,373.3 758.7,380.9" fill="#3a0000" fill-opacity="0.90"/><line x1="776.1" y1="375.1" x2="758.7" y2="380.9" stroke="#c00000" stroke-width="1.1"/><polygon points="776.8,362.0 769.0,358.1 758.7,347.1" fill="url(#cyl)"/><polygon points="776.8,362.0 769.0,358.1 758.7,347.1" fill="#3a0000" fill-opacity="0.90"/><line x1="768.9" y1="364.0" x2="758.7" y2="347.1" stroke="#c00000" stroke-width="1.1"/><polygon points="780.2,360.7 781.1,351.1 787.2,336.6" fill="url(#cyl)"/><polygon points="780.2,360.7 781.1,351.1 787.2,336.6" fill="#3a0000" fill-opacity="0.90"/><line x1="776.1" y1="352.9" x2="787.2" y2="336.6" stroke="#c00000" stroke-width="1.1"/><line x1="779.3" y1="364.0" x2="804.8" y2="364.0" stroke="#c00000" stroke-width="1.0"/><line x1="779.3" y1="364.0" x2="787.2" y2="391.4" stroke="#c00000" stroke-width="1.0"/><line x1="779.3" y1="364.0" x2="758.7" y2="380.9" stroke="#c00000" stroke-width="1.0"/><line x1="779.3" y1="364.0" x2="758.7" y2="347.1" stroke="#c00000" stroke-width="1.0"/><line x1="779.3" y1="364.0" x2="787.2" y2="336.6" stroke="#c00000" stroke-width="1.0"/></g>
<g><polygon points="608.3,344.8 609.0,365.3 615.3,365.3 614.7,344.8" fill="#380000"/><polygon points="609.0,379.1 608.3,399.6 614.7,399.6 615.3,379.1" fill="#380000"/><polygon points="629.9,372.2 609.0,379.1 608.3,399.6 594.8,383.3 573.4,389.1 586.0,372.2 573.4,355.3 594.8,361.1 608.3,344.8 609.0,365.3" fill="#b50000"/><polygon points="602.4,372.2 612.7,370.1 629.9,372.2" fill="url(#cyl)"/><line x1="609.0" y1="365.3" x2="629.9" y2="372.2" stroke="#ff1010" stroke-width="1.1"/><polygon points="599.9,375.5 605.2,383.8 608.3,399.6" fill="url(#cyl)"/><line x1="609.0" y1="379.1" x2="608.3" y2="399.6" stroke="#ff1010" stroke-width="1.1"/><polygon points="595.7,374.2 588.7,381.5 573.4,389.1" fill="url(#cyl)"/><line x1="594.8" y1="383.3" x2="573.4" y2="389.1" stroke="#ff1010" stroke-width="1.1"/><polygon points="595.7,370.2 586.1,366.3 573.4,355.3" fill="url(#cyl)"/><line x1="586.0" y1="372.2" x2="573.4" y2="355.3" stroke="#ff1010" stroke-width="1.1"/><polygon points="599.9,368.9 600.9,359.3 608.3,344.8" fill="url(#cyl)"/><line x1="594.8" y1="361.1" x2="608.3" y2="344.8" stroke="#ff1010" stroke-width="1.1"/><line x1="598.7" y1="372.2" x2="629.9" y2="372.2" stroke="#ff1010" stroke-width="1.0"/><line x1="598.7" y1="372.2" x2="608.3" y2="399.6" stroke="#ff1010" stroke-width="1.0"/><line x1="594.9" y1="374.7" x2="578.5" y2="385.7" stroke="#5a0000" stroke-width="1.4"/><line x1="594.9" y1="369.7" x2="578.5" y2="358.7" stroke="#5a0000" stroke-width="1.4"/><line x1="598.7" y1="372.2" x2="608.3" y2="344.8" stroke="#ff1010" stroke-width="1.0"/></g>
<g><polygon points="693.8,362.3 707.3,346.0 701.0,346.0 687.4,362.3" fill="#ff0000"/><polygon points="672.5,390.3 685.0,373.4 678.6,373.4 666.1,390.3" fill="#ff0000"/><polygon points="728.9,373.4 708.0,380.3 707.3,400.8 693.8,384.5 672.5,390.3 685.0,373.4 672.5,356.5 693.8,362.3 707.3,346.0 708.0,366.5" fill="#910000"/><polygon points="701.4,373.4 711.7,371.3 728.9,373.4" fill="url(#cyl)"/><polygon points="701.4,373.4 711.7,371.3 728.9,373.4" fill="#3a0000" fill-opacity="0.01"/><line x1="708.0" y1="366.5" x2="728.9" y2="373.4" stroke="#ff0000" stroke-width="1.1"/><polygon points="698.9,376.7 704.2,385.0 707.3,400.8" fill="url(#cyl)"/><polygon points="698.9,376.7 704.2,385.0 707.3,400.8" fill="#3a0000" fill-opacity="0.01"/><line x1="708.0" y1="380.3" x2="707.3" y2="400.8" stroke="#ff0000" stroke-width="1.1"/><polygon points="694.7,375.4 687.7,382.7 672.5,390.3" fill="url(#cyl)"/><polygon points="694.7,375.4 687.7,382.7 672.5,390.3" fill="#3a0000" fill-opacity="0.01"/><line x1="693.8" y1="384.5" x2="672.5" y2="390.3" stroke="#ff0000" stroke-width="1.1"/><polygon points="694.7,371.4 685.1,367.5 672.5,356.5" fill="url(#cyl)"/><polygon points="694.7,371.4 685.1,367.5 672.5,356.5" fill="#3a0000" fill-opacity="0.01"/><line x1="685.0" y1="373.4" x2="672.5" y2="356.5" stroke="#ff0000" stroke-width="1.1"/><polygon points="698.9,370.1 699.9,360.5 707.3,346.0" fill="url(#cyl)"/><polygon points="698.9,370.1 699.9,360.5 707.3,346.0" fill="#3a0000" fill-opacity="0.01"/><line x1="693.8" y1="362.3" x2="707.3" y2="346.0" stroke="#ff0000" stroke-width="1.1"/><line x1="697.7" y1="373.4" x2="728.9" y2="373.4" stroke="#ff0000" stroke-width="1.0"/><line x1="697.7" y1="373.4" x2="707.3" y2="400.8" stroke="#ff0000" stroke-width="1.0"/><line x1="697.7" y1="373.4" x2="672.5" y2="390.3" stroke="#ff0000" stroke-width="1.0"/><line x1="697.7" y1="373.4" x2="672.5" y2="356.5" stroke="#ff0000" stroke-width="1.0"/><line x1="697.7" y1="373.4" x2="707.3" y2="346.0" stroke="#ff0000" stroke-width="1.0"/></g>
<g><polygon points="494.3,363.6 494.7,384.1 503.7,384.1 503.3,363.6" fill="#380000"/><polygon points="494.7,397.9 494.3,418.4 503.3,418.4 503.7,397.9" fill="#380000"/><polygon points="508.7,391.0 494.7,397.9 494.3,418.4 485.2,402.1 470.9,407.9 479.3,391.0 470.9,374.1 485.2,379.9 494.3,363.6 494.7,384.1" fill="#cf0000"/><polygon points="490.3,391.0 497.2,388.9 508.7,391.0" fill="url(#cyl)"/><line x1="494.7" y1="384.1" x2="508.7" y2="391.0" stroke="#ff1010" stroke-width="1.1"/><polygon points="488.6,394.3 492.1,402.6 494.3,418.4" fill="url(#cyl)"/><line x1="494.7" y1="397.9" x2="494.3" y2="418.4" stroke="#ff1010" stroke-width="1.1"/><polygon points="485.8,393.0 481.1,400.3 470.9,407.9" fill="url(#cyl)"/><line x1="485.2" y1="402.1" x2="470.9" y2="407.9" stroke="#ff1010" stroke-width="1.1"/><polygon points="485.8,389.0 479.3,385.1 470.9,374.1" fill="url(#cyl)"/><line x1="479.3" y1="391.0" x2="470.9" y2="374.1" stroke="#ff1010" stroke-width="1.1"/><polygon points="488.6,387.7 489.3,378.1 494.3,363.6" fill="url(#cyl)"/><line x1="485.2" y1="379.9" x2="494.3" y2="363.6" stroke="#ff1010" stroke-width="1.1"/><line x1="487.8" y1="391.0" x2="508.7" y2="391.0" stroke="#ff1010" stroke-width="1.0"/><line x1="487.8" y1="391.0" x2="494.3" y2="418.4" stroke="#ff1010" stroke-width="1.0"/><line x1="485.3" y1="393.5" x2="474.3" y2="404.5" stroke="#5a0000" stroke-width="1.4"/><line x1="485.3" y1="388.5" x2="474.3" y2="377.5" stroke="#5a0000" stroke-width="1.4"/><line x1="487.8" y1="391.0" x2="494.3" y2="363.6" stroke="#ff1010" stroke-width="1.0"/></g>
<g><polygon points="805.7,380.7 814.8,364.4 805.8,364.4 796.7,380.7" fill="#ff0000"/><polygon points="791.4,408.7 799.8,391.8 790.8,391.8 782.4,408.7" fill="#ff0000"/><polygon points="829.2,391.8 815.2,398.7 814.8,419.2 805.7,402.9 791.4,408.7 799.8,391.8 791.4,374.9 805.7,380.7 814.8,364.4 815.2,384.9" fill="#500000"/><polygon points="810.8,391.8 817.7,389.7 829.2,391.8" fill="url(#cyl)"/><polygon points="810.8,391.8 817.7,389.7 829.2,391.8" fill="#3a0000" fill-opacity="0.90"/><line x1="815.2" y1="384.9" x2="829.2" y2="391.8" stroke="#c00000" stroke-width="1.1"/><polygon points="809.1,395.1 812.6,403.4 814.8,419.2" fill="url(#cyl)"/><polygon points="809.1,395.1 812.6,403.4 814.8,419.2" fill="#3a0000" fill-opacity="0.90"/><line x1="815.2" y1="398.7" x2="814.8" y2="419.2" stroke="#c00000" stroke-width="1.1"/><polygon points="806.3,393.8 801.6,401.1 791.4,408.7" fill="url(#cyl)"/><polygon points="806.3,393.8 801.6,401.1 791.4,408.7" fill="#3a0000" fill-opacity="0.90"/><line x1="805.7" y1="402.9" x2="791.4" y2="408.7" stroke="#c00000" stroke-width="1.1"/><polygon points="806.3,389.8 799.8,385.9 791.4,374.9" fill="url(#cyl)"/><polygon points="806.3,389.8 799.8,385.9 791.4,374.9" fill="#3a0000" fill-opacity="0.90"/><line x1="799.8" y1="391.8" x2="791.4" y2="374.9" stroke="#c00000" stroke-width="1.1"/><polygon points="809.1,388.5 809.8,378.9 814.8,364.4" fill="url(#cyl)"/><polygon points="809.1,388.5 809.8,378.9 814.8,364.4" fill="#3a0000" fill-opacity="0.90"/><line x1="805.7" y1="380.7" x2="814.8" y2="364.4" stroke="#c00000" stroke-width="1.1"/><line x1="808.3" y1="391.8" x2="829.2" y2="391.8" stroke="#c00000" stroke-width="1.0"/><line x1="808.3" y1="391.8" x2="814.8" y2="419.2" stroke="#c00000" stroke-width="1.0"/><line x1="808.3" y1="391.8" x2="791.4" y2="408.7" stroke="#c00000" stroke-width="1.0"/><line x1="808.3" y1="391.8" x2="791.4" y2="374.9" stroke="#c00000" stroke-width="1.0"/><line x1="808.3" y1="391.8" x2="814.8" y2="364.4" stroke="#c00000" stroke-width="1.0"/></g>
<g><polygon points="566.9,375.6 567.5,396.1 576.5,396.1 575.9,375.6" fill="#380000"/><polygon points="567.5,409.9 566.9,430.4 575.9,430.4 576.5,409.9" fill="#380000"/><polygon points="587.1,403.0 567.5,409.9 566.9,430.4 554.2,414.1 534.3,419.9 546.0,403.0 534.3,386.1 554.2,391.9 566.9,375.6 567.5,396.1" fill="#be0000"/><polygon points="561.4,403.0 571.0,400.9 587.1,403.0" fill="url(#cyl)"/><line x1="567.5" y1="396.1" x2="587.1" y2="403.0" stroke="#ff1010" stroke-width="1.1"/><polygon points="559.0,406.3 563.9,414.6 566.9,430.4" fill="url(#cyl)"/><line x1="567.5" y1="409.9" x2="566.9" y2="430.4" stroke="#ff1010" stroke-width="1.1"/><polygon points="555.1,405.0 548.5,412.3 534.3,419.9" fill="url(#cyl)"/><line x1="554.2" y1="414.1" x2="534.3" y2="419.9" stroke="#ff1010" stroke-width="1.1"/><polygon points="555.1,401.0 546.1,397.1 534.3,386.1" fill="url(#cyl)"/><line x1="546.0" y1="403.0" x2="534.3" y2="386.1" stroke="#ff1010" stroke-width="1.1"/><polygon points="559.0,399.7 560.0,390.1 566.9,375.6" fill="url(#cyl)"/><line x1="554.2" y1="391.9" x2="566.9" y2="375.6" stroke="#ff1010" stroke-width="1.1"/><line x1="557.9" y1="403.0" x2="587.1" y2="403.0" stroke="#ff1010" stroke-width="1.0"/><line x1="557.9" y1="403.0" x2="566.9" y2="430.4" stroke="#ff1010" stroke-width="1.0"/><line x1="554.4" y1="405.5" x2="539.0" y2="416.5" stroke="#5a0000" stroke-width="1.4"/><line x1="554.4" y1="400.5" x2="539.0" y2="389.5" stroke="#5a0000" stroke-width="1.4"/><line x1="557.9" y1="403.0" x2="566.9" y2="375.6" stroke="#ff1010" stroke-width="1.0"/></g>
<g><polygon points="738.8,394.4 751.3,378.1 742.3,378.1 729.8,394.4" fill="#ff0000"/><polygon points="719.0,422.4 730.7,405.5 721.7,405.5 710.0,422.4" fill="#ff0000"/><polygon points="771.3,405.5 751.9,412.4 751.3,432.9 738.8,416.6 719.0,422.4 730.7,405.5 719.0,388.6 738.8,394.4 751.3,378.1 751.9,398.6" fill="#770000"/><polygon points="745.9,405.5 755.4,403.4 771.3,405.5" fill="url(#cyl)"/><polygon points="745.9,405.5 755.4,403.4 771.3,405.5" fill="#3a0000" fill-opacity="0.52"/><line x1="751.9" y1="398.6" x2="771.3" y2="405.5" stroke="#ff0000" stroke-width="1.1"/><polygon points="743.5,408.8 748.4,417.1 751.3,432.9" fill="url(#cyl)"/><polygon points="743.5,408.8 748.4,417.1 751.3,432.9" fill="#3a0000" fill-opacity="0.52"/><line x1="751.9" y1="412.4" x2="751.3" y2="432.9" stroke="#ff0000" stroke-width="1.1"/><polygon points="739.6,407.5 733.1,414.8 719.0,422.4" fill="url(#cyl)"/><polygon points="739.6,407.5 733.1,414.8 719.0,422.4" fill="#3a0000" fill-opacity="0.52"/><line x1="738.8" y1="416.6" x2="719.0" y2="422.4" stroke="#ff0000" stroke-width="1.1"/><polygon points="739.6,403.5 730.7,399.6 719.0,388.6" fill="url(#cyl)"/><polygon points="739.6,403.5 730.7,399.6 719.0,388.6" fill="#3a0000" fill-opacity="0.52"/><line x1="730.7" y1="405.5" x2="719.0" y2="388.6" stroke="#ff0000" stroke-width="1.1"/><polygon points="743.5,402.2 744.4,392.6 751.3,378.1" fill="url(#cyl)"/><polygon points="743.5,402.2 744.4,392.6 751.3,378.1" fill="#3a0000" fill-opacity="0.52"/><line x1="738.8" y1="394.4" x2="751.3" y2="378.1" stroke="#ff0000" stroke-width="1.1"/><line x1="742.4" y1="405.5" x2="771.3" y2="405.5" stroke="#ff0000" stroke-width="1.0"/><line x1="742.4" y1="405.5" x2="751.3" y2="432.9" stroke="#ff0000" stroke-width="1.0"/><line x1="742.4" y1="405.5" x2="719.0" y2="422.4" stroke="#ff0000" stroke-width="1.0"/><line x1="742.4" y1="405.5" x2="719.0" y2="388.6" stroke="#ff0000" stroke-width="1.0"/><line x1="742.4" y1="405.5" x2="751.3" y2="378.1" stroke="#ff0000" stroke-width="1.0"/></g>
<g><polygon points="646.5,398.8 660.4,382.5 660.1,382.5 646.2,398.8" fill="#ff0000"/><polygon points="624.6,426.8 637.5,409.9 637.2,409.9 624.3,426.8" fill="#ff0000"/><polygon points="682.5,409.9 661.0,416.8 660.4,437.3 646.5,421.0 624.6,426.8 637.5,409.9 624.6,393.0 646.5,398.8 660.4,382.5 661.0,403.0" fill="#ad0000"/><polygon points="654.3,409.9 662.3,404.6 682.5,409.9" fill="url(#cyl)"/><line x1="661.0" y1="403.0" x2="682.5" y2="409.9" stroke="#ff0000" stroke-width="1.1"/><polygon points="651.7,413.2 659.7,418.3 660.4,437.3" fill="url(#cyl)"/><line x1="661.0" y1="416.8" x2="660.4" y2="437.3" stroke="#ff0000" stroke-width="1.1"/><polygon points="647.4,411.9 644.4,420.4 624.6,426.8" fill="url(#cyl)"/><line x1="646.5" y1="421.0" x2="624.6" y2="426.8" stroke="#ff0000" stroke-width="1.1"/><polygon points="647.4,407.9 637.5,408.0 624.6,393.0" fill="url(#cyl)"/><line x1="637.5" y1="409.9" x2="624.6" y2="393.0" stroke="#ff0000" stroke-width="1.1"/><polygon points="651.7,406.6 648.5,398.2 660.4,382.5" fill="url(#cyl)"/><line x1="646.5" y1="398.8" x2="660.4" y2="382.5" stroke="#ff0000" stroke-width="1.1"/><line x1="650.5" y1="409.9" x2="682.5" y2="409.9" stroke="#ff0000" stroke-width="1.0"/><line x1="650.5" y1="409.9" x2="660.4" y2="437.3" stroke="#ff0000" stroke-width="1.0"/><line x1="646.6" y1="412.4" x2="629.8" y2="423.4" stroke="#5a0000" stroke-width="1.4"/><line x1="646.6" y1="407.4" x2="629.8" y2="396.4" stroke="#5a0000" stroke-width="1.4"/><line x1="650.5" y1="409.9" x2="660.4" y2="382.5" stroke="#ff0000" stroke-width="1.0"/></g>
<g><polygon points="828.7,402.9 834.9,386.6 825.9,386.6 819.7,402.9" fill="#ff0000"/><polygon points="819.0,430.9 824.7,414.0 815.7,414.0 810.0,430.9" fill="#ff0000"/><polygon points="844.7,414.0 835.2,420.9 834.9,441.4 828.7,425.1 819.0,430.9 824.7,414.0 819.0,397.1 828.7,402.9 834.9,386.6 835.2,407.1" fill="#500000"/><polygon points="832.2,414.0 836.9,411.9 844.7,414.0" fill="url(#cyl)"/><polygon points="832.2,414.0 836.9,411.9 844.7,414.0" fill="#3a0000" fill-opacity="0.90"/><line x1="835.2" y1="407.1" x2="844.7" y2="414.0" stroke="#900000" stroke-width="1.1"/><polygon points="831.0,417.3 833.4,425.6 834.9,441.4" fill="url(#cyl)"/><polygon points="831.0,417.3 833.4,425.6 834.9,441.4" fill="#3a0000" fill-opacity="0.90"/><line x1="835.2" y1="420.9" x2="834.9" y2="441.4" stroke="#900000" stroke-width="1.1"/><polygon points="829.1,416.0 826.0,423.3 819.0,430.9" fill="url(#cyl)"/><polygon points="829.1,416.0 826.0,423.3 819.0,430.9" fill="#3a0000" fill-opacity="0.90"/><line x1="828.7" y1="425.1" x2="819.0" y2="430.9" stroke="#900000" stroke-width="1.1"/><polygon points="829.1,412.0 824.8,408.1 819.0,397.1" fill="url(#cyl)"/><polygon points="829.1,412.0 824.8,408.1 819.0,397.1" fill="#3a0000" fill-opacity="0.90"/><line x1="824.7" y1="414.0" x2="819.0" y2="397.1" stroke="#900000" stroke-width="1.1"/><polygon points="831.0,410.7 831.5,401.1 834.9,386.6" fill="url(#cyl)"/><polygon points="831.0,410.7 831.5,401.1 834.9,386.6" fill="#3a0000" fill-opacity="0.90"/><line x1="828.7" y1="402.9" x2="834.9" y2="386.6" stroke="#900000" stroke-width="1.1"/><line x1="830.5" y1="414.0" x2="844.7" y2="414.0" stroke="#900000" stroke-width="1.0"/><line x1="830.5" y1="414.0" x2="834.9" y2="441.4" stroke="#900000" stroke-width="1.0"/><line x1="830.5" y1="414.0" x2="819.0" y2="430.9" stroke="#900000" stroke-width="1.0"/><line x1="830.5" y1="414.0" x2="819.0" y2="397.1" stroke="#900000" stroke-width="1.0"/><line x1="830.5" y1="414.0" x2="834.9" y2="386.6" stroke="#900000" stroke-width="1.0"/></g>
<g><polygon points="530.0,402.6 530.6,423.1 539.6,423.1 539.0,402.6" fill="#380000"/><polygon points="530.6,436.9 530.0,457.4 539.0,457.4 539.6,436.9" fill="#380000"/><polygon points="548.0,430.0 530.6,436.9 530.0,457.4 518.7,441.1 501.0,446.9 511.4,430.0 501.0,413.1 518.7,418.9 530.0,402.6 530.6,423.1" fill="#c70000"/><polygon points="525.1,430.0 533.7,427.9 548.0,430.0" fill="url(#cyl)"/><line x1="530.6" y1="423.1" x2="548.0" y2="430.0" stroke="#ff1010" stroke-width="1.1"/><polygon points="523.0,433.3 527.4,441.6 530.0,457.4" fill="url(#cyl)"/><line x1="530.6" y1="436.9" x2="530.0" y2="457.4" stroke="#ff1010" stroke-width="1.1"/><polygon points="519.5,432.0 513.7,439.3 501.0,446.9" fill="url(#cyl)"/><line x1="518.7" y1="441.1" x2="501.0" y2="446.9" stroke="#ff1010" stroke-width="1.1"/><polygon points="519.5,428.0 511.5,424.1 501.0,413.1" fill="url(#cyl)"/><line x1="511.4" y1="430.0" x2="501.0" y2="413.1" stroke="#ff1010" stroke-width="1.1"/><polygon points="523.0,426.7 523.8,417.1 530.0,402.6" fill="url(#cyl)"/><line x1="518.7" y1="418.9" x2="530.0" y2="402.6" stroke="#ff1010" stroke-width="1.1"/><line x1="522.0" y1="430.0" x2="548.0" y2="430.0" stroke="#ff1010" stroke-width="1.0"/><line x1="522.0" y1="430.0" x2="530.0" y2="457.4" stroke="#ff1010" stroke-width="1.0"/><line x1="518.8" y1="432.5" x2="505.2" y2="443.5" stroke="#5a0000" stroke-width="1.4"/><line x1="518.8" y1="427.5" x2="505.2" y2="416.5" stroke="#5a0000" stroke-width="1.4"/><line x1="522.0" y1="430.0" x2="530.0" y2="402.6" stroke="#ff1010" stroke-width="1.0"/></g>
<g><polygon points="778.9,420.2 789.7,403.9 780.7,403.9 769.9,420.2" fill="#ff0000"/><polygon points="761.7,448.2 771.8,431.3 762.8,431.3 752.7,448.2" fill="#ff0000"/><polygon points="807.0,431.3 790.2,438.2 789.7,458.7 778.9,442.4 761.7,448.2 771.8,431.3 761.7,414.4 778.9,420.2 789.7,403.9 790.2,424.4" fill="#5f0000"/><polygon points="785.0,431.3 793.2,429.2 807.0,431.3" fill="url(#cyl)"/><polygon points="785.0,431.3 793.2,429.2 807.0,431.3" fill="#3a0000" fill-opacity="0.90"/><line x1="790.2" y1="424.4" x2="807.0" y2="431.3" stroke="#c00000" stroke-width="1.1"/><polygon points="782.9,434.6 787.2,442.9 789.7,458.7" fill="url(#cyl)"/><polygon points="782.9,434.6 787.2,442.9 789.7,458.7" fill="#3a0000" fill-opacity="0.90"/><line x1="790.2" y1="438.2" x2="789.7" y2="458.7" stroke="#c00000" stroke-width="1.1"/><polygon points="779.6,433.3 774.0,440.6 761.7,448.2" fill="url(#cyl)"/><polygon points="779.6,433.3 774.0,440.6 761.7,448.2" fill="#3a0000" fill-opacity="0.90"/><line x1="778.9" y1="442.4" x2="761.7" y2="448.2" stroke="#c00000" stroke-width="1.1"/><polygon points="779.6,429.3 771.9,425.4 761.7,414.4" fill="url(#cyl)"/><polygon points="779.6,429.3 771.9,425.4 761.7,414.4" fill="#3a0000" fill-opacity="0.90"/><line x1="771.8" y1="431.3" x2="761.7" y2="414.4" stroke="#c00000" stroke-width="1.1"/><polygon points="782.9,428.0 783.8,418.4 789.7,403.9" fill="url(#cyl)"/><polygon points="782.9,428.0 783.8,418.4 789.7,403.9" fill="#3a0000" fill-opacity="0.90"/><line x1="778.9" y1="420.2" x2="789.7" y2="403.9" stroke="#c00000" stroke-width="1.1"/><line x1="782.0" y1="431.3" x2="807.0" y2="431.3" stroke="#c00000" stroke-width="1.0"/><line x1="782.0" y1="431.3" x2="789.7" y2="458.7" stroke="#c00000" stroke-width="1.0"/><line x1="782.0" y1="431.3" x2="761.7" y2="448.2" stroke="#c00000" stroke-width="1.0"/><line x1="782.0" y1="431.3" x2="761.7" y2="414.4" stroke="#c00000" stroke-width="1.0"/><line x1="782.0" y1="431.3" x2="789.7" y2="403.9" stroke="#c00000" stroke-width="1.0"/></g>
<g><polygon points="696.1,432.9 709.6,416.6 702.9,416.6 689.4,432.9" fill="#ff0000"/><polygon points="674.8,460.9 687.4,444.0 680.6,444.0 668.1,460.9" fill="#ff0000"/><polygon points="731.1,444.0 710.2,450.9 709.6,471.4 696.1,455.1 674.8,460.9 687.4,444.0 674.8,427.1 696.1,432.9 709.6,416.6 710.2,437.1" fill="#900000"/><polygon points="703.7,444.0 714.0,441.9 731.1,444.0" fill="url(#cyl)"/><polygon points="703.7,444.0 714.0,441.9 731.1,444.0" fill="#3a0000" fill-opacity="0.04"/><line x1="710.2" y1="437.1" x2="731.1" y2="444.0" stroke="#ff0000" stroke-width="1.1"/><polygon points="701.2,447.3 706.4,455.6 709.6,471.4" fill="url(#cyl)"/><polygon points="701.2,447.3 706.4,455.6 709.6,471.4" fill="#3a0000" fill-opacity="0.04"/><line x1="710.2" y1="450.9" x2="709.6" y2="471.4" stroke="#ff0000" stroke-width="1.1"/><polygon points="697.0,446.0 690.0,453.3 674.8,460.9" fill="url(#cyl)"/><polygon points="697.0,446.0 690.0,453.3 674.8,460.9" fill="#3a0000" fill-opacity="0.04"/><line x1="696.1" y1="455.1" x2="674.8" y2="460.9" stroke="#ff0000" stroke-width="1.1"/><polygon points="697.0,442.0 687.4,438.1 674.8,427.1" fill="url(#cyl)"/><polygon points="697.0,442.0 687.4,438.1 674.8,427.1" fill="#3a0000" fill-opacity="0.04"/><line x1="687.4" y1="444.0" x2="674.8" y2="427.1" stroke="#ff0000" stroke-width="1.1"/><polygon points="701.2,440.7 702.2,431.1 709.6,416.6" fill="url(#cyl)"/><polygon points="701.2,440.7 702.2,431.1 709.6,416.6" fill="#3a0000" fill-opacity="0.04"/><line x1="696.1" y1="432.9" x2="709.6" y2="416.6" stroke="#ff0000" stroke-width="1.1"/><line x1="700.0" y1="444.0" x2="731.1" y2="444.0" stroke="#ff0000" stroke-width="1.0"/><line x1="700.0" y1="444.0" x2="709.6" y2="471.4" stroke="#ff0000" stroke-width="1.0"/><line x1="700.0" y1="444.0" x2="674.8" y2="460.9" stroke="#ff0000" stroke-width="1.0"/><line x1="700.0" y1="444.0" x2="674.8" y2="427.1" stroke="#ff0000" stroke-width="1.0"/><line x1="700.0" y1="444.0" x2="709.6" y2="416.6" stroke="#ff0000" stroke-width="1.0"/></g>
<g><polygon points="617.9,417.2 618.5,437.7 623.7,437.7 623.1,417.2" fill="#380000"/><polygon points="618.5,451.5 617.9,472.0 623.1,472.0 623.7,451.5" fill="#380000"/><polygon points="639.7,444.6 618.5,451.5 617.9,472.0 604.2,455.7 582.7,461.5 595.4,444.6 582.7,427.7 604.2,433.5 617.9,417.2 618.5,437.7" fill="#b30000"/><polygon points="612.0,444.6 622.1,442.2 639.7,444.6" fill="url(#cyl)"/><line x1="618.5" y1="437.7" x2="639.7" y2="444.6" stroke="#ff1010" stroke-width="1.1"/><polygon points="609.4,447.9 615.0,455.9 617.9,472.0" fill="url(#cyl)"/><line x1="618.5" y1="451.5" x2="617.9" y2="472.0" stroke="#ff1010" stroke-width="1.1"/><polygon points="605.1,446.6 598.5,454.0 582.7,461.5" fill="url(#cyl)"/><line x1="604.2" y1="455.7" x2="582.7" y2="461.5" stroke="#ff1010" stroke-width="1.1"/><polygon points="605.1,442.6 595.4,439.1 582.7,427.7" fill="url(#cyl)"/><line x1="595.4" y1="444.6" x2="582.7" y2="427.7" stroke="#ff1010" stroke-width="1.1"/><polygon points="609.4,441.3 610.0,431.8 617.9,417.2" fill="url(#cyl)"/><line x1="604.2" y1="433.5" x2="617.9" y2="417.2" stroke="#ff1010" stroke-width="1.1"/><line x1="608.2" y1="444.6" x2="639.7" y2="444.6" stroke="#ff1010" stroke-width="1.0"/><line x1="608.2" y1="444.6" x2="617.9" y2="472.0" stroke="#ff1010" stroke-width="1.0"/><line x1="604.4" y1="447.1" x2="587.8" y2="458.1" stroke="#5a0000" stroke-width="1.4"/><line x1="604.4" y1="442.1" x2="587.8" y2="431.1" stroke="#5a0000" stroke-width="1.4"/><line x1="608.2" y1="444.6" x2="617.9" y2="417.2" stroke="#ff1010" stroke-width="1.0"/></g>
<g><polygon points="808.5,446.7 817.2,430.4 808.2,430.4 799.5,446.7" fill="#ff0000"/><polygon points="794.8,474.7 802.9,457.8 793.9,457.8 785.8,474.7" fill="#ff0000"/><polygon points="831.0,457.8 817.6,464.7 817.2,485.2 808.5,468.9 794.8,474.7 802.9,457.8 794.8,440.9 808.5,446.7 817.2,430.4 817.6,450.9" fill="#500000"/><polygon points="813.4,457.8 820.0,455.7 831.0,457.8" fill="url(#cyl)"/><polygon points="813.4,457.8 820.0,455.7 831.0,457.8" fill="#3a0000" fill-opacity="0.90"/><line x1="817.6" y1="450.9" x2="831.0" y2="457.8" stroke="#c00000" stroke-width="1.1"/><polygon points="811.7,461.1 815.1,469.4 817.2,485.2" fill="url(#cyl)"/><polygon points="811.7,461.1 815.1,469.4 817.2,485.2" fill="#3a0000" fill-opacity="0.90"/><line x1="817.6" y1="464.7" x2="817.2" y2="485.2" stroke="#c00000" stroke-width="1.1"/><polygon points="809.1,459.8 804.6,467.1 794.8,474.7" fill="url(#cyl)"/><polygon points="809.1,459.8 804.6,467.1 794.8,474.7" fill="#3a0000" fill-opacity="0.90"/><line x1="808.5" y1="468.9" x2="794.8" y2="474.7" stroke="#c00000" stroke-width="1.1"/><polygon points="809.1,455.8 802.9,451.9 794.8,440.9" fill="url(#cyl)"/><polygon points="809.1,455.8 802.9,451.9 794.8,440.9" fill="#3a0000" fill-opacity="0.90"/><line x1="802.9" y1="457.8" x2="794.8" y2="440.9" stroke="#c00000" stroke-width="1.1"/><polygon points="811.7,454.5 812.4,444.9 817.2,430.4" fill="url(#cyl)"/><polygon points="811.7,454.5 812.4,444.9 817.2,430.4" fill="#3a0000" fill-opacity="0.90"/><line x1="808.5" y1="446.7" x2="817.2" y2="430.4" stroke="#c00000" stroke-width="1.1"/><line x1="811.0" y1="457.8" x2="831.0" y2="457.8" stroke="#c00000" stroke-width="1.0"/><line x1="811.0" y1="457.8" x2="817.2" y2="485.2" stroke="#c00000" stroke-width="1.0"/><line x1="811.0" y1="457.8" x2="794.8" y2="474.7" stroke="#c00000" stroke-width="1.0"/><line x1="811.0" y1="457.8" x2="794.8" y2="440.9" stroke="#c00000" stroke-width="1.0"/><line x1="811.0" y1="457.8" x2="817.2" y2="430.4" stroke="#c00000" stroke-width="1.0"/></g>
<g><polygon points="500.5,432.9 501.0,453.4 510.0,453.4 509.5,432.9" fill="#380000"/><polygon points="501.0,467.2 500.5,487.7 509.5,487.7 510.0,467.2" fill="#380000"/><polygon points="515.6,460.3 501.0,467.2 500.5,487.7 491.1,471.4 476.2,477.2 484.9,460.3 476.2,443.4 491.1,449.2 500.5,432.9 501.0,453.4" fill="#ce0000"/><polygon points="496.4,460.3 503.6,458.2 515.6,460.3" fill="url(#cyl)"/><line x1="501.0" y1="453.4" x2="515.6" y2="460.3" stroke="#ff1010" stroke-width="1.1"/><polygon points="494.6,463.6 498.3,471.9 500.5,487.7" fill="url(#cyl)"/><line x1="501.0" y1="467.2" x2="500.5" y2="487.7" stroke="#ff1010" stroke-width="1.1"/><polygon points="491.7,462.3 486.8,469.6 476.2,477.2" fill="url(#cyl)"/><line x1="491.1" y1="471.4" x2="476.2" y2="477.2" stroke="#ff1010" stroke-width="1.1"/><polygon points="491.7,458.3 485.0,454.4 476.2,443.4" fill="url(#cyl)"/><line x1="484.9" y1="460.3" x2="476.2" y2="443.4" stroke="#ff1010" stroke-width="1.1"/><polygon points="494.6,457.0 495.3,447.4 500.5,432.9" fill="url(#cyl)"/><line x1="491.1" y1="449.2" x2="500.5" y2="432.9" stroke="#ff1010" stroke-width="1.1"/><line x1="493.8" y1="460.3" x2="515.6" y2="460.3" stroke="#ff1010" stroke-width="1.0"/><line x1="493.8" y1="460.3" x2="500.5" y2="487.7" stroke="#ff1010" stroke-width="1.0"/><line x1="491.2" y1="462.8" x2="479.7" y2="473.8" stroke="#5a0000" stroke-width="1.4"/><line x1="491.2" y1="457.8" x2="479.7" y2="446.8" stroke="#5a0000" stroke-width="1.4"/><line x1="493.8" y1="460.3" x2="500.5" y2="432.9" stroke="#ff1010" stroke-width="1.0"/></g>
<g><polygon points="743.9,463.9 756.3,447.6 747.3,447.6 734.9,463.9" fill="#ff0000"/><polygon points="724.5,491.9 735.9,475.0 726.9,475.0 715.5,491.9" fill="#ff0000"/><polygon points="776.0,475.0 756.9,481.9 756.3,502.4 743.9,486.1 724.5,491.9 735.9,475.0 724.5,458.1 743.9,463.9 756.3,447.6 756.9,468.1" fill="#730000"/><polygon points="750.9,475.0 760.3,472.9 776.0,475.0" fill="url(#cyl)"/><polygon points="750.9,475.0 760.3,472.9 776.0,475.0" fill="#3a0000" fill-opacity="0.59"/><line x1="756.9" y1="468.1" x2="776.0" y2="475.0" stroke="#c00000" stroke-width="1.1"/><polygon points="748.6,478.3 753.4,486.6 756.3,502.4" fill="url(#cyl)"/><polygon points="748.6,478.3 753.4,486.6 756.3,502.4" fill="#3a0000" fill-opacity="0.59"/><line x1="756.9" y1="481.9" x2="756.3" y2="502.4" stroke="#c00000" stroke-width="1.1"/><polygon points="744.7,477.0 738.4,484.3 724.5,491.9" fill="url(#cyl)"/><polygon points="744.7,477.0 738.4,484.3 724.5,491.9" fill="#3a0000" fill-opacity="0.59"/><line x1="743.9" y1="486.1" x2="724.5" y2="491.9" stroke="#c00000" stroke-width="1.1"/><polygon points="744.7,473.0 736.0,469.1 724.5,458.1" fill="url(#cyl)"/><polygon points="744.7,473.0 736.0,469.1 724.5,458.1" fill="#3a0000" fill-opacity="0.59"/><line x1="735.9" y1="475.0" x2="724.5" y2="458.1" stroke="#c00000" stroke-width="1.1"/><polygon points="748.6,471.7 749.5,462.1 756.3,447.6" fill="url(#cyl)"/><polygon points="748.6,471.7 749.5,462.1 756.3,447.6" fill="#3a0000" fill-opacity="0.59"/><line x1="743.9" y1="463.9" x2="756.3" y2="447.6" stroke="#c00000" stroke-width="1.1"/><line x1="747.5" y1="475.0" x2="776.0" y2="475.0" stroke="#c00000" stroke-width="1.0"/><line x1="747.5" y1="475.0" x2="756.3" y2="502.4" stroke="#c00000" stroke-width="1.0"/><line x1="747.5" y1="475.0" x2="724.5" y2="491.9" stroke="#c00000" stroke-width="1.0"/><line x1="747.5" y1="475.0" x2="724.5" y2="458.1" stroke="#c00000" stroke-width="1.0"/><line x1="747.5" y1="475.0" x2="756.3" y2="447.6" stroke="#c00000" stroke-width="1.0"/></g>
<g><polygon points="572.1,448.8 572.7,469.3 581.7,469.3 581.1,448.8" fill="#380000"/><polygon points="572.7,483.1 572.1,503.6 581.1,503.6 581.7,483.1" fill="#380000"/><polygon points="592.5,476.2 572.7,483.1 572.1,503.6 559.3,487.3 539.1,493.1 551.0,476.2 539.1,459.3 559.3,465.1 572.1,448.8 572.7,469.3" fill="#bd0000"/><polygon points="566.5,476.2 576.2,474.1 592.5,476.2" fill="url(#cyl)"/><line x1="572.7" y1="469.3" x2="592.5" y2="476.2" stroke="#ff1010" stroke-width="1.1"/><polygon points="564.1,479.5 569.1,487.8 572.1,503.6" fill="url(#cyl)"/><line x1="572.7" y1="483.1" x2="572.1" y2="503.6" stroke="#ff1010" stroke-width="1.1"/><polygon points="560.1,478.2 553.5,485.5 539.1,493.1" fill="url(#cyl)"/><line x1="559.3" y1="487.3" x2="539.1" y2="493.1" stroke="#ff1010" stroke-width="1.1"/><polygon points="560.1,474.2 551.1,470.3 539.1,459.3" fill="url(#cyl)"/><line x1="551.0" y1="476.2" x2="539.1" y2="459.3" stroke="#ff1010" stroke-width="1.1"/><polygon points="564.1,472.9 565.1,463.3 572.1,448.8" fill="url(#cyl)"/><line x1="559.3" y1="465.1" x2="572.1" y2="448.8" stroke="#ff1010" stroke-width="1.1"/><line x1="563.0" y1="476.2" x2="592.5" y2="476.2" stroke="#ff1010" stroke-width="1.0"/><line x1="563.0" y1="476.2" x2="572.1" y2="503.6" stroke="#ff1010" stroke-width="1.0"/><line x1="559.4" y1="478.7" x2="543.9" y2="489.7" stroke="#5a0000" stroke-width="1.4"/><line x1="559.4" y1="473.7" x2="543.9" y2="462.7" stroke="#5a0000" stroke-width="1.4"/><line x1="563.0" y1="476.2" x2="572.1" y2="448.8" stroke="#ff1010" stroke-width="1.0"/></g>
<g><polygon points="649.0,470.9 662.9,454.6 662.2,454.6 648.3,470.9" fill="#ff0000"/><polygon points="627.1,498.9 640.0,482.0 639.4,482.0 626.5,498.9" fill="#ff0000"/><polygon points="685.0,482.0 663.5,488.9 662.9,509.4 649.0,493.1 627.1,498.9 640.0,482.0 627.1,465.1 649.0,470.9 662.9,454.6 663.5,475.1" fill="#ac0000"/><polygon points="656.8,482.0 664.9,476.9 685.0,482.0" fill="url(#cyl)"/><line x1="663.5" y1="475.1" x2="685.0" y2="482.0" stroke="#ff0000" stroke-width="1.1"/><polygon points="654.2,485.3 662.1,490.6 662.9,509.4" fill="url(#cyl)"/><line x1="663.5" y1="488.9" x2="662.9" y2="509.4" stroke="#ff0000" stroke-width="1.1"/><polygon points="649.9,484.0 646.7,492.4 627.1,498.9" fill="url(#cyl)"/><line x1="649.0" y1="493.1" x2="627.1" y2="498.9" stroke="#ff0000" stroke-width="1.1"/><polygon points="649.9,480.0 640.0,479.8 627.1,465.1" fill="url(#cyl)"/><line x1="640.0" y1="482.0" x2="627.1" y2="465.1" stroke="#ff0000" stroke-width="1.1"/><polygon points="654.2,478.7 651.3,470.2 662.9,454.6" fill="url(#cyl)"/><line x1="649.0" y1="470.9" x2="662.9" y2="454.6" stroke="#ff0000" stroke-width="1.1"/><line x1="653.0" y1="482.0" x2="685.0" y2="482.0" stroke="#ff0000" stroke-width="1.0"/><line x1="653.0" y1="482.0" x2="662.9" y2="509.4" stroke="#ff0000" stroke-width="1.0"/><line x1="649.1" y1="484.5" x2="632.3" y2="495.5" stroke="#5a0000" stroke-width="1.4"/><line x1="649.1" y1="479.5" x2="632.3" y2="468.5" stroke="#5a0000" stroke-width="1.4"/><line x1="653.0" y1="482.0" x2="662.9" y2="454.6" stroke="#ff0000" stroke-width="1.0"/></g>
<!-- axis indicator -->
<g font-family="Liberation Sans" font-size="10" fill="#000">
 <path d="M328.5 565 V600.5" stroke="#0000ff" stroke-width="1.2"/>
 <path d="M328.5 600.5 H364" stroke="#00e000" stroke-width="1.2"/>
 <path d="M328.5 600.5 L330 605" stroke="#ff0000" stroke-width="1.2"/>
 <path d="M324.5 555 H331.5 L324.5 562.5 H331.5 M366 598 L370 602 M374 597 L366 606 M325.5 606 L332 613 M332 606 L325.5 613" stroke="#000" stroke-width="1" fill="none"/>
</g>
</svg></div><!--/vp-->

<!-- VIEWPORT TOOLBAR -->
<div id="tb">
<svg class="a" style="left:0;top:0" width="1285" height="892" viewBox="0 0 1285 892">
<g fill="none" stroke="#111" stroke-width="1.2">
 <!-- preview dotted cube -->
 <path d="M268.5 675.5 L276.5 679.5 L268.5 684 L260.5 679.5 Z M260.5 679.5 V688 L265 690.5 M276.5 679.5 V688 L272 690.5 M268.5 684 V688" stroke-dasharray="1.2 1.6" stroke="#222" stroke-width="1.1"/>
 <path d="M265.5 688.5 L268 691 L265.5 693.5 M269.5 688.5 L272 691 L269.5 693.5" stroke-width="1.8"/>
 <!-- render cube -->
 <path d="M302 675.5 L309.5 679.5 V688.5 L305 691 M302 675.5 L294.5 679.5 V688.5 L299 691 M294.5 679.5 L302 683.5 L309.5 679.5 M302 683.5 V686" stroke-width="1.1"/>
 <path d="M299.5 686 H304.5 L302 690 Z" fill="#555" stroke="#555" stroke-width="0.8"/>
 <path d="M302 689 V692.5 M298.5 693.5 H305.5" stroke="#444" stroke-width="1.2"/>
 <!-- zoom all -->
 <circle cx="339.8" cy="681.5" r="5.8" stroke-width="1.2"/>
 <path d="M344 686 L347 691" stroke-width="3.2" stroke-linecap="round"/>
 <path d="M332 677.5 V674.3 H335 M345 674.3 H348 V677.5 M332 685.5 V688.7 H335" stroke-width="1.4"/>
 <!-- zoom in -->
 <circle cx="373" cy="681.3" r="5" stroke-width="1.2"/>
 <path d="M376.3 685 L379.5 690.5" stroke-width="3" stroke-linecap="round"/>
 <path d="M370 681.3 H376 M373 678.3 V684.3" stroke-width="1.4"/>
 <!-- zoom out -->
 <circle cx="406" cy="681.3" r="5" stroke-width="1.2"/>
 <path d="M409.3 685 L412.5 690.5" stroke-width="3" stroke-linecap="round"/>
 <path d="M403 681.3 H409" stroke-width="1.6"/>
 <!-- reset -->
 <path d="M435 679.5 A7.3 7.3 0 1 0 440 676.3" stroke-width="1.2"/>
 <path d="M433.5 676.5 L437 678 L434 681 Z" fill="#111" stroke-width="0.8"/>
 <!-- |10| -->
 <path d="M466.5 675.5 V692.5 M481.5 675.5 V692.5 M470 686.8 H478" stroke="#5a5a5a" stroke-width="1.6"/>
 <path d="M466.8 686.8 L471 683 V690.6 Z M481.2 686.8 L477 683 V690.6 Z" fill="#5a5a5a" stroke="none"/>
 <text x="468.7" y="684.2" font-family="Liberation Sans" font-size="11" fill="#555" stroke="none" textLength="9.5" lengthAdjust="spacingAndGlyphs">10</text>
 <!-- 45 -->
 <path d="M498.5 683 L507 691.5 L515.5 683" stroke="#5a5a5a" stroke-width="2"/>
 <path d="M501.5 681 A6 5 0 0 1 512 677.5" stroke="#5a5a5a" stroke-width="1.3"/>
 <path d="M510 677 L513.5 676 L513 680.5 Z" fill="#5a5a5a" stroke="none"/>
 <text x="503" y="688.5" font-family="Liberation Sans" font-size="10" fill="#666" stroke="none" textLength="8.5" lengthAdjust="spacingAndGlyphs">45</text>
</g>
<g stroke="#c9c9c9" stroke-width="1"><path d="M323.5 675 V694 M528.5 675 V694 M732.5 675 V694 M805.5 675 V694"/></g>
<g fill="none" stroke="#111" stroke-width="1.4" font-family="Liberation Sans">
 <!-- +X -->
 <path d="M541.5 679.5 L548.5 686.5 M544.5 676 V689.5 M539.5 682.5 H551"/>
 <ellipse cx="554" cy="682.5" rx="3.3" ry="2.2" fill="#111" stroke="none"/><circle cx="554" cy="682.5" r="0.75" fill="#fff" stroke="none"/>
 <text x="549.5" y="694.5" font-size="10.5" fill="#111" stroke="none" textLength="9" lengthAdjust="spacingAndGlyphs">+X</text>
 <!-- -X -->
 <path d="M575 680 L581.5 686.5 M578.5 676 V690 M573.5 683 H586"/>
 <ellipse cx="572" cy="679.5" rx="3.3" ry="2.2" fill="#111" stroke="none"/><circle cx="572" cy="679.5" r="0.75" fill="#fff" stroke="none"/>
 <text x="583" y="694.5" font-size="10.5" fill="#111" stroke="none" textLength="8.5" lengthAdjust="spacingAndGlyphs">-X</text>
 <!-- +Y -->
 <path d="M606 683 H615 M610.5 676 V690 M607 687 L614.5 679"/>
 <ellipse cx="617.5" cy="677.7" rx="3.3" ry="2.2" fill="#111" stroke="none"/><circle cx="617.5" cy="677.7" r="0.75" fill="#fff" stroke="none"/>
 <text x="616" y="694.5" font-size="10.5" fill="#111" stroke="none" textLength="8.5" lengthAdjust="spacingAndGlyphs">+Y</text>
 <!-- -Y -->
 <path d="M638.5 682.5 H649 M644.5 676 V688 M640.5 686 L648 679"/>
 <ellipse cx="639" cy="687.5" rx="3.3" ry="2.2" fill="#111" stroke="none"/><circle cx="639" cy="687.5" r="0.75" fill="#fff" stroke="none"/>
 <text x="650" y="694.5" font-size="10.5" fill="#111" stroke="none" textLength="7.5" lengthAdjust="spacingAndGlyphs">-Y</text>
 <!-- +Z -->
 <path d="M672 681.5 H682 M677 677 V689 M673.5 678 L680.5 686"/>
 <ellipse cx="677.5" cy="674.5" rx="3.3" ry="2.2" fill="#111" stroke="none"/><circle cx="677.5" cy="674.5" r="0.75" fill="#fff" stroke="none"/>
 <text x="682" y="694.5" font-size="10.5" fill="#111" stroke="none" textLength="8.5" lengthAdjust="spacingAndGlyphs">+Z</text>
 <!-- -Z -->
 <path d="M705 681.5 H715 M710.3 676 V689 M706.5 678 L713.5 685"/>
 <ellipse cx="710.3" cy="691.3" rx="3.3" ry="2.2" fill="#111" stroke="none"/><circle cx="710.3" cy="691.3" r="0.75" fill="#fff" stroke="none"/>
 <text x="714" y="694.5" font-size="10.5" fill="#111" stroke="none" textLength="10" lengthAdjust="spacingAndGlyphs">-Z</text>
</g>
<!-- pressed buttons -->
<rect x="736.5" y="669.5" width="31" height="30" rx="3" fill="#dcdcdc" stroke="#b9b9b9"/>
<rect x="809.5" y="669.5" width="31" height="30" rx="3" fill="#dcdcdc" stroke="#b9b9b9"/>
<rect x="842.5" y="669.5" width="31" height="30" rx="3" fill="#dcdcdc" stroke="#b9b9b9"/>
<g fill="none" stroke="#111" stroke-width="1.2">
 <!-- perspective -->
 <path d="M742.5 683 H753 V693.5 H742.5 Z M742.5 683 L760.5 674.5 L753 693.5 M753 683 L760.5 674.5"/>
 <!-- ortho cube -->
 <path d="M776.5 679 H788.5 V692.5 H776.5 Z M781.5 675.5 H793.5 V689 H781.5 Z M776.5 679 L781.5 675.5 M788.5 679 L793.5 675.5 M788.5 692.5 L793.5 689 M776.5 692.5 L781.5 689" stroke-width="1.1"/>
 <!-- axes -->
 <path d="M824.5 675 V683.5 H833.5 M824.5 683.5 L819 689.5" stroke="#333"/>
 <!-- scale -->
 <path d="M857.5 675 V683.5 M857.5 683.5 L851.5 689.5" stroke="#333"/>
 <path d="M856 676 H859 M856 678.5 H859 M856 681 H859 M860 682 V684 M862 682 V684 M864 682 V684 M853 687 L854.5 688.5 M855 685 L856.5 686.5" stroke="#333" stroke-width="0.9"/>
 <text x="859.5" y="692.5" font-family="Liberation Sans" font-size="8.5" fill="#222" stroke="none" textLength="8.5" lengthAdjust="spacingAndGlyphs">10</text>
 <!-- crosshair rect -->
 <path d="M883 678.5 V689.5 M898.5 678.5 V689.5 M885.5 678.5 H896 M885.5 689.5 H896" stroke-dasharray="2 2.2" stroke-width="1.3"/>
</g>
<path d="M640 706.5 H657" stroke="#bbb" stroke-dasharray="1 2"/>
</svg>

</div><!--/tb-->

<!-- CONSOLE -->
<div class="a" style="left:253px;top:713px;font-size:12.4px;-webkit-text-stroke:0.2px #000">Console</div>
<svg class="a" style="left:1016px;top:713px" width="28" height="14" viewBox="0 0 28 14">
 <rect x="1.5" y="1.5" width="10" height="10" rx="2" fill="none" stroke="#6b6b6b" stroke-width="1"/>
 <rect x="3.6" y="5.4" width="4.6" height="4.4" rx="1" fill="none" stroke="#6b6b6b" stroke-width="1.1"/>
 <path d="M5.6 5.2 V3.6 H9.6 V7.6 H8.4" fill="none" stroke="#6b6b6b" stroke-width="1.1"/>
 <rect x="15.5" y="1.5" width="10" height="10" rx="2" fill="none" stroke="#6b6b6b" stroke-width="1"/>
 <path d="M18 4 L23 9 M23 4 L18 9" stroke="#555" stroke-width="2"/>
</svg>
<div class="a cons">
 <div style="top:0px">Compiling design (CSG Tree generation)...</div>
 <div style="top:17px">Compiling design (CSG Products generation)...</div>
 <div style="top:34px">Geometries in cache: 559</div>
 <div style="top:51px">Geometry cache size in bytes: 75063096</div>
 <div style="top:68px">CGAL Polyhedrons in cache: 62</div>
 <div style="top:85px">CGAL cache size in bytes: 0</div>
 <div style="top:102px">Compiling design (CSG Products normalization)...</div>
 <div style="top:119px">Normalized tree has 128 elements!</div>
 <div style="top:136px">Compile and preview finished.</div>
 <div style="top:153px">Total rendering time: 0:00:00.051</div>
</div>
<div class="a vsb" style="left:1029px;top:730px;width:15px;height:162px;border-right:1px solid #b5b5b5"></div>
<div class="a sbbtn" style="left:1030px;top:730px;width:13px;height:14px"></div>
<div class="a uparrow" style="left:1033px;top:734px"></div>
<div class="a sbhandle" style="left:1030px;top:744px;width:13px;height:139px"></div>

<!-- CUSTOMIZER -->
<div id="cust">
<div class="a cust" style="left:1054px;top:22.5px;line-height:17px">Customizer</div>
<div class="a" style="left:1050px;top:48px;width:14px;height:14px;background:#fff;border:1px solid #b5b5b5;border-radius:1px"></div>
<svg class="a" style="left:1050px;top:48px" width="14" height="14"><path d="M3.2 6.3 L6 10.3 L10.5 3" fill="none" stroke="#111" stroke-width="1.9"/></svg>
<div class="a cust" style="left:1069px;top:47.5px;line-height:17px;white-space:pre">Automatic Preview</div>
<div class="btn" style="left:1188px;top:43px;width:120px;height:25px"></div>
<div class="a cust" style="left:1193px;top:47.5px;line-height:17px;white-space:pre">Show Details</div>
<div class="a" style="left:1050px;top:72px;width:184px;height:25px;background:#fff;border:1px solid #b9b9b9;border-radius:3px"></div>
<div class="a" style="left:1213px;top:73px;width:20px;height:23px;background:linear-gradient(#fbfbfb,#ececec);border-left:1px solid #c8c8c8;border-radius:0 3px 3px 0"></div>
<div class="tri" style="left:1219.5px;top:83px;border-left-width:4px;border-right-width:4px;border-top-width:4px"></div>
<div class="a cust" style="left:1054px;top:76.5px;line-height:17px;white-space:pre">New set 5</div>
<div class="btn" style="left:1238px;top:72px;width:40px;height:25px"></div>
<div class="a" style="left:1251px;top:75px;width:14px;text-align:center;font-size:13px;line-height:17px">+</div>
<div class="btn" style="left:1282px;top:72px;width:20px;height:25px"></div>
<div class="a" style="left:1050px;top:101px;width:1px;height:800px;background:#bcbcbc"></div>
<div class="ghead" style="top:101px;"></div>
<div class="tri" style="left:1058px;top:114px"></div>
<div class="a" style="left:1072px;top:108.5px;font-size:15px;line-height:17px;white-space:pre;-webkit-text-stroke:0.2px #000">SVG parameters</div>
<div class="ghead" style="top:450px;height:29px;border-top:1px solid #b9b9b9"></div>
<div class="tri" style="left:1058px;top:462px"></div>
<div class="a" style="left:1072px;top:457.2px;font-size:15px;line-height:17px;white-space:pre;-webkit-text-stroke:0.2px #000">Tube paramaters</div>
<div class="ghead" style="top:626px;height:29px;border-top:1px solid #b9b9b9"></div>
<div class="tri" style="left:1058px;top:638px"></div>
<div class="a" style="left:1072px;top:633.4px;font-size:15px;line-height:17px;white-space:pre;-webkit-text-stroke:0.2px #000">Pattern parameters</div>
<div class="lbl" style="top:136.3px;line-height:17px">Show svg</div>
<div class="lbl" style="top:158.2px;line-height:17px">Path to SVG File</div>
<div class="a" style="left:1055px;top:176px;width:240px;height:29px;background:#fff;border:1px solid #b9b9b9;border-radius:3px"></div>
<div class="a" style="left:1058px;top:183px;font-size:15.8px;line-height:17px;white-space:pre;-webkit-text-stroke:0.2px #000">drawing.svg</div>
<div class="lbl" style="top:213.3px;line-height:17px">Scale svg X</div>
<div class="inp" style="top:206.0px"></div>
<div class="val" style="left:1190px;width:95.5px;text-align:right;top:212.8px;line-height:17px">0.6</div>
<div class="groove" style="top:244.0px"></div>
<div class="gfill" style="top:244.0px;width:17.0px"></div>
<div class="handle" style="left:1069.0px;top:240.5px"></div>
<div class="lbl" style="top:262.3px;line-height:17px">Scale svg Y</div>
<div class="inp" style="top:255.0px"></div>
<div class="val" style="left:1190px;width:95.5px;text-align:right;top:261.8px;line-height:17px">0.7</div>
<div class="groove" style="top:292.8px"></div>
<div class="gfill" style="top:292.8px;width:19.5px"></div>
<div class="handle" style="left:1071.5px;top:289.3px"></div>
<div class="lbl" style="top:311.3px;line-height:17px">Scale svg Z</div>
<div class="inp" style="top:304.0px"></div>
<div class="val" style="left:1190px;width:95.5px;text-align:right;top:310.8px;line-height:17px">1.0</div>
<div class="groove" style="top:341.9px"></div>
<div class="gfill" style="top:341.9px;width:25.3px"></div>
<div class="handle" style="left:1077.3px;top:338.4px"></div>
<div class="lbl" style="top:360.3px;line-height:17px">Adjust Z</div>
<div class="inp" style="top:353.0px"></div>
<div class="val" style="left:1190px;width:95.5px;text-align:right;top:359.8px;line-height:17px">9.3</div>
<div class="groove" style="top:390.9px"></div>
<div class="gfill" style="top:390.9px;width:81.5px"></div>
<div class="handle" style="left:1133.5px;top:387.4px"></div>
<div class="lbl" style="top:409.3px;line-height:17px">Adjust oversize</div>
<div class="inp" style="top:402.0px"></div>
<div class="val" style="left:1190px;width:95.5px;text-align:right;top:408.8px;line-height:17px">15.8</div>
<div class="groove" style="top:440.0px"></div>
<div class="gfill" style="top:440.0px;width:41.5px"></div>
<div class="handle" style="left:1093.5px;top:436.5px"></div>
<div class="lbl" style="top:487.2px;line-height:17px">Tube height</div>
<div class="inp" style="top:479.9px"></div>
<div class="val" style="left:1190px;width:95.5px;text-align:right;top:486.7px;line-height:17px">50.0</div>
<div class="groove" style="top:517.9px"></div>
<div class="gfill" style="top:517.9px;width:56.3px"></div>
<div class="handle" style="left:1108.3px;top:514.4px"></div>
<div class="lbl" style="top:536.2px;line-height:17px">Tube diameter</div>
<div class="inp" style="top:528.9px"></div>
<div class="val" style="left:1190px;width:95.5px;text-align:right;top:535.7px;line-height:17px">45.0</div>
<div class="groove" style="top:566.9px"></div>
<div class="gfill" style="top:566.9px;width:100.2px"></div>
<div class="handle" style="left:1152.2px;top:563.4px"></div>
<div class="lbl" style="top:585.2px;line-height:17px">Wall thickness</div>
<div class="inp" style="top:577.9px"></div>
<div class="val" style="left:1190px;width:95.5px;text-align:right;top:584.7px;line-height:17px">4.0</div>
<div class="groove" style="top:615.7px"></div>
<div class="gfill" style="top:615.7px;width:86.2px"></div>
<div class="handle" style="left:1138.2px;top:612.2px"></div>
<div class="lbl" style="top:662.3px;line-height:17px">Vertical spacing</div>
<div class="inp" style="top:656.2px"></div>
<div class="groove" style="top:694.2px"></div>
<div class="gfill" style="top:694.2px;width:31.3px"></div>
<div class="handle" style="left:1083.3px;top:690.7px"></div>
<div class="lbl" style="top:711.8px;line-height:17px">Horizontal spacin</div>
<div class="inp" style="top:705.7px"></div>
<div class="val" style="left:1190px;width:95.5px;text-align:right;top:712.5px;line-height:17px">25.</div>
<div class="groove" style="top:743.1px"></div>
<div class="gfill" style="top:743.1px;width:14.4px"></div>
<div class="handle" style="left:1066.4px;top:739.6px"></div>
<div class="lbl" style="top:760.7px;line-height:17px">Rotation</div>
<div class="inp" style="top:754.6px"></div>
<div class="groove" style="top:792.1px"></div>
<div class="gfill" style="top:792.1px;width:57.0px"></div>
<div class="handle" style="left:1109.0px;top:788.6px"></div>
</div><!--/cust-->
</body></html>
